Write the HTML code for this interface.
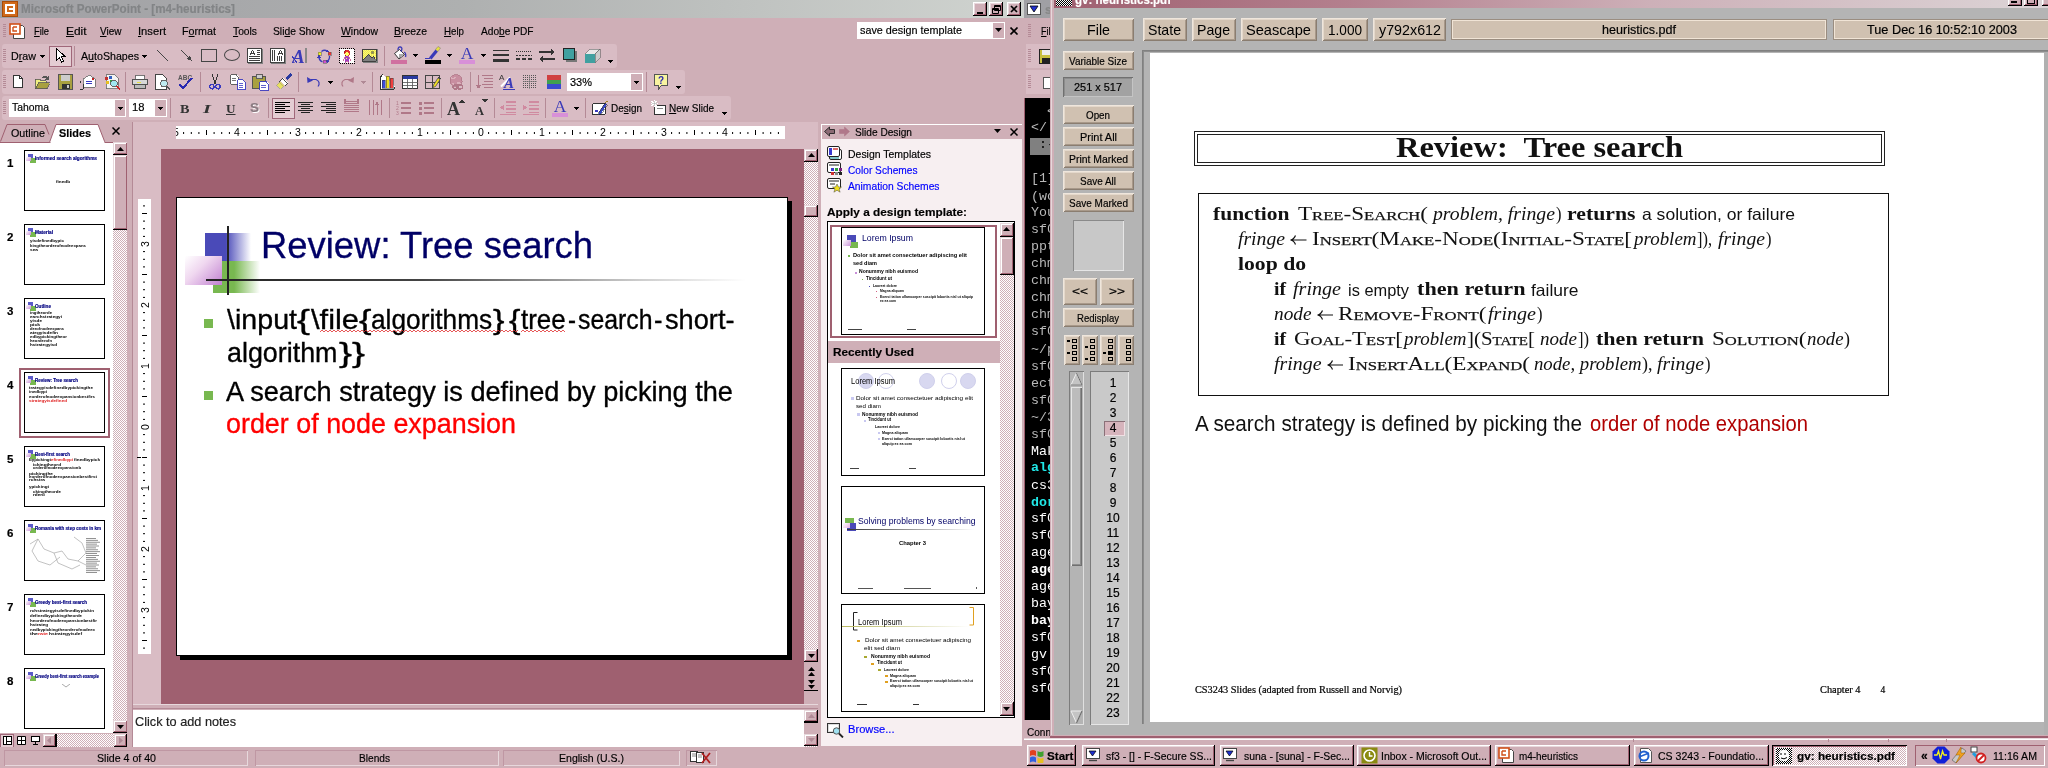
<!DOCTYPE html>
<html><head><meta charset="utf-8"><title>screenshot</title>
<style>
html,body{margin:0;padding:0;background:#cfafb7;}#s{position:relative;width:2048px;height:768px;overflow:hidden;background:#cfafb7;will-change:transform;}#s div,#s span.t,#s svg{position:absolute;}#s span.t{white-space:pre;}#s u{text-decoration:underline;text-underline-offset:1px;}
</style></head>
<body><div id="s">
<div style="left:0px;top:0px;width:1024px;height:18px;background:linear-gradient(90deg,#a0a0a4 0%,#aeb0b0 45%,#d0d4d0 100%);"></div>
<div style="left:2px;top:1px;width:16px;height:16px;background:#d06a1a;box-shadow:inset 0 0 0 1px #a84c08;"></div>
<div style="left:5px;top:4px;width:10px;height:10px;background:#fff;"></div>
<div style="left:7px;top:6px;width:6px;height:2px;background:#d06a1a;"></div>
<div style="left:7px;top:6px;width:2px;height:6px;background:#d06a1a;"></div>
<div style="left:7px;top:10px;width:6px;height:2px;background:#d06a1a;"></div>
<span class="t" style="font-family:'Liberation Sans', sans-serif;font-size:12.5px;font-weight:bold;color:#828486;line-height:12.5px;top:3.22px;-webkit-text-stroke:0.180px #828486;transform:scaleX(0.9337);transform-origin:0 0;left:20.50px;">Microsoft PowerPoint - [m4-heuristics]</span>
<div style="left:973px;top:2px;width:14px;height:14px;background:#cfafb7;box-shadow:inset -1px -1px 0 #000,inset 1px 1px 0 #fff,inset -2px -2px 0 #9f6070,inset 2px 2px 0 #e7d8dc;"></div>
<div style="left:989px;top:2px;width:14px;height:14px;background:#cfafb7;box-shadow:inset -1px -1px 0 #000,inset 1px 1px 0 #fff,inset -2px -2px 0 #9f6070,inset 2px 2px 0 #e7d8dc;"></div>
<div style="left:1007px;top:2px;width:14px;height:14px;background:#cfafb7;box-shadow:inset -1px -1px 0 #000,inset 1px 1px 0 #fff,inset -2px -2px 0 #9f6070,inset 2px 2px 0 #e7d8dc;"></div>
<div style="left:977px;top:12px;width:6px;height:2px;background:#000;"></div>
<svg style="left:989px;top:2px;" width="14" height="14" viewBox="0 0 14 14" shape-rendering="auto"><path d="M5.5 3.5h6v5h-6z M5.5 4.5h6 M3.5 6.5h6v5h-6z M3.5 7.5h6" fill="none" stroke="#000" stroke-width="1"/></svg>
<svg style="left:1007px;top:2px;" width="14" height="14" viewBox="0 0 14 14" shape-rendering="auto"><path d="M4 4l6 6M10 4l-6 6" stroke="#000" stroke-width="1.7" fill="none"/></svg>
<div style="left:0px;top:18px;width:1024px;height:26px;background:#cfafb7;"></div>
<div style="left:3px;top:24px;width:3px;height:14px;"><div style="left:0;top:0px;width:3px;height:1px;background:#b48a96"></div><div style="left:0;top:2px;width:3px;height:1px;background:#b48a96"></div><div style="left:0;top:4px;width:3px;height:1px;background:#b48a96"></div><div style="left:0;top:6px;width:3px;height:1px;background:#b48a96"></div><div style="left:0;top:8px;width:3px;height:1px;background:#b48a96"></div><div style="left:0;top:10px;width:3px;height:1px;background:#b48a96"></div><div style="left:0;top:12px;width:3px;height:1px;background:#b48a96"></div></div>
<svg style="left:9px;top:23px;" width="17" height="17" viewBox="0 0 17 17" shape-rendering="auto"><path d="M4.5 2.5h9l2 2v11h-11z" fill="#fff" stroke="#444" stroke-width="1"/><rect x="1" y="1" width="10" height="10" fill="#fff" stroke="#d0501a" stroke-width="1.6"/><path d="M4 4h4M4 4v4h4" stroke="#d0501a" stroke-width="1.4" fill="none"/></svg>
<span class="t" style="font-family:'Liberation Sans', sans-serif;font-size:11.5px;color:#000;line-height:11.5px;top:26.07px;-webkit-text-stroke:0.180px #000;transform:scaleX(0.8088);transform-origin:0 0;left:34.00px;"><u>F</u>ile</span>
<span class="t" style="font-family:'Liberation Sans', sans-serif;font-size:11.5px;color:#000;line-height:11.5px;top:26.07px;-webkit-text-stroke:0.180px #000;transform:scaleX(1.0339);transform-origin:0 0;left:65.50px;"><u>E</u>dit</span>
<span class="t" style="font-family:'Liberation Sans', sans-serif;font-size:11.5px;color:#000;line-height:11.5px;top:26.07px;-webkit-text-stroke:0.180px #000;transform:scaleX(0.8692);transform-origin:0 0;left:99.50px;"><u>V</u>iew</span>
<span class="t" style="font-family:'Liberation Sans', sans-serif;font-size:11.5px;color:#000;line-height:11.5px;top:26.07px;-webkit-text-stroke:0.180px #000;transform:scaleX(0.9729);transform-origin:0 0;left:138.00px;"><u>I</u>nsert</span>
<span class="t" style="font-family:'Liberation Sans', sans-serif;font-size:11.5px;color:#000;line-height:11.5px;top:26.07px;-webkit-text-stroke:0.180px #000;transform:scaleX(0.9331);transform-origin:0 0;left:182.00px;">F<u>o</u>rmat</span>
<span class="t" style="font-family:'Liberation Sans', sans-serif;font-size:11.5px;color:#000;line-height:11.5px;top:26.07px;-webkit-text-stroke:0.180px #000;transform:scaleX(0.8935);transform-origin:0 0;left:233.00px;"><u>T</u>ools</span>
<span class="t" style="font-family:'Liberation Sans', sans-serif;font-size:11.5px;color:#000;line-height:11.5px;top:26.07px;-webkit-text-stroke:0.180px #000;transform:scaleX(0.8949);transform-origin:0 0;left:273.00px;">Sli<u>d</u>e Show</span>
<span class="t" style="font-family:'Liberation Sans', sans-serif;font-size:11.5px;color:#000;line-height:11.5px;top:26.07px;-webkit-text-stroke:0.180px #000;transform:scaleX(0.9042);transform-origin:0 0;left:341.00px;"><u>W</u>indow</span>
<span class="t" style="font-family:'Liberation Sans', sans-serif;font-size:11.5px;color:#000;line-height:11.5px;top:26.07px;-webkit-text-stroke:0.180px #000;transform:scaleX(0.9053);transform-origin:0 0;left:394.00px;"><u>B</u>reeze</span>
<span class="t" style="font-family:'Liberation Sans', sans-serif;font-size:11.5px;color:#000;line-height:11.5px;top:26.07px;-webkit-text-stroke:0.180px #000;transform:scaleX(0.8449);transform-origin:0 0;left:444.00px;"><u>H</u>elp</span>
<span class="t" style="font-family:'Liberation Sans', sans-serif;font-size:11.5px;color:#000;line-height:11.5px;top:26.07px;-webkit-text-stroke:0.180px #000;transform:scaleX(0.8828);transform-origin:0 0;left:480.50px;">Ado<u>b</u>e PDF</span>
<div style="left:857px;top:22px;width:148px;height:17px;background:#fff;box-shadow:inset 0 0 0 1px #fff;"></div>
<div style="left:993px;top:23px;width:11px;height:15px;background:#cfafb7;"></div>
<svg style="left:995px;top:28px;" width="7" height="4" viewBox="0 0 7 4" shape-rendering="auto"><path d="M0 0h7l-3.5 4z" fill="#000"/></svg>
<span class="t" style="font-family:'Liberation Sans', sans-serif;font-size:11.5px;color:#000;line-height:11.5px;top:25.07px;-webkit-text-stroke:0.180px #000;transform:scaleX(0.9385);transform-origin:0 0;left:860.00px;">save design template</span>
<svg style="left:1010px;top:27px;" width="9" height="8" viewBox="0 0 9 8" shape-rendering="auto"><path d="M0.5 0.5l7 7M7.5 0.5l-7 7" stroke="#000" stroke-width="1.6" fill="none"/></svg>
<div style="left:2px;top:44px;width:615px;height:24px;background:#d9bcc4;border-radius:3px;"></div>
<div style="left:2px;top:70px;width:683px;height:24px;background:#d9bcc4;border-radius:3px;"></div>
<div style="left:2px;top:96px;width:729px;height:24px;background:#d9bcc4;border-radius:3px;"></div>
<div style="left:3px;top:49px;width:3px;height:14px;"><div style="left:0;top:0px;width:3px;height:1px;background:#b48a96"></div><div style="left:0;top:2px;width:3px;height:1px;background:#b48a96"></div><div style="left:0;top:4px;width:3px;height:1px;background:#b48a96"></div><div style="left:0;top:6px;width:3px;height:1px;background:#b48a96"></div><div style="left:0;top:8px;width:3px;height:1px;background:#b48a96"></div><div style="left:0;top:10px;width:3px;height:1px;background:#b48a96"></div><div style="left:0;top:12px;width:3px;height:1px;background:#b48a96"></div></div>
<div style="left:3px;top:75px;width:3px;height:14px;"><div style="left:0;top:0px;width:3px;height:1px;background:#b48a96"></div><div style="left:0;top:2px;width:3px;height:1px;background:#b48a96"></div><div style="left:0;top:4px;width:3px;height:1px;background:#b48a96"></div><div style="left:0;top:6px;width:3px;height:1px;background:#b48a96"></div><div style="left:0;top:8px;width:3px;height:1px;background:#b48a96"></div><div style="left:0;top:10px;width:3px;height:1px;background:#b48a96"></div><div style="left:0;top:12px;width:3px;height:1px;background:#b48a96"></div></div>
<div style="left:3px;top:101px;width:3px;height:14px;"><div style="left:0;top:0px;width:3px;height:1px;background:#b48a96"></div><div style="left:0;top:2px;width:3px;height:1px;background:#b48a96"></div><div style="left:0;top:4px;width:3px;height:1px;background:#b48a96"></div><div style="left:0;top:6px;width:3px;height:1px;background:#b48a96"></div><div style="left:0;top:8px;width:3px;height:1px;background:#b48a96"></div><div style="left:0;top:10px;width:3px;height:1px;background:#b48a96"></div><div style="left:0;top:12px;width:3px;height:1px;background:#b48a96"></div></div>
<span class="t" style="font-family:'Liberation Sans', sans-serif;font-size:11.5px;color:#000;line-height:11.5px;top:51.07px;-webkit-text-stroke:0.180px #000;transform:scaleX(0.9308);transform-origin:0 0;left:10.50px;">D<u>r</u>aw</span>
<svg style="left:39.5px;top:55px;" width="5" height="3" viewBox="0 0 5 3" shape-rendering="crispEdges"><path d="M0 0h5l-2.5 3z" fill="#000"/></svg>
<div style="left:49px;top:45.5px;width:23px;height:21px;background:#e4cdd3;box-shadow:inset 0 0 0 1px #a0687a;"></div>
<svg style="left:54px;top:47px;" width="14" height="18" viewBox="0 0 14 18" shape-rendering="crispEdges"><path d="M2.5 1.5v12l3-3 2.2 4.7 1.8-0.9-2.2-4.5h4z" fill="#fff" stroke="#000" stroke-width="1"/></svg>
<div style="left:74px;top:46px;width:1px;height:20px;background:#b48a96;"></div>
<span class="t" style="font-family:'Liberation Sans', sans-serif;font-size:11.5px;color:#000;line-height:11.5px;top:51.07px;-webkit-text-stroke:0.180px #000;transform:scaleX(0.9252);transform-origin:0 0;left:80.50px;">A<u>u</u>toShapes</span>
<svg style="left:142px;top:55px;" width="5" height="3" viewBox="0 0 5 3" shape-rendering="crispEdges"><path d="M0 0h5l-2.5 3z" fill="#000"/></svg>
<svg style="left:156px;top:48px;" width="16" height="16" viewBox="0 0 16 16" shape-rendering="crispEdges"><path d="M1 2l11 11" stroke="#444" stroke-width="1"/></svg>
<svg style="left:180px;top:48px;" width="16" height="16" viewBox="0 0 16 16" shape-rendering="crispEdges"><path d="M1 2l10 10" stroke="#444" stroke-width="1"/><path d="M12 13l-5.5-2 3.5-3.5z" fill="#444"/></svg>
<div style="left:201px;top:49px;width:16px;height:13px;box-sizing:border-box;border:1px solid #444;"></div>
<div style="left:224px;top:49px;width:16px;height:12px;box-sizing:border-box;border:1px solid #444;border-radius:50%;"></div>
<svg style="left:247px;top:48px;" width="16" height="16" viewBox="0 0 16 16" shape-rendering="crispEdges"><rect x="0" y="0" width="15" height="1" fill="#404040"/><rect x="0" y="1" width="1" height="1" fill="#404040"/><rect x="1" y="1" width="13" height="1" fill="#fff"/><rect x="14" y="1" width="1" height="1" fill="#404040"/><rect x="15" y="1" width="1" height="1" fill="#808080"/><rect x="0" y="2" width="1" height="1" fill="#404040"/><rect x="1" y="2" width="4" height="1" fill="#fff"/><rect x="5" y="2" width="1" height="1" fill="#404040"/><rect x="6" y="2" width="4" height="1" fill="#fff"/><rect x="10" y="2" width="3" height="1" fill="#404040"/><rect x="13" y="2" width="1" height="1" fill="#fff"/><rect x="14" y="2" width="1" height="1" fill="#404040"/><rect x="15" y="2" width="1" height="1" fill="#808080"/><rect x="0" y="3" width="1" height="1" fill="#404040"/><rect x="1" y="3" width="3" height="1" fill="#fff"/><rect x="4" y="3" width="1" height="1" fill="#404040"/><rect x="5" y="3" width="1" height="1" fill="#fff"/><rect x="6" y="3" width="1" height="1" fill="#404040"/><rect x="7" y="3" width="7" height="1" fill="#fff"/><rect x="14" y="3" width="1" height="1" fill="#404040"/><rect x="15" y="3" width="1" height="1" fill="#808080"/><rect x="0" y="4" width="1" height="1" fill="#404040"/><rect x="1" y="4" width="3" height="1" fill="#fff"/><rect x="4" y="4" width="1" height="1" fill="#404040"/><rect x="5" y="4" width="1" height="1" fill="#fff"/><rect x="6" y="4" width="1" height="1" fill="#404040"/><rect x="7" y="4" width="3" height="1" fill="#fff"/><rect x="10" y="4" width="3" height="1" fill="#404040"/><rect x="13" y="4" width="1" height="1" fill="#fff"/><rect x="14" y="4" width="1" height="1" fill="#404040"/><rect x="15" y="4" width="1" height="1" fill="#808080"/><rect x="0" y="5" width="1" height="1" fill="#404040"/><rect x="1" y="5" width="2" height="1" fill="#fff"/><rect x="3" y="5" width="5" height="1" fill="#404040"/><rect x="8" y="5" width="6" height="1" fill="#fff"/><rect x="14" y="5" width="1" height="1" fill="#404040"/><rect x="15" y="5" width="1" height="1" fill="#808080"/><rect x="0" y="6" width="1" height="1" fill="#404040"/><rect x="1" y="6" width="2" height="1" fill="#fff"/><rect x="3" y="6" width="1" height="1" fill="#404040"/><rect x="4" y="6" width="3" height="1" fill="#fff"/><rect x="7" y="6" width="1" height="1" fill="#404040"/><rect x="8" y="6" width="2" height="1" fill="#fff"/><rect x="10" y="6" width="3" height="1" fill="#404040"/><rect x="13" y="6" width="1" height="1" fill="#fff"/><rect x="14" y="6" width="1" height="1" fill="#404040"/><rect x="15" y="6" width="1" height="1" fill="#808080"/><rect x="0" y="7" width="1" height="1" fill="#404040"/><rect x="1" y="7" width="13" height="1" fill="#fff"/><rect x="14" y="7" width="1" height="1" fill="#404040"/><rect x="15" y="7" width="1" height="1" fill="#808080"/><rect x="0" y="8" width="1" height="1" fill="#404040"/><rect x="1" y="8" width="1" height="1" fill="#fff"/><rect x="2" y="8" width="11" height="1" fill="#404040"/><rect x="13" y="8" width="1" height="1" fill="#fff"/><rect x="14" y="8" width="1" height="1" fill="#404040"/><rect x="15" y="8" width="1" height="1" fill="#808080"/><rect x="0" y="9" width="1" height="1" fill="#404040"/><rect x="1" y="9" width="13" height="1" fill="#fff"/><rect x="14" y="9" width="1" height="1" fill="#404040"/><rect x="15" y="9" width="1" height="1" fill="#808080"/><rect x="0" y="10" width="1" height="1" fill="#404040"/><rect x="1" y="10" width="1" height="1" fill="#fff"/><rect x="2" y="10" width="11" height="1" fill="#404040"/><rect x="13" y="10" width="1" height="1" fill="#fff"/><rect x="14" y="10" width="1" height="1" fill="#404040"/><rect x="15" y="10" width="1" height="1" fill="#808080"/><rect x="0" y="11" width="1" height="1" fill="#404040"/><rect x="1" y="11" width="13" height="1" fill="#fff"/><rect x="14" y="11" width="1" height="1" fill="#404040"/><rect x="15" y="11" width="1" height="1" fill="#808080"/><rect x="0" y="12" width="1" height="1" fill="#404040"/><rect x="1" y="12" width="1" height="1" fill="#fff"/><rect x="2" y="12" width="11" height="1" fill="#404040"/><rect x="13" y="12" width="1" height="1" fill="#fff"/><rect x="14" y="12" width="1" height="1" fill="#404040"/><rect x="15" y="12" width="1" height="1" fill="#808080"/><rect x="0" y="13" width="1" height="1" fill="#404040"/><rect x="1" y="13" width="13" height="1" fill="#fff"/><rect x="14" y="13" width="1" height="1" fill="#404040"/><rect x="15" y="13" width="1" height="1" fill="#808080"/><rect x="0" y="14" width="15" height="1" fill="#404040"/><rect x="15" y="14" width="1" height="1" fill="#808080"/><rect x="1" y="15" width="15" height="1" fill="#808080"/></svg>
<svg style="left:270px;top:48px;" width="16" height="16" viewBox="0 0 16 16" shape-rendering="crispEdges"><rect x="0" y="0" width="15" height="1" fill="#404040"/><rect x="0" y="1" width="1" height="1" fill="#404040"/><rect x="1" y="1" width="13" height="1" fill="#fff"/><rect x="14" y="1" width="1" height="1" fill="#404040"/><rect x="15" y="1" width="1" height="1" fill="#808080"/><rect x="0" y="2" width="1" height="1" fill="#404040"/><rect x="1" y="2" width="1" height="1" fill="#fff"/><rect x="2" y="2" width="1" height="1" fill="#404040"/><rect x="3" y="2" width="1" height="1" fill="#fff"/><rect x="4" y="2" width="1" height="1" fill="#404040"/><rect x="5" y="2" width="5" height="1" fill="#fff"/><rect x="10" y="2" width="1" height="1" fill="#404040"/><rect x="11" y="2" width="3" height="1" fill="#fff"/><rect x="14" y="2" width="1" height="1" fill="#404040"/><rect x="15" y="2" width="1" height="1" fill="#808080"/><rect x="0" y="3" width="1" height="1" fill="#404040"/><rect x="1" y="3" width="1" height="1" fill="#fff"/><rect x="2" y="3" width="1" height="1" fill="#404040"/><rect x="3" y="3" width="1" height="1" fill="#fff"/><rect x="4" y="3" width="1" height="1" fill="#404040"/><rect x="5" y="3" width="4" height="1" fill="#fff"/><rect x="9" y="3" width="1" height="1" fill="#404040"/><rect x="10" y="3" width="1" height="1" fill="#fff"/><rect x="11" y="3" width="1" height="1" fill="#404040"/><rect x="12" y="3" width="2" height="1" fill="#fff"/><rect x="14" y="3" width="1" height="1" fill="#404040"/><rect x="15" y="3" width="1" height="1" fill="#808080"/><rect x="0" y="4" width="1" height="1" fill="#404040"/><rect x="1" y="4" width="1" height="1" fill="#fff"/><rect x="2" y="4" width="1" height="1" fill="#404040"/><rect x="3" y="4" width="1" height="1" fill="#fff"/><rect x="4" y="4" width="1" height="1" fill="#404040"/><rect x="5" y="4" width="4" height="1" fill="#fff"/><rect x="9" y="4" width="1" height="1" fill="#404040"/><rect x="10" y="4" width="1" height="1" fill="#fff"/><rect x="11" y="4" width="1" height="1" fill="#404040"/><rect x="12" y="4" width="2" height="1" fill="#fff"/><rect x="14" y="4" width="1" height="1" fill="#404040"/><rect x="15" y="4" width="1" height="1" fill="#808080"/><rect x="0" y="5" width="1" height="1" fill="#404040"/><rect x="1" y="5" width="1" height="1" fill="#fff"/><rect x="2" y="5" width="1" height="1" fill="#404040"/><rect x="3" y="5" width="1" height="1" fill="#fff"/><rect x="4" y="5" width="1" height="1" fill="#404040"/><rect x="5" y="5" width="3" height="1" fill="#fff"/><rect x="8" y="5" width="5" height="1" fill="#404040"/><rect x="13" y="5" width="1" height="1" fill="#fff"/><rect x="14" y="5" width="1" height="1" fill="#404040"/><rect x="15" y="5" width="1" height="1" fill="#808080"/><rect x="0" y="6" width="1" height="1" fill="#404040"/><rect x="1" y="6" width="1" height="1" fill="#fff"/><rect x="2" y="6" width="1" height="1" fill="#404040"/><rect x="3" y="6" width="1" height="1" fill="#fff"/><rect x="4" y="6" width="1" height="1" fill="#404040"/><rect x="5" y="6" width="3" height="1" fill="#fff"/><rect x="8" y="6" width="1" height="1" fill="#404040"/><rect x="9" y="6" width="3" height="1" fill="#fff"/><rect x="12" y="6" width="1" height="1" fill="#404040"/><rect x="13" y="6" width="1" height="1" fill="#fff"/><rect x="14" y="6" width="1" height="1" fill="#404040"/><rect x="15" y="6" width="1" height="1" fill="#808080"/><rect x="0" y="7" width="1" height="1" fill="#404040"/><rect x="1" y="7" width="1" height="1" fill="#fff"/><rect x="2" y="7" width="1" height="1" fill="#404040"/><rect x="3" y="7" width="1" height="1" fill="#fff"/><rect x="4" y="7" width="1" height="1" fill="#404040"/><rect x="5" y="7" width="9" height="1" fill="#fff"/><rect x="14" y="7" width="1" height="1" fill="#404040"/><rect x="15" y="7" width="1" height="1" fill="#808080"/><rect x="0" y="8" width="1" height="1" fill="#404040"/><rect x="1" y="8" width="1" height="1" fill="#fff"/><rect x="2" y="8" width="1" height="1" fill="#404040"/><rect x="3" y="8" width="1" height="1" fill="#fff"/><rect x="4" y="8" width="1" height="1" fill="#404040"/><rect x="5" y="8" width="2" height="1" fill="#fff"/><rect x="7" y="8" width="1" height="1" fill="#404040"/><rect x="8" y="8" width="1" height="1" fill="#fff"/><rect x="9" y="8" width="1" height="1" fill="#404040"/><rect x="10" y="8" width="1" height="1" fill="#fff"/><rect x="11" y="8" width="1" height="1" fill="#404040"/><rect x="12" y="8" width="2" height="1" fill="#fff"/><rect x="14" y="8" width="1" height="1" fill="#404040"/><rect x="15" y="8" width="1" height="1" fill="#808080"/><rect x="0" y="9" width="1" height="1" fill="#404040"/><rect x="1" y="9" width="1" height="1" fill="#fff"/><rect x="2" y="9" width="1" height="1" fill="#404040"/><rect x="3" y="9" width="1" height="1" fill="#fff"/><rect x="4" y="9" width="1" height="1" fill="#404040"/><rect x="5" y="9" width="2" height="1" fill="#fff"/><rect x="7" y="9" width="1" height="1" fill="#404040"/><rect x="8" y="9" width="1" height="1" fill="#fff"/><rect x="9" y="9" width="1" height="1" fill="#404040"/><rect x="10" y="9" width="1" height="1" fill="#fff"/><rect x="11" y="9" width="1" height="1" fill="#404040"/><rect x="12" y="9" width="2" height="1" fill="#fff"/><rect x="14" y="9" width="1" height="1" fill="#404040"/><rect x="15" y="9" width="1" height="1" fill="#808080"/><rect x="0" y="10" width="1" height="1" fill="#404040"/><rect x="1" y="10" width="1" height="1" fill="#fff"/><rect x="2" y="10" width="1" height="1" fill="#404040"/><rect x="3" y="10" width="1" height="1" fill="#fff"/><rect x="4" y="10" width="1" height="1" fill="#404040"/><rect x="5" y="10" width="2" height="1" fill="#fff"/><rect x="7" y="10" width="1" height="1" fill="#404040"/><rect x="8" y="10" width="1" height="1" fill="#fff"/><rect x="9" y="10" width="1" height="1" fill="#404040"/><rect x="10" y="10" width="1" height="1" fill="#fff"/><rect x="11" y="10" width="1" height="1" fill="#404040"/><rect x="12" y="10" width="2" height="1" fill="#fff"/><rect x="14" y="10" width="1" height="1" fill="#404040"/><rect x="15" y="10" width="1" height="1" fill="#808080"/><rect x="0" y="11" width="1" height="1" fill="#404040"/><rect x="1" y="11" width="1" height="1" fill="#fff"/><rect x="2" y="11" width="1" height="1" fill="#404040"/><rect x="3" y="11" width="1" height="1" fill="#fff"/><rect x="4" y="11" width="1" height="1" fill="#404040"/><rect x="5" y="11" width="2" height="1" fill="#fff"/><rect x="7" y="11" width="1" height="1" fill="#404040"/><rect x="8" y="11" width="1" height="1" fill="#fff"/><rect x="9" y="11" width="1" height="1" fill="#404040"/><rect x="10" y="11" width="1" height="1" fill="#fff"/><rect x="11" y="11" width="1" height="1" fill="#404040"/><rect x="12" y="11" width="2" height="1" fill="#fff"/><rect x="14" y="11" width="1" height="1" fill="#404040"/><rect x="15" y="11" width="1" height="1" fill="#808080"/><rect x="0" y="12" width="1" height="1" fill="#404040"/><rect x="1" y="12" width="1" height="1" fill="#fff"/><rect x="2" y="12" width="1" height="1" fill="#404040"/><rect x="3" y="12" width="1" height="1" fill="#fff"/><rect x="4" y="12" width="1" height="1" fill="#404040"/><rect x="5" y="12" width="2" height="1" fill="#fff"/><rect x="7" y="12" width="1" height="1" fill="#404040"/><rect x="8" y="12" width="1" height="1" fill="#fff"/><rect x="9" y="12" width="1" height="1" fill="#404040"/><rect x="10" y="12" width="1" height="1" fill="#fff"/><rect x="11" y="12" width="1" height="1" fill="#404040"/><rect x="12" y="12" width="2" height="1" fill="#fff"/><rect x="14" y="12" width="1" height="1" fill="#404040"/><rect x="15" y="12" width="1" height="1" fill="#808080"/><rect x="0" y="13" width="1" height="1" fill="#404040"/><rect x="1" y="13" width="13" height="1" fill="#fff"/><rect x="14" y="13" width="1" height="1" fill="#404040"/><rect x="15" y="13" width="1" height="1" fill="#808080"/><rect x="0" y="14" width="15" height="1" fill="#404040"/><rect x="15" y="14" width="1" height="1" fill="#808080"/><rect x="1" y="15" width="15" height="1" fill="#808080"/></svg>
<svg style="left:292px;top:47px;" width="17" height="18" viewBox="0 0 17 18" shape-rendering="crispEdges"><text x="0" y="15.500" font-family="Liberation Serif" font-size="19" font-weight="bold" font-style="italic" fill="#3a3ab8" shape-rendering="auto">A</text><rect x="13" y="1" width="2" height="15" fill="#888"/><path d="M0 9l5 7" stroke="#3a3ab8" stroke-width="1"/></svg>
<svg style="left:316px;top:48px;" width="16" height="16" viewBox="0 0 16 16" shape-rendering="crispEdges"><path d="M5.500 3.500q3-2.500 6 0M13.500 8q0.500 3.500-3 6M6.500 14q-4-2-3.500-6" fill="none" stroke="#3a3ab8" stroke-width="1.300" shape-rendering="auto"/><path d="M11 1l2.500 3-3.500 0.500zM11 15.500l-1-3.500 3.500 1zM1 9.500l2-3 1.500 3z" fill="#3a3ab8"/><rect x="2" y="4" width="3" height="3" fill="#f0f020" stroke="#555" stroke-width="0.500"/><rect x="12" y="4" width="3" height="3" fill="#f03030" stroke="#555" stroke-width="0.500"/><rect x="7" y="12" width="3" height="3" fill="#d050d0" stroke="#555" stroke-width="0.500"/></svg>
<svg style="left:339px;top:48px;" width="16" height="16" viewBox="0 0 16 16" shape-rendering="crispEdges"><rect x="0" y="0" width="1" height="1" fill="#000"/><rect x="2" y="0" width="1" height="1" fill="#000"/><rect x="4" y="0" width="1" height="1" fill="#000"/><rect x="6" y="0" width="1" height="1" fill="#000"/><rect x="8" y="0" width="1" height="1" fill="#000"/><rect x="10" y="0" width="1" height="1" fill="#000"/><rect x="12" y="0" width="1" height="1" fill="#000"/><rect x="14" y="0" width="1" height="1" fill="#000"/><rect x="1" y="1" width="14" height="1" fill="#fff"/><rect x="15" y="1" width="1" height="1" fill="#000"/><rect x="0" y="2" width="1" height="1" fill="#000"/><rect x="1" y="2" width="5" height="1" fill="#fff"/><rect x="6" y="2" width="1" height="1" fill="#a02020"/><rect x="7" y="2" width="3" height="1" fill="#e03030"/><rect x="10" y="2" width="5" height="1" fill="#fff"/><rect x="1" y="3" width="4" height="1" fill="#fff"/><rect x="5" y="3" width="1" height="1" fill="#a02020"/><rect x="6" y="3" width="5" height="1" fill="#e03030"/><rect x="11" y="3" width="4" height="1" fill="#fff"/><rect x="15" y="3" width="1" height="1" fill="#000"/><rect x="0" y="4" width="1" height="1" fill="#000"/><rect x="1" y="4" width="4" height="1" fill="#fff"/><rect x="5" y="4" width="1" height="1" fill="#a02020"/><rect x="6" y="4" width="1" height="1" fill="#e03030"/><rect x="7" y="4" width="2" height="1" fill="#ffff66"/><rect x="9" y="4" width="2" height="1" fill="#e03030"/><rect x="11" y="4" width="4" height="1" fill="#fff"/><rect x="1" y="5" width="4" height="1" fill="#fff"/><rect x="5" y="5" width="1" height="1" fill="#e03030"/><rect x="6" y="5" width="4" height="1" fill="#ffff66"/><rect x="10" y="5" width="1" height="1" fill="#e03030"/><rect x="11" y="5" width="4" height="1" fill="#fff"/><rect x="15" y="5" width="1" height="1" fill="#000"/><rect x="0" y="6" width="1" height="1" fill="#000"/><rect x="1" y="6" width="5" height="1" fill="#fff"/><rect x="6" y="6" width="4" height="1" fill="#ffff66"/><rect x="10" y="6" width="1" height="1" fill="#e03030"/><rect x="11" y="6" width="4" height="1" fill="#fff"/><rect x="1" y="7" width="5" height="1" fill="#fff"/><rect x="6" y="7" width="1" height="1" fill="#a02020"/><rect x="7" y="7" width="2" height="1" fill="#ffff66"/><rect x="9" y="7" width="1" height="1" fill="#e03030"/><rect x="10" y="7" width="5" height="1" fill="#fff"/><rect x="15" y="7" width="1" height="1" fill="#000"/><rect x="0" y="8" width="1" height="1" fill="#000"/><rect x="1" y="8" width="5" height="1" fill="#fff"/><rect x="6" y="8" width="1" height="1" fill="#d070a0"/><rect x="7" y="8" width="2" height="1" fill="#a040c0"/><rect x="9" y="8" width="1" height="1" fill="#d070a0"/><rect x="10" y="8" width="5" height="1" fill="#fff"/><rect x="1" y="9" width="4" height="1" fill="#fff"/><rect x="5" y="9" width="1" height="1" fill="#d070a0"/><rect x="6" y="9" width="4" height="1" fill="#a040c0"/><rect x="10" y="9" width="1" height="1" fill="#d070a0"/><rect x="11" y="9" width="4" height="1" fill="#fff"/><rect x="15" y="9" width="1" height="1" fill="#000"/><rect x="0" y="10" width="1" height="1" fill="#000"/><rect x="1" y="10" width="4" height="1" fill="#fff"/><rect x="5" y="10" width="1" height="1" fill="#d070a0"/><rect x="6" y="10" width="1" height="1" fill="#a040c0"/><rect x="7" y="10" width="1" height="1" fill="#ffff66"/><rect x="8" y="10" width="2" height="1" fill="#a040c0"/><rect x="10" y="10" width="1" height="1" fill="#d070a0"/><rect x="11" y="10" width="4" height="1" fill="#fff"/><rect x="1" y="11" width="3" height="1" fill="#fff"/><rect x="4" y="11" width="1" height="1" fill="#d070a0"/><rect x="5" y="11" width="1" height="1" fill="#fff"/><rect x="6" y="11" width="4" height="1" fill="#a040c0"/><rect x="10" y="11" width="1" height="1" fill="#fff"/><rect x="11" y="11" width="1" height="1" fill="#d070a0"/><rect x="12" y="11" width="3" height="1" fill="#fff"/><rect x="15" y="11" width="1" height="1" fill="#000"/><rect x="0" y="12" width="1" height="1" fill="#000"/><rect x="1" y="12" width="3" height="1" fill="#fff"/><rect x="4" y="12" width="1" height="1" fill="#d070a0"/><rect x="5" y="12" width="1" height="1" fill="#fff"/><rect x="6" y="12" width="4" height="1" fill="#a040c0"/><rect x="10" y="12" width="1" height="1" fill="#fff"/><rect x="11" y="12" width="1" height="1" fill="#d070a0"/><rect x="12" y="12" width="3" height="1" fill="#fff"/><rect x="1" y="13" width="5" height="1" fill="#fff"/><rect x="6" y="13" width="1" height="1" fill="#a040c0"/><rect x="7" y="13" width="2" height="1" fill="#d070a0"/><rect x="9" y="13" width="1" height="1" fill="#a040c0"/><rect x="10" y="13" width="5" height="1" fill="#fff"/><rect x="15" y="13" width="1" height="1" fill="#000"/><rect x="0" y="14" width="1" height="1" fill="#000"/><rect x="1" y="14" width="5" height="1" fill="#fff"/><rect x="6" y="14" width="1" height="1" fill="#d070a0"/><rect x="7" y="14" width="2" height="1" fill="#fff"/><rect x="9" y="14" width="1" height="1" fill="#d070a0"/><rect x="10" y="14" width="5" height="1" fill="#fff"/><rect x="1" y="15" width="1" height="1" fill="#000"/><rect x="3" y="15" width="1" height="1" fill="#000"/><rect x="5" y="15" width="1" height="1" fill="#000"/><rect x="7" y="15" width="1" height="1" fill="#000"/><rect x="9" y="15" width="1" height="1" fill="#000"/><rect x="11" y="15" width="1" height="1" fill="#000"/><rect x="13" y="15" width="1" height="1" fill="#000"/><rect x="15" y="15" width="1" height="1" fill="#000"/></svg>
<svg style="left:362px;top:48px;" width="16" height="16" viewBox="0 0 16 16" shape-rendering="crispEdges"><rect x="0" y="1" width="15" height="1" fill="#404040"/><rect x="15" y="1" width="1" height="1" fill="#808080"/><rect x="0" y="2" width="1" height="1" fill="#404040"/><rect x="1" y="2" width="1" height="1" fill="#ffff66"/><rect x="2" y="2" width="1" height="1" fill="#e8e060"/><rect x="3" y="2" width="1" height="1" fill="#ffff66"/><rect x="4" y="2" width="1" height="1" fill="#e8e060"/><rect x="5" y="2" width="1" height="1" fill="#ffff66"/><rect x="6" y="2" width="1" height="1" fill="#e8e060"/><rect x="7" y="2" width="1" height="1" fill="#ffff66"/><rect x="8" y="2" width="1" height="1" fill="#e8e060"/><rect x="9" y="2" width="1" height="1" fill="#ffff66"/><rect x="10" y="2" width="1" height="1" fill="#e8e060"/><rect x="11" y="2" width="1" height="1" fill="#ffff66"/><rect x="12" y="2" width="1" height="1" fill="#e8e060"/><rect x="13" y="2" width="1" height="1" fill="#ffff66"/><rect x="14" y="2" width="1" height="1" fill="#404040"/><rect x="15" y="2" width="1" height="1" fill="#808080"/><rect x="0" y="3" width="1" height="1" fill="#404040"/><rect x="1" y="3" width="1" height="1" fill="#e8e060"/><rect x="2" y="3" width="1" height="1" fill="#ffff66"/><rect x="3" y="3" width="1" height="1" fill="#e8e060"/><rect x="4" y="3" width="1" height="1" fill="#ffff66"/><rect x="5" y="3" width="1" height="1" fill="#e8e060"/><rect x="6" y="3" width="1" height="1" fill="#ffff66"/><rect x="7" y="3" width="1" height="1" fill="#e8e060"/><rect x="8" y="3" width="1" height="1" fill="#ffff66"/><rect x="9" y="3" width="3" height="1" fill="#a0a040"/><rect x="12" y="3" width="1" height="1" fill="#ffff66"/><rect x="13" y="3" width="1" height="1" fill="#e8e060"/><rect x="14" y="3" width="1" height="1" fill="#404040"/><rect x="15" y="3" width="1" height="1" fill="#808080"/><rect x="0" y="4" width="1" height="1" fill="#404040"/><rect x="1" y="4" width="1" height="1" fill="#ffff66"/><rect x="2" y="4" width="1" height="1" fill="#e8e060"/><rect x="3" y="4" width="1" height="1" fill="#ffff66"/><rect x="4" y="4" width="1" height="1" fill="#e8e060"/><rect x="5" y="4" width="1" height="1" fill="#ffff66"/><rect x="6" y="4" width="1" height="1" fill="#e8e060"/><rect x="7" y="4" width="1" height="1" fill="#ffff66"/><rect x="8" y="4" width="1" height="1" fill="#e8e060"/><rect x="9" y="4" width="1" height="1" fill="#a0a040"/><rect x="10" y="4" width="1" height="1" fill="#808080"/><rect x="11" y="4" width="1" height="1" fill="#a0a040"/><rect x="12" y="4" width="1" height="1" fill="#e8e060"/><rect x="13" y="4" width="1" height="1" fill="#ffff66"/><rect x="14" y="4" width="1" height="1" fill="#404040"/><rect x="15" y="4" width="1" height="1" fill="#808080"/><rect x="0" y="5" width="1" height="1" fill="#404040"/><rect x="1" y="5" width="1" height="1" fill="#e8e060"/><rect x="2" y="5" width="1" height="1" fill="#ffff66"/><rect x="3" y="5" width="1" height="1" fill="#e8e060"/><rect x="4" y="5" width="1" height="1" fill="#ffff66"/><rect x="5" y="5" width="1" height="1" fill="#e8e060"/><rect x="6" y="5" width="1" height="1" fill="#ffff66"/><rect x="7" y="5" width="1" height="1" fill="#e8e060"/><rect x="8" y="5" width="1" height="1" fill="#ffff66"/><rect x="9" y="5" width="3" height="1" fill="#a0a040"/><rect x="12" y="5" width="1" height="1" fill="#ffff66"/><rect x="13" y="5" width="1" height="1" fill="#e8e060"/><rect x="14" y="5" width="1" height="1" fill="#404040"/><rect x="15" y="5" width="1" height="1" fill="#808080"/><rect x="0" y="6" width="1" height="1" fill="#404040"/><rect x="1" y="6" width="1" height="1" fill="#ffff66"/><rect x="2" y="6" width="1" height="1" fill="#e8e060"/><rect x="3" y="6" width="1" height="1" fill="#ffff66"/><rect x="4" y="6" width="1" height="1" fill="#e8e060"/><rect x="5" y="6" width="1" height="1" fill="#ffff66"/><rect x="6" y="6" width="1" height="1" fill="#404040"/><rect x="7" y="6" width="1" height="1" fill="#e8e060"/><rect x="8" y="6" width="1" height="1" fill="#ffff66"/><rect x="9" y="6" width="1" height="1" fill="#e8e060"/><rect x="10" y="6" width="1" height="1" fill="#ffff66"/><rect x="11" y="6" width="1" height="1" fill="#e8e060"/><rect x="12" y="6" width="2" height="1" fill="#ffff66"/><rect x="14" y="6" width="1" height="1" fill="#404040"/><rect x="15" y="6" width="1" height="1" fill="#808080"/><rect x="0" y="7" width="1" height="1" fill="#404040"/><rect x="1" y="7" width="1" height="1" fill="#e8e060"/><rect x="2" y="7" width="1" height="1" fill="#ffff66"/><rect x="3" y="7" width="1" height="1" fill="#e8e060"/><rect x="4" y="7" width="1" height="1" fill="#ffff66"/><rect x="5" y="7" width="1" height="1" fill="#404040"/><rect x="6" y="7" width="1" height="1" fill="#808080"/><rect x="7" y="7" width="1" height="1" fill="#404040"/><rect x="8" y="7" width="1" height="1" fill="#ffff66"/><rect x="9" y="7" width="1" height="1" fill="#e8e060"/><rect x="10" y="7" width="1" height="1" fill="#ffff66"/><rect x="11" y="7" width="1" height="1" fill="#e8e060"/><rect x="12" y="7" width="1" height="1" fill="#ffff66"/><rect x="13" y="7" width="1" height="1" fill="#e8e060"/><rect x="14" y="7" width="1" height="1" fill="#404040"/><rect x="15" y="7" width="1" height="1" fill="#808080"/><rect x="0" y="8" width="1" height="1" fill="#404040"/><rect x="1" y="8" width="1" height="1" fill="#ffff66"/><rect x="2" y="8" width="1" height="1" fill="#e8e060"/><rect x="3" y="8" width="1" height="1" fill="#ffff66"/><rect x="4" y="8" width="1" height="1" fill="#404040"/><rect x="5" y="8" width="3" height="1" fill="#808080"/><rect x="8" y="8" width="1" height="1" fill="#404040"/><rect x="9" y="8" width="1" height="1" fill="#e8e060"/><rect x="10" y="8" width="1" height="1" fill="#ffff66"/><rect x="11" y="8" width="1" height="1" fill="#404040"/><rect x="12" y="8" width="2" height="1" fill="#ffff66"/><rect x="14" y="8" width="1" height="1" fill="#404040"/><rect x="15" y="8" width="1" height="1" fill="#808080"/><rect x="0" y="9" width="1" height="1" fill="#404040"/><rect x="1" y="9" width="1" height="1" fill="#e8e060"/><rect x="2" y="9" width="1" height="1" fill="#ffff66"/><rect x="3" y="9" width="1" height="1" fill="#404040"/><rect x="4" y="9" width="5" height="1" fill="#808080"/><rect x="9" y="9" width="2" height="1" fill="#404040"/><rect x="11" y="9" width="1" height="1" fill="#808080"/><rect x="12" y="9" width="1" height="1" fill="#404040"/><rect x="13" y="9" width="1" height="1" fill="#e8e060"/><rect x="14" y="9" width="1" height="1" fill="#404040"/><rect x="15" y="9" width="1" height="1" fill="#808080"/><rect x="0" y="10" width="1" height="1" fill="#404040"/><rect x="1" y="10" width="1" height="1" fill="#ffff66"/><rect x="2" y="10" width="1" height="1" fill="#404040"/><rect x="3" y="10" width="9" height="1" fill="#808080"/><rect x="12" y="10" width="1" height="1" fill="#404040"/><rect x="13" y="10" width="1" height="1" fill="#ffff66"/><rect x="14" y="10" width="1" height="1" fill="#404040"/><rect x="15" y="10" width="1" height="1" fill="#808080"/><rect x="0" y="11" width="2" height="1" fill="#404040"/><rect x="2" y="11" width="12" height="1" fill="#808080"/><rect x="14" y="11" width="1" height="1" fill="#404040"/><rect x="15" y="11" width="1" height="1" fill="#808080"/><rect x="0" y="12" width="1" height="1" fill="#404040"/><rect x="1" y="12" width="13" height="1" fill="#808080"/><rect x="14" y="12" width="1" height="1" fill="#404040"/><rect x="15" y="12" width="1" height="1" fill="#808080"/><rect x="0" y="13" width="14" height="1" fill="#404040"/><rect x="14" y="13" width="2" height="1" fill="#808080"/><rect x="1" y="14" width="15" height="1" fill="#808080"/></svg>
<div style="left:384px;top:46px;width:1px;height:20px;background:#b48a96;"></div>
<svg style="left:391px;top:46px;" width="16" height="18" viewBox="0 0 16 18" shape-rendering="crispEdges"><path d="M3.500 7.500l5-4 5 5-5.500 4.500z" fill="#fff" stroke="#333" shape-rendering="auto"/><path d="M8.500 8l4.500 0.500-5 4z" fill="#aaa"/><path d="M7 4q0-3.500 2.500-3t0.500 4.500M13 6q2.500 1 1.500 5" fill="none" stroke="#3a3ab8" stroke-width="1.300" shape-rendering="auto"/><rect x="0" y="14" width="16" height="4" fill="#d070a0"/></svg>
<svg style="left:413px;top:54px;" width="5" height="3" viewBox="0 0 5 3" shape-rendering="crispEdges"><path d="M0 0h5l-2.5 3z" fill="#000"/></svg>
<svg style="left:425px;top:46px;" width="16" height="18" viewBox="0 0 16 18" shape-rendering="crispEdges"><path d="M4 11.500l6.500-8 2.500 2-6.500 8z" fill="#3a3ab8" shape-rendering="auto"/><path d="M10.500 3.500l2.500-3 2.500 1.500-2.500 3.500z" fill="#e8e040" stroke="#777" stroke-width="0.500" shape-rendering="auto"/><path d="M1 13l3-1.500 1.500 1.500z" fill="#222"/><path d="M0 12.500h5" stroke="#3a3ab8"/><rect x="0" y="14" width="16" height="4" fill="#000"/></svg>
<svg style="left:447px;top:54px;" width="5" height="3" viewBox="0 0 5 3" shape-rendering="crispEdges"><path d="M0 0h5l-2.5 3z" fill="#000"/></svg>
<svg style="left:459px;top:46px;" width="16" height="18" viewBox="0 0 16 18" shape-rendering="crispEdges"><text x="8" y="13" text-anchor="middle" font-family="Liberation Serif" font-size="17.500" fill="#3a3ab8" shape-rendering="auto">A</text><rect x="0" y="14" width="16" height="4" fill="#d890d8"/></svg>
<svg style="left:481px;top:54px;" width="5" height="3" viewBox="0 0 5 3" shape-rendering="crispEdges"><path d="M0 0h5l-2.5 3z" fill="#000"/></svg>
<svg style="left:493px;top:49px;" width="16" height="16" viewBox="0 0 16 16" shape-rendering="crispEdges"><rect x="0" y="1" width="16" height="1" fill="#333"/><rect x="0" y="5" width="16" height="2" fill="#333"/><rect x="0" y="10" width="16" height="3" fill="#333"/></svg>
<svg style="left:516px;top:49px;" width="16" height="16" viewBox="0 0 16 16" shape-rendering="crispEdges"><path d="M0 2h16" stroke="#333" stroke-dasharray="1 1"/><path d="M0 6h16" stroke="#333" stroke-dasharray="2 1" stroke-width="1"/><path d="M0 10h16" stroke="#333" stroke-dasharray="4 2" stroke-width="2"/></svg>
<svg style="left:539px;top:48px;" width="16" height="16" viewBox="0 0 16 16" shape-rendering="crispEdges"><path d="M0 4h15M15 4l-3-2.5M15 4l-3 2.5M1 11h15M1 11l3-2.5M1 11l3 2.5" stroke="#333" stroke-width="1.3" fill="none"/></svg>
<svg style="left:563px;top:48px;" width="16" height="16" viewBox="0 0 16 16" shape-rendering="crispEdges"><rect x="3" y="3" width="11" height="11" fill="#777"/><rect x="0.5" y="0.5" width="11" height="11" fill="#40a0a0" stroke="#222"/></svg>
<svg style="left:584px;top:47px;" width="17" height="17" viewBox="0 0 17 17" shape-rendering="crispEdges"><path d="M1 7l5-5h10l-5 5z" fill="#e8e8e8" stroke="#666" stroke-width="0.6"/><path d="M11 7l5-5v9l-5 5z" fill="#ccc" stroke="#666" stroke-width="0.6"/><rect x="1" y="7" width="10" height="9" fill="#40a0a0"/></svg>
<svg style="left:608px;top:60px;" width="5" height="3" viewBox="0 0 5 3" shape-rendering="crispEdges"><path d="M0 0h5l-2.5 3z" fill="#000"/></svg>
<svg style="left:12px;top:75px;" width="14" height="16" viewBox="0 0 14 16" shape-rendering="crispEdges"><path d="M1.500 0.500h6l3 3v9h-9z" fill="#fff" stroke="#333"/><path d="M7.500 0.500v3h3" fill="none" stroke="#333"/></svg>
<svg style="left:34px;top:74px;" width="16" height="16" viewBox="0 0 16 16" shape-rendering="crispEdges"><path d="M1 5h5l1 1.5h5v8h-11z" fill="#f0f080" stroke="#555" stroke-width="0.8"/><path d="M1 14.5l3-6h12l-3.5 6z" fill="#a8a040" stroke="#555" stroke-width="0.8"/><path d="M8 3q3-3 6 0l1-1.5v4h-4l1.5-1.2q-2-1.6-3.5 0z" fill="#555"/></svg>
<svg style="left:58px;top:74px;" width="16" height="16" viewBox="0 0 16 16" shape-rendering="crispEdges"><rect x="0.5" y="0.5" width="14" height="14.5" fill="#a8a040" stroke="#555"/><rect x="3" y="1" width="9" height="6" fill="#ccc"/><rect x="3.5" y="9.5" width="8" height="5.5" fill="#333"/><rect x="8.5" y="10.5" width="2" height="3.5" fill="#ccc"/></svg>
<svg style="left:80px;top:74px;" width="16" height="16" viewBox="0 0 16 16" shape-rendering="crispEdges"><path d="M3 5l6-4 6 4v8h-12z" fill="#fff" stroke="#666" stroke-width="0.8"/><path d="M6 7.5h6M6 9.5h6" stroke="#3a3ac0"/><rect x="11.5" y="4" width="2" height="2" fill="#c02020"/><path d="M1 8q-1.5 0-1.5 2.5v3q0 2 2 2t2-2v-4" fill="none" stroke="#333" stroke-width="1.2"/></svg>
<svg style="left:104px;top:74px;" width="17" height="17" viewBox="0 0 17 17" shape-rendering="crispEdges"><path d="M2 0.500h9l3 3v11h-12z" fill="#f4f4f4" stroke="#666" stroke-width="0.8"/><rect x="1" y="3" width="3" height="3" fill="#c03030"/><rect x="5" y="2" width="3" height="3" fill="#3060c0"/><rect x="2" y="7" width="3" height="3" fill="#e8c020"/><rect x="6" y="6" width="2" height="2" fill="#30a040"/><circle cx="10" cy="9.500" r="3.2" fill="#a0e8f0" stroke="#666"/><path d="M12.500 12l3.500 3.500" stroke="#d02020" stroke-width="2"/></svg>
<div style="left:125px;top:72px;width:1px;height:20px;background:#b48a96;"></div>
<svg style="left:132px;top:74px;" width="16" height="16" viewBox="0 0 16 16" shape-rendering="crispEdges"><path d="M4 1h8l1 4h-10z" fill="#fff" stroke="#555" stroke-width="0.8"/><rect x="0.5" y="5" width="15" height="6" rx="1.5" fill="#d8d8d8" stroke="#444" stroke-width="0.9"/><rect x="2.500" y="10" width="11" height="4.500" fill="#bbb" stroke="#444" stroke-width="0.9"/><rect x="5" y="8" width="4" height="1.2" fill="#e8e040"/></svg>
<svg style="left:154px;top:74px;" width="17" height="17" viewBox="0 0 17 17" shape-rendering="crispEdges"><path d="M1.500 0.500h7l3.500 3.500v11.500h-10.500z" fill="#fff" stroke="#444"/><circle cx="10" cy="9.500" r="3.300" fill="#bfeaf0" stroke="#666" stroke-width="1.1"/><path d="M12.500 12l3.500 3.500" stroke="#555" stroke-width="2"/></svg>
<svg style="left:178px;top:73px;" width="16" height="17" viewBox="0 0 16 17" shape-rendering="crispEdges"><text x="0" y="6.500" font-family="Liberation Sans" font-size="6.500" font-weight="bold" fill="#555">ABC</text><path d="M1.500 11l3.500 4 9-10" fill="none" stroke="#2828b0" stroke-width="2"/></svg>
<div style="left:200px;top:72px;width:1px;height:20px;background:#b48a96;"></div>
<svg style="left:208px;top:74px;" width="14" height="16" viewBox="0 0 14 16" shape-rendering="crispEdges"><path d="M4 0l3.300 10M10 0l-3.300 10" stroke="#333" stroke-width="1.1"/><circle cx="4" cy="12.800" r="2.200" fill="none" stroke="#3a3ac0" stroke-width="1.2"/><circle cx="10" cy="12.800" r="2.200" fill="none" stroke="#3a3ac0" stroke-width="1.2"/></svg>
<svg style="left:230px;top:74px;" width="16" height="16" viewBox="0 0 16 16" shape-rendering="crispEdges"><path d="M0.500 0.500h6l2 2v7.500h-8z" fill="#fff" stroke="#555" stroke-width="0.9"/><path d="M2 4h4M2 6h4" stroke="#555" stroke-width="0.8"/><path d="M7.500 5.500h5.500l2 2v8h-7.500z" fill="#fff" stroke="#3a3ac0" stroke-width="0.9"/><path d="M9 9h4M9 11h4M9 13h4" stroke="#3a3ac0" stroke-width="0.8"/></svg>
<svg style="left:252px;top:74px;" width="17" height="17" viewBox="0 0 17 17" shape-rendering="crispEdges"><rect x="0.500" y="2.500" width="13" height="12" fill="#a8a040" stroke="#555"/><rect x="4" y="0.500" width="6" height="4" fill="#ccc" stroke="#444" stroke-width="0.8"/><path d="M7.500 7.500h7l2 2v6.500h-9z" fill="#fff" stroke="#3a3ac0" stroke-width="0.9"/><path d="M9 11h5M9 13h5" stroke="#3a3ac0" stroke-width="0.8"/></svg>
<svg style="left:275px;top:73px;" width="18" height="17" viewBox="0 0 18 17" shape-rendering="crispEdges"><path d="M10 5l5-5 2 2-5 5z" fill="#2a3aa0"/><path d="M4.500 7.500l3-3 5 5-3 3z" fill="#fff" stroke="#333" stroke-width="0.9"/><path d="M1 12l3.500-3.500 4 4-3.500 3.500z" fill="#e8e060" stroke="#887" stroke-width="0.5"/></svg>
<div style="left:298px;top:72px;width:1px;height:20px;background:#b48a96;"></div>
<svg style="left:306px;top:76px;" width="15" height="13" viewBox="0 0 15 13" shape-rendering="crispEdges"><path d="M12 10.500q1.500-2 1-4t-3-3h-5" fill="none" stroke="#3a3ab8" stroke-width="1.200" shape-rendering="auto"/><path d="M1 1l0.500 6 5.500-2.500z" fill="#3a3ab8" shape-rendering="auto"/></svg>
<svg style="left:327.5px;top:81px;" width="5" height="3" viewBox="0 0 5 3" shape-rendering="crispEdges"><path d="M0 0h5l-2.5 3z" fill="#000"/></svg>
<svg style="left:340px;top:76px;" width="15" height="13" viewBox="0 0 15 13" shape-rendering="crispEdges"><path d="M3 10.500q-1.500-2-1-4t3-3h5" fill="none" stroke="#b07888" stroke-width="1.200" shape-rendering="auto"/><path d="M14 1l-0.500 6-5.500-2.500z" fill="#b07888" shape-rendering="auto"/></svg>
<svg style="left:361px;top:81px;" width="5" height="3" viewBox="0 0 5 3" shape-rendering="crispEdges"><path d="M0 0h5l-2.5 3z" fill="#b08a96"/></svg>
<div style="left:372px;top:72px;width:1px;height:20px;background:#b48a96;"></div>
<svg style="left:379px;top:74px;" width="16" height="16" viewBox="0 0 16 16" shape-rendering="crispEdges"><path d="M3.500 0.500l-2 2.500v12h13.500l1-2" fill="#fff" stroke="#333" stroke-width="1"/><rect x="3" y="6" width="3" height="8" fill="#3a4ae0" stroke="#333" stroke-width="0.500"/><rect x="7" y="2" width="3" height="12" fill="#f0e020" stroke="#333" stroke-width="0.500"/><rect x="11" y="4" width="3" height="10" fill="#f04040" stroke="#333" stroke-width="0.500"/></svg>
<svg style="left:402px;top:75px;" width="16" height="14" viewBox="0 0 16 14" shape-rendering="crispEdges"><rect x="0.500" y="0.500" width="15" height="13" fill="#fff" stroke="#333"/><rect x="0.500" y="0.500" width="15" height="3" fill="#2a3aa0"/><path d="M0.500 7h15M0.500 10.500h15M5.500 3.500v10M10.500 3.500v10" stroke="#555" stroke-width="0.800"/></svg>
<svg style="left:425px;top:74px;" width="17" height="16" viewBox="0 0 17 16" shape-rendering="crispEdges"><rect x="0.500" y="1.500" width="14" height="13" fill="none" stroke="#444"/><path d="M0.500 8.500h14M7.500 1.500v13" stroke="#444"/><path d="M8.500 11l4.500-7 2 1.500-4.500 7-2.500 1z" fill="#f0e020" stroke="#444" stroke-width="0.700" shape-rendering="auto"/><path d="M13 4l1-1.500 2 1.500-1 1.500z" fill="#444"/></svg>
<svg style="left:448px;top:74px;" width="17" height="16" viewBox="0 0 17 16" shape-rendering="crispEdges"><circle cx="8" cy="6.500" r="6" fill="#c88ea0" stroke="#b07888" stroke-width="0.800"/><path d="M3 4q3 2 4-1M9 9q3-1 4 2M5 9l2 3" stroke="#dbb0bc" stroke-width="1.500" fill="none"/><rect x="5" y="11" width="5.500" height="4" rx="2" fill="none" stroke="#b07888" stroke-width="1.300"/><rect x="9" y="11" width="5.500" height="4" rx="2" fill="none" stroke="#b07888" stroke-width="1.300"/></svg>
<div style="left:470px;top:72px;width:1px;height:20px;background:#b48a96;"></div>
<svg style="left:476px;top:74px;" width="17" height="16" viewBox="0 0 17 16" shape-rendering="crispEdges"><path d="M2.500 1v13M2.500 14l-2-3M2.500 14l2-3" stroke="#b07888" stroke-width="1.200" fill="none"/><path d="M6 1.500h11M8 4.500h9M8 7.500h9M6 10.500h11M8 13.500h9" stroke="#b07888" stroke-width="1.100"/></svg>
<svg style="left:499px;top:73px;" width="17" height="17" viewBox="0 0 17 17" shape-rendering="crispEdges"><text x="0" y="7" font-family="Liberation Sans" font-size="8" fill="#333" shape-rendering="auto">A</text><path d="M2 13.500l9-9" stroke="#fff" stroke-width="2" shape-rendering="auto"/><text x="5" y="15" font-family="Liberation Serif" font-size="15" font-weight="bold" font-style="italic" fill="#3a3ab8" shape-rendering="auto">A</text><rect x="4" y="16" width="12" height="1" fill="#3a3ab8"/></svg>
<svg style="left:523px;top:75px;" width="14" height="14" viewBox="0 0 14 14" shape-rendering="crispEdges"><rect x="0" y="0" width="1" height="1" fill="#555"/><rect x="0" y="2" width="1" height="1" fill="#555"/><rect x="0" y="4" width="1" height="1" fill="#555"/><rect x="0" y="6" width="1" height="1" fill="#555"/><rect x="0" y="8" width="1" height="1" fill="#555"/><rect x="0" y="10" width="1" height="1" fill="#555"/><rect x="0" y="12" width="1" height="1" fill="#555"/><rect x="2" y="0" width="1" height="1" fill="#555"/><rect x="2" y="2" width="1" height="1" fill="#555"/><rect x="2" y="4" width="1" height="1" fill="#555"/><rect x="2" y="6" width="1" height="1" fill="#555"/><rect x="2" y="8" width="1" height="1" fill="#555"/><rect x="2" y="10" width="1" height="1" fill="#555"/><rect x="2" y="12" width="1" height="1" fill="#555"/><rect x="4" y="0" width="1" height="1" fill="#555"/><rect x="4" y="2" width="1" height="1" fill="#555"/><rect x="4" y="4" width="1" height="1" fill="#555"/><rect x="4" y="6" width="1" height="1" fill="#555"/><rect x="4" y="8" width="1" height="1" fill="#555"/><rect x="4" y="10" width="1" height="1" fill="#555"/><rect x="4" y="12" width="1" height="1" fill="#555"/><rect x="6" y="0" width="1" height="1" fill="#555"/><rect x="6" y="2" width="1" height="1" fill="#555"/><rect x="6" y="4" width="1" height="1" fill="#555"/><rect x="6" y="6" width="1" height="1" fill="#555"/><rect x="6" y="8" width="1" height="1" fill="#555"/><rect x="6" y="10" width="1" height="1" fill="#555"/><rect x="6" y="12" width="1" height="1" fill="#555"/><rect x="8" y="0" width="1" height="1" fill="#555"/><rect x="8" y="2" width="1" height="1" fill="#555"/><rect x="8" y="4" width="1" height="1" fill="#555"/><rect x="8" y="6" width="1" height="1" fill="#555"/><rect x="8" y="8" width="1" height="1" fill="#555"/><rect x="8" y="10" width="1" height="1" fill="#555"/><rect x="8" y="12" width="1" height="1" fill="#555"/><rect x="10" y="0" width="1" height="1" fill="#555"/><rect x="10" y="2" width="1" height="1" fill="#555"/><rect x="10" y="4" width="1" height="1" fill="#555"/><rect x="10" y="6" width="1" height="1" fill="#555"/><rect x="10" y="8" width="1" height="1" fill="#555"/><rect x="10" y="10" width="1" height="1" fill="#555"/><rect x="10" y="12" width="1" height="1" fill="#555"/><rect x="12" y="0" width="1" height="1" fill="#555"/><rect x="12" y="2" width="1" height="1" fill="#555"/><rect x="12" y="4" width="1" height="1" fill="#555"/><rect x="12" y="6" width="1" height="1" fill="#555"/><rect x="12" y="8" width="1" height="1" fill="#555"/><rect x="12" y="10" width="1" height="1" fill="#555"/><rect x="12" y="12" width="1" height="1" fill="#555"/><path d="M0 6.500h14M6.500 0v14" stroke="#777" stroke-width="0.600"/></svg>
<svg style="left:547px;top:75px;" width="14" height="14" viewBox="0 0 14 14" shape-rendering="crispEdges"><rect x="0" y="0" width="14" height="4.700" fill="#d04040"/><rect x="0" y="4.700" width="14" height="4.600" fill="#40a050"/><rect x="0" y="9.300" width="14" height="4.700" fill="#3a4ad0"/></svg>
<div style="left:567px;top:73px;width:76px;height:18px;background:#fff;"></div>
<div style="left:631px;top:74px;width:11px;height:16px;background:#cfafb7;"></div>
<svg style="left:634px;top:81px;" width="5" height="3" viewBox="0 0 5 3" shape-rendering="crispEdges"><path d="M0 0h5l-2.5 3z" fill="#000"/></svg>
<span class="t" style="font-family:'Liberation Sans', sans-serif;font-size:11.5px;color:#000;line-height:11.5px;top:77.07px;-webkit-text-stroke:0.180px #000;transform:scaleX(0.9552);transform-origin:0 0;left:569.50px;">33%</span>
<div style="left:646px;top:72px;width:1px;height:20px;background:#b48a96;"></div>
<svg style="left:654px;top:74px;" width="15" height="16" viewBox="0 0 15 16" shape-rendering="crispEdges"><path d="M0.500 0.500h13v11h-6l-3 3.500v-3.500h-4z" fill="#f8f4a0" stroke="#555"/><text x="4" y="10" font-family="Liberation Sans" font-size="10" font-weight="bold" fill="#2a2ab0">?</text></svg>
<svg style="left:676px;top:86px;" width="5" height="3" viewBox="0 0 5 3" shape-rendering="crispEdges"><path d="M0 0h5l-2.5 3z" fill="#000"/></svg>
<div style="left:9px;top:99px;width:117px;height:18px;background:#fff;"></div>
<div style="left:115px;top:100px;width:10px;height:16px;background:#cfafb7;"></div>
<svg style="left:118px;top:107px;" width="5" height="3" viewBox="0 0 5 3" shape-rendering="crispEdges"><path d="M0 0h5l-2.5 3z" fill="#000"/></svg>
<span class="t" style="font-family:'Liberation Sans', sans-serif;font-size:11.5px;color:#000;line-height:11.5px;top:101.57px;-webkit-text-stroke:0.180px #000;transform:scaleX(0.9042);transform-origin:0 0;left:12.00px;">Tahoma</span>
<div style="left:129px;top:99px;width:38px;height:18px;background:#fff;"></div>
<div style="left:155px;top:100px;width:11px;height:16px;background:#cfafb7;"></div>
<svg style="left:158px;top:107px;" width="5" height="3" viewBox="0 0 5 3" shape-rendering="crispEdges"><path d="M0 0h5l-2.5 3z" fill="#000"/></svg>
<span class="t" style="font-family:'Liberation Sans', sans-serif;font-size:11.5px;color:#000;line-height:11.5px;top:101.57px;-webkit-text-stroke:0.180px #000;transform:scaleX(0.9768);transform-origin:0 0;left:132.00px;">18</span>
<div style="left:170px;top:98px;width:1px;height:20px;background:#b48a96;"></div>
<span class="t" style="font-family:'Liberation Serif', serif;font-size:13.5px;font-weight:bold;color:#333;line-height:13.5px;top:102.09px;transform:scaleX(1.0537);transform-origin:0 0;left:180.00px;">B</span>
<span class="t" style="font-family:'Liberation Serif', serif;font-size:13.5px;font-weight:bold;font-style:italic;color:#333;line-height:13.5px;top:102.09px;left:203.00px;transform:scaleX(1.5);transform-origin:0 0;">I</span>
<span class="t" style="font-family:'Liberation Serif', serif;font-size:13.5px;font-weight:bold;color:#333;line-height:13.5px;top:102.09px;transform:scaleX(0.9744);transform-origin:0 0;left:225.50px;"><u>U</u></span>
<span class="t" style="font-family:'Liberation Sans', sans-serif;font-size:13.5px;font-weight:bold;color:#8a7a80;line-height:13.5px;top:101.37px;-webkit-text-stroke:0.180px #8a7a80;transform:scaleX(0.9983);transform-origin:0 0;left:250.00px;text-shadow:1px 1px 0 #fff;">S</span>
<div style="left:268px;top:98px;width:1px;height:20px;background:#b48a96;"></div>
<div style="left:272px;top:97.5px;width:22.5px;height:21px;background:#e4cdd3;box-shadow:inset 0 0 0 1px #a0687a;"></div>
<svg style="left:275px;top:102px;" width="15" height="12" viewBox="0 0 15 12" shape-rendering="crispEdges"><rect x="0" y="0" width="15" height="1" fill="#000"/><rect x="0" y="2" width="10" height="1" fill="#000"/><rect x="0" y="4" width="15" height="1" fill="#000"/><rect x="0" y="6" width="10" height="1" fill="#000"/><rect x="0" y="8" width="15" height="1" fill="#000"/><rect x="0" y="10" width="10" height="1" fill="#000"/></svg>
<svg style="left:298px;top:102px;" width="15" height="12" viewBox="0 0 15 12" shape-rendering="crispEdges"><rect x="0.0" y="0" width="15" height="1" fill="#222"/><rect x="3.0" y="2" width="9" height="1" fill="#222"/><rect x="0.0" y="4" width="15" height="1" fill="#222"/><rect x="3.0" y="6" width="9" height="1" fill="#222"/><rect x="0.0" y="8" width="15" height="1" fill="#222"/><rect x="3.0" y="10" width="9" height="1" fill="#222"/></svg>
<svg style="left:321px;top:102px;" width="15" height="12" viewBox="0 0 15 12" shape-rendering="crispEdges"><rect x="0" y="0" width="15" height="1" fill="#222"/><rect x="5" y="2" width="10" height="1" fill="#222"/><rect x="0" y="4" width="15" height="1" fill="#222"/><rect x="5" y="6" width="10" height="1" fill="#222"/><rect x="0" y="8" width="15" height="1" fill="#222"/><rect x="5" y="10" width="10" height="1" fill="#222"/></svg>
<svg style="left:344px;top:103px;" width="15" height="10" viewBox="0 0 15 10" shape-rendering="crispEdges"><rect x="0" y="0" width="15" height="1" fill="#b07888"/><rect x="0" y="2" width="15" height="1" fill="#b07888"/><rect x="0" y="4" width="15" height="1" fill="#b07888"/><rect x="0" y="6" width="15" height="1" fill="#b07888"/><rect x="0" y="8" width="15" height="1" fill="#b07888"/></svg>
<svg style="left:344px;top:99px;" width="16" height="6" viewBox="0 0 16 6" shape-rendering="crispEdges"><path d="M1 0v5M14 0v5M1 2.500h13" stroke="#b07888" stroke-width="1.200" fill="none"/></svg>
<svg style="left:367px;top:100px;" width="16" height="16" viewBox="0 0 16 16" shape-rendering="crispEdges"><path d="M2 0v15M6 0v15M10 4v11M14 0v15" stroke="#b07888" stroke-width="1"/><path d="M8 5l2-4 2 4z" fill="#b07888"/></svg>
<div style="left:389px;top:98px;width:1px;height:20px;background:#b48a96;"></div>
<svg style="left:396px;top:101px;" width="16" height="15" viewBox="0 0 16 15" shape-rendering="crispEdges"><path d="M5 2h10M5 7h10M5 12h10" stroke="#b07888" stroke-width="1.200"/><text x="0" y="4" font-size="5" font-family="Liberation Sans" fill="#b07888">1</text><text x="0" y="9" font-size="5" font-family="Liberation Sans" fill="#b07888">2</text><text x="0" y="14" font-size="5" font-family="Liberation Sans" fill="#b07888">3</text></svg>
<svg style="left:419px;top:101px;" width="16" height="15" viewBox="0 0 16 15" shape-rendering="crispEdges"><path d="M5 2h10M5 7h10M5 12h10" stroke="#b07888" stroke-width="1.200"/><rect x="0" y="0.500" width="3" height="3" fill="#b07888"/><rect x="0" y="5.500" width="3" height="3" fill="#b07888"/><rect x="0" y="10.500" width="3" height="3" fill="#b07888"/></svg>
<div style="left:441px;top:98px;width:1px;height:20px;background:#b48a96;"></div>
<span class="t" style="font-family:'Liberation Serif', serif;font-size:18px;font-weight:bold;color:#333;line-height:18px;top:100.33px;transform:scaleX(1.0000);transform-origin:0 0;left:447.00px;">A</span>
<svg style="left:459px;top:99px;" width="6" height="4" viewBox="0 0 6 4" shape-rendering="crispEdges"><path d="M0 4h6l-3-4z" fill="#333"/></svg>
<span class="t" style="font-family:'Liberation Serif', serif;font-size:12px;font-weight:bold;color:#333;line-height:12px;top:105.35px;transform:scaleX(1.0378);transform-origin:0 0;left:474.50px;">A</span>
<svg style="left:482px;top:99px;" width="6" height="4" viewBox="0 0 6 4" shape-rendering="crispEdges"><path d="M0 0h6l-3 4z" fill="#333"/></svg>
<div style="left:494px;top:98px;width:1px;height:20px;background:#b48a96;"></div>
<svg style="left:500px;top:101px;" width="16" height="15" viewBox="0 0 16 15" shape-rendering="crispEdges"><path d="M6 1h10M6 4.500h10M6 8h10M6 11.500h10M0 13.500h16" stroke="#d08aa0" stroke-width="1.100"/><path d="M0 6.500l4-3v6z" fill="#d08aa0"/></svg>
<svg style="left:523px;top:101px;" width="16" height="15" viewBox="0 0 16 15" shape-rendering="crispEdges"><path d="M6 1h10M6 4.500h10M6 8h10M6 11.500h10M0 13.500h16" stroke="#d08aa0" stroke-width="1.100"/><path d="M4 6.500l-4-3v6z" fill="#d08aa0"/></svg>
<div style="left:545px;top:98px;width:1px;height:20px;background:#b48a96;"></div>
<svg style="left:552px;top:99px;" width="16" height="18" viewBox="0 0 16 18" shape-rendering="crispEdges"><text x="8" y="13" text-anchor="middle" font-family="Liberation Serif" font-size="17.500" fill="#3a3ab8" shape-rendering="auto">A</text><rect x="0" y="14" width="16" height="4" fill="#d890d8"/></svg>
<svg style="left:574px;top:107px;" width="5" height="3" viewBox="0 0 5 3" shape-rendering="crispEdges"><path d="M0 0h5l-2.5 3z" fill="#000"/></svg>
<div style="left:585px;top:98px;width:1px;height:20px;background:#b48a96;"></div>
<svg style="left:592px;top:100px;" width="17" height="16" viewBox="0 0 17 16" shape-rendering="crispEdges"><rect x="0.500" y="3.500" width="13" height="11" rx="1.500" fill="#fff" stroke="#333"/><path d="M3 11h3" stroke="#3a3ac0" stroke-width="1.500"/><path d="M7 12l6-9 2 1.500-6 9-2.500 1z" fill="#3a4ac0" stroke="#222" stroke-width="0.500"/><path d="M13 3l1.500-2.500 1.500 1z" fill="#a08020"/></svg>
<span class="t" style="font-family:'Liberation Sans', sans-serif;font-size:11.5px;color:#000;line-height:11.5px;top:103.07px;-webkit-text-stroke:0.180px #000;transform:scaleX(0.8656);transform-origin:0 0;left:611.00px;">De<u>s</u>ign</span>
<svg style="left:651px;top:100px;" width="16" height="16" viewBox="0 0 16 16" shape-rendering="crispEdges"><rect x="3.500" y="5.500" width="11" height="9" fill="#fff" stroke="#333"/><path d="M6 8h6" stroke="#888"/><path d="M3 0v7M0 3.500h7M0.500 1l5 5M5.500 1l-5 5" stroke="#fff" stroke-width="1"/><path d="M3 1v5M0.500 3.500h5" stroke="#aaa" stroke-width="0.600"/></svg>
<span class="t" style="font-family:'Liberation Sans', sans-serif;font-size:11.5px;color:#000;line-height:11.5px;top:103.07px;-webkit-text-stroke:0.180px #000;transform:scaleX(0.8690);transform-origin:0 0;left:669.00px;"><u>N</u>ew Slide</span>
<svg style="left:722px;top:112px;" width="5" height="3" viewBox="0 0 5 3" shape-rendering="crispEdges"><path d="M0 0h5l-2.5 3z" fill="#000"/></svg>
<div style="left:0px;top:120px;width:1024px;height:4px;background:#cfafb7;"></div>
<div style="left:0px;top:122px;width:128px;height:21px;background:#cfafb7;"></div>
<div style="left:0px;top:142px;width:128px;height:592px;background:#fff;"></div>
<svg style="left:0px;top:123px;" width="128" height="20" viewBox="0 0 128 20" shape-rendering="auto"><path d="M0.500 18.500L7 1.500h38l4 10" fill="#cfafb7" stroke="#9f6070"/><path d="M0 19.500h50" stroke="#9f6070"/><path d="M49.500 19.500L56 1.500h42l7 18z" fill="#fff" stroke="#9f6070"/><path d="M50.500 19.500h54" stroke="#fff" stroke-width="1.500"/><path d="M105 19.500h23" stroke="#9f6070"/></svg>
<span class="t" style="font-family:'Liberation Sans', sans-serif;font-size:11.5px;color:#000;line-height:11.5px;top:128.07px;-webkit-text-stroke:0.180px #000;transform:scaleX(0.9331);transform-origin:0 0;left:10.50px;">Outline</span>
<span class="t" style="font-family:'Liberation Sans', sans-serif;font-size:11.5px;font-weight:bold;color:#000;line-height:11.5px;top:128.07px;-webkit-text-stroke:0.180px #000;transform:scaleX(0.9442);transform-origin:0 0;left:59.00px;">Slides</span>
<svg style="left:112px;top:127px;" width="9" height="8" viewBox="0 0 9 8" shape-rendering="auto"><path d="M0.500 0.500l7 7M7.500 0.500l-7 7" stroke="#000" stroke-width="1.500" fill="none"/></svg>
<div style="left:24px;top:150px;width:81px;height:61px;background:#fff;box-sizing:border-box;border:1px solid #000;"></div>
<span class="t" style="font-family:'Liberation Sans', sans-serif;font-size:11.5px;font-weight:bold;color:#000;line-height:11.5px;top:158.07px;-webkit-text-stroke:0.180px #000;left:7.00px;">1</span>
<div style="left:28px;top:154px;width:5.25px;height:5.25px;background:#5a5ac8;"></div>
<div style="left:30.1px;top:158.2px;width:6.300000000000001px;height:5.25px;background:#78b850;"></div>
<div style="left:25.9px;top:157.15px;width:5.25px;height:4.2px;background:linear-gradient(135deg,#fff,#c890d8);"></div>
<div style="left:24px;top:224px;width:81px;height:61px;background:#fff;box-sizing:border-box;border:1px solid #000;"></div>
<span class="t" style="font-family:'Liberation Sans', sans-serif;font-size:11.5px;font-weight:bold;color:#000;line-height:11.5px;top:232.07px;-webkit-text-stroke:0.180px #000;left:7.00px;">2</span>
<div style="left:28px;top:228px;width:5.25px;height:5.25px;background:#5a5ac8;"></div>
<div style="left:30.1px;top:232.2px;width:6.300000000000001px;height:5.25px;background:#78b850;"></div>
<div style="left:25.9px;top:231.15px;width:5.25px;height:4.2px;background:linear-gradient(135deg,#fff,#c890d8);"></div>
<div style="left:24px;top:298px;width:81px;height:61px;background:#fff;box-sizing:border-box;border:1px solid #000;"></div>
<span class="t" style="font-family:'Liberation Sans', sans-serif;font-size:11.5px;font-weight:bold;color:#000;line-height:11.5px;top:306.07px;-webkit-text-stroke:0.180px #000;left:7.00px;">3</span>
<div style="left:28px;top:302px;width:5.25px;height:5.25px;background:#5a5ac8;"></div>
<div style="left:30.1px;top:306.2px;width:6.300000000000001px;height:5.25px;background:#78b850;"></div>
<div style="left:25.9px;top:305.15px;width:5.25px;height:4.2px;background:linear-gradient(135deg,#fff,#c890d8);"></div>
<div style="left:19px;top:368px;width:91px;height:70px;background:#fff;box-sizing:border-box;border:2px solid #9f6070;"></div>
<div style="left:24px;top:372px;width:81px;height:61px;background:#fff;box-sizing:border-box;border:1px solid #000;"></div>
<span class="t" style="font-family:'Liberation Sans', sans-serif;font-size:11.5px;font-weight:bold;color:#000;line-height:11.5px;top:380.07px;-webkit-text-stroke:0.180px #000;left:7.00px;">4</span>
<div style="left:28px;top:376px;width:5.25px;height:5.25px;background:#5a5ac8;"></div>
<div style="left:30.1px;top:380.2px;width:6.300000000000001px;height:5.25px;background:#78b850;"></div>
<div style="left:25.9px;top:379.15px;width:5.25px;height:4.2px;background:linear-gradient(135deg,#fff,#c890d8);"></div>
<div style="left:24px;top:446px;width:81px;height:61px;background:#fff;box-sizing:border-box;border:1px solid #000;"></div>
<span class="t" style="font-family:'Liberation Sans', sans-serif;font-size:11.5px;font-weight:bold;color:#000;line-height:11.5px;top:454.07px;-webkit-text-stroke:0.180px #000;left:7.00px;">5</span>
<div style="left:28px;top:450px;width:5.25px;height:5.25px;background:#5a5ac8;"></div>
<div style="left:30.1px;top:454.2px;width:6.300000000000001px;height:5.25px;background:#78b850;"></div>
<div style="left:25.9px;top:453.15px;width:5.25px;height:4.2px;background:linear-gradient(135deg,#fff,#c890d8);"></div>
<div style="left:24px;top:520px;width:81px;height:61px;background:#fff;box-sizing:border-box;border:1px solid #000;"></div>
<span class="t" style="font-family:'Liberation Sans', sans-serif;font-size:11.5px;font-weight:bold;color:#000;line-height:11.5px;top:528.07px;-webkit-text-stroke:0.180px #000;left:7.00px;">6</span>
<div style="left:28px;top:524px;width:5.25px;height:5.25px;background:#5a5ac8;"></div>
<div style="left:30.1px;top:528.2px;width:6.300000000000001px;height:5.25px;background:#78b850;"></div>
<div style="left:25.9px;top:527.15px;width:5.25px;height:4.2px;background:linear-gradient(135deg,#fff,#c890d8);"></div>
<div style="left:24px;top:594px;width:81px;height:61px;background:#fff;box-sizing:border-box;border:1px solid #000;"></div>
<span class="t" style="font-family:'Liberation Sans', sans-serif;font-size:11.5px;font-weight:bold;color:#000;line-height:11.5px;top:602.07px;-webkit-text-stroke:0.180px #000;left:7.00px;">7</span>
<div style="left:28px;top:598px;width:5.25px;height:5.25px;background:#5a5ac8;"></div>
<div style="left:30.1px;top:602.2px;width:6.300000000000001px;height:5.25px;background:#78b850;"></div>
<div style="left:25.9px;top:601.15px;width:5.25px;height:4.2px;background:linear-gradient(135deg,#fff,#c890d8);"></div>
<div style="left:24px;top:668px;width:81px;height:61px;background:#fff;box-sizing:border-box;border:1px solid #000;"></div>
<span class="t" style="font-family:'Liberation Sans', sans-serif;font-size:11.5px;font-weight:bold;color:#000;line-height:11.5px;top:676.07px;-webkit-text-stroke:0.180px #000;left:7.00px;">8</span>
<div style="left:28px;top:672px;width:5.25px;height:5.25px;background:#5a5ac8;"></div>
<div style="left:30.1px;top:676.2px;width:6.300000000000001px;height:5.25px;background:#78b850;"></div>
<div style="left:25.9px;top:675.15px;width:5.25px;height:4.2px;background:linear-gradient(135deg,#fff,#c890d8);"></div>
<span class="t" style="font-family:'Liberation Sans', sans-serif;font-size:5.4px;font-weight:bold;color:#000080;line-height:5.4px;top:156.03px;transform:scaleX(0.8732);transform-origin:0 0;left:34.50px;-webkit-text-stroke:0.200px #000080;">Informed search algorithms</span>
<span class="t" style="font-family:'Liberation Sans', sans-serif;font-size:5.4px;font-weight:bold;color:#000080;line-height:5.4px;top:230.03px;transform:scaleX(0.8834);transform-origin:0 0;left:34.50px;-webkit-text-stroke:0.200px #000080;">Material</span>
<span class="t" style="font-family:'Liberation Sans', sans-serif;font-size:5.4px;font-weight:bold;color:#000080;line-height:5.4px;top:304.03px;transform:scaleX(0.8612);transform-origin:0 0;left:34.50px;-webkit-text-stroke:0.200px #000080;">Outline</span>
<span class="t" style="font-family:'Liberation Sans', sans-serif;font-size:5.4px;font-weight:bold;color:#000080;line-height:5.4px;top:378.03px;transform:scaleX(0.8294);transform-origin:0 0;left:34.50px;-webkit-text-stroke:0.200px #000080;">Review: Tree search</span>
<span class="t" style="font-family:'Liberation Sans', sans-serif;font-size:5.4px;font-weight:bold;color:#000080;line-height:5.4px;top:452.03px;transform:scaleX(0.8226);transform-origin:0 0;left:34.50px;-webkit-text-stroke:0.200px #000080;">Best-first search</span>
<span class="t" style="font-family:'Liberation Sans', sans-serif;font-size:5.4px;font-weight:bold;color:#000080;line-height:5.4px;top:526.03px;transform:scaleX(0.8378);transform-origin:0 0;left:34.50px;-webkit-text-stroke:0.200px #000080;">Romania with step costs in km</span>
<span class="t" style="font-family:'Liberation Sans', sans-serif;font-size:5.4px;font-weight:bold;color:#000080;line-height:5.4px;top:600.03px;transform:scaleX(0.8383);transform-origin:0 0;left:34.50px;-webkit-text-stroke:0.200px #000080;">Greedy best-first search</span>
<span class="t" style="font-family:'Liberation Sans', sans-serif;font-size:5.4px;font-weight:bold;color:#000080;line-height:5.4px;top:674.03px;transform:scaleX(0.7521);transform-origin:0 0;left:34.50px;-webkit-text-stroke:0.200px #000080;">Greedy best-first search example</span>
<span class="t" style="font-family:'Liberation Sans', sans-serif;font-size:4.2px;font-weight:bold;color:#000;line-height:4.2px;top:180.44px;transform:scaleX(1.1144);transform-origin:0 0;left:56.00px;">finedb</span>
<span class="t" style="font-family:'Liberation Sans', sans-serif;font-size:4.2px;font-weight:bold;color:#000;line-height:4.2px;top:239.44px;transform:scaleX(1.0740);transform-origin:0 0;left:30.00px;">yisdefinedbypic</span>
<span class="t" style="font-family:'Liberation Sans', sans-serif;font-size:4.2px;font-weight:bold;color:#000;line-height:4.2px;top:244.44px;transform:scaleX(1.0373);transform-origin:0 0;left:30.00px;">kingtheorderofnodeexpans</span>
<span class="t" style="font-family:'Liberation Sans', sans-serif;font-size:4.2px;font-weight:bold;color:#000;line-height:4.2px;top:248.44px;transform:scaleX(1.1429);transform-origin:0 0;left:30.00px;">sea</span>
<span class="t" style="font-family:'Liberation Sans', sans-serif;font-size:4.2px;font-weight:bold;color:#000;line-height:4.2px;top:311.44px;transform:scaleX(1.0166);transform-origin:0 0;left:30.00px;">ingtheorde</span>
<span class="t" style="font-family:'Liberation Sans', sans-serif;font-size:4.2px;font-weight:bold;color:#000;line-height:4.2px;top:315.44px;transform:scaleX(1.1173);transform-origin:0 0;left:30.00px;">earchstrategyi</span>
<span class="t" style="font-family:'Liberation Sans', sans-serif;font-size:4.2px;font-weight:bold;color:#000;line-height:4.2px;top:319.44px;transform:scaleX(1.1195);transform-origin:0 0;left:30.00px;">yisde</span>
<span class="t" style="font-family:'Liberation Sans', sans-serif;font-size:4.2px;font-weight:bold;color:#000;line-height:4.2px;top:323.44px;transform:scaleX(1.1918);transform-origin:0 0;left:30.00px;">pick</span>
<span class="t" style="font-family:'Liberation Sans', sans-serif;font-size:4.2px;font-weight:bold;color:#000;line-height:4.2px;top:327.44px;transform:scaleX(0.9740);transform-origin:0 0;left:30.00px;">derofnodeexpans</span>
<span class="t" style="font-family:'Liberation Sans', sans-serif;font-size:4.2px;font-weight:bold;color:#000;line-height:4.2px;top:331.44px;transform:scaleX(1.1458);transform-origin:0 0;left:30.00px;">ategyisdefin</span>
<span class="t" style="font-family:'Liberation Sans', sans-serif;font-size:4.2px;font-weight:bold;color:#000;line-height:4.2px;top:335.44px;transform:scaleX(1.0600);transform-origin:0 0;left:30.00px;">edbypickingtheor</span>
<span class="t" style="font-family:'Liberation Sans', sans-serif;font-size:4.2px;font-weight:bold;color:#000;line-height:4.2px;top:339.44px;transform:scaleX(0.9951);transform-origin:0 0;left:30.00px;">heorderofn</span>
<span class="t" style="font-family:'Liberation Sans', sans-serif;font-size:4.2px;font-weight:bold;color:#000;line-height:4.2px;top:343.44px;transform:scaleX(1.0841);transform-origin:0 0;left:30.00px;">hstrategyisd</span>
<span class="t" style="font-family:'Liberation Sans', sans-serif;font-size:4.2px;font-weight:bold;color:#000;line-height:4.2px;top:386.44px;transform:scaleX(1.1002);transform-origin:0 0;left:29.00px;">trategyisdefinedbypickingthe</span>
<span class="t" style="font-family:'Liberation Sans', sans-serif;font-size:4.2px;font-weight:bold;color:#000;line-height:4.2px;top:390.44px;transform:scaleX(1.0454);transform-origin:0 0;left:29.00px;">inedbypi</span>
<span class="t" style="font-family:'Liberation Sans', sans-serif;font-size:4.2px;font-weight:bold;color:#000;line-height:4.2px;top:395.44px;transform:scaleX(1.0505);transform-origin:0 0;left:29.00px;">eorderofnodeexpansionbestfirs</span>
<span class="t" style="font-family:'Liberation Sans', sans-serif;font-size:4.2px;font-weight:bold;color:#e02020;line-height:4.2px;top:399.44px;transform:scaleX(1.0955);transform-origin:0 0;left:29.00px;">strategyisdefined</span>
<span class="t" style="font-family:'Liberation Sans', sans-serif;font-size:4.2px;font-weight:bold;color:#000;line-height:4.2px;top:458.44px;transform:scaleX(1.0500);transform-origin:0 0;left:29.00px;">bypickingt</span>
<span class="t" style="font-family:'Liberation Sans', sans-serif;font-size:4.2px;font-weight:bold;color:#e02020;line-height:4.2px;top:458.44px;transform:scaleX(1.0500);transform-origin:0 0;left:51.00px;">efinedbypi</span>
<span class="t" style="font-family:'Liberation Sans', sans-serif;font-size:4.2px;font-weight:bold;color:#000;line-height:4.2px;top:458.44px;transform:scaleX(1.1168);transform-origin:0 0;left:74.00px;">finedbypick</span>
<span class="t" style="font-family:'Liberation Sans', sans-serif;font-size:4.2px;font-weight:bold;color:#000;line-height:4.2px;top:463.44px;transform:scaleX(1.1137);transform-origin:0 0;left:33.00px;">ickingtheord</span>
<span class="t" style="font-family:'Liberation Sans', sans-serif;font-size:4.2px;font-weight:bold;color:#000;line-height:4.2px;top:466.44px;transform:scaleX(1.0013);transform-origin:0 0;left:33.00px;">orderofnodeexpansionb</span>
<span class="t" style="font-family:'Liberation Sans', sans-serif;font-size:4.2px;font-weight:bold;color:#000;line-height:4.2px;top:472.44px;transform:scaleX(1.1454);transform-origin:0 0;left:29.00px;">pickingthe</span>
<span class="t" style="font-family:'Liberation Sans', sans-serif;font-size:4.2px;font-weight:bold;color:#000;line-height:4.2px;top:475.44px;transform:scaleX(1.0586);transform-origin:0 0;left:29.00px;">eorderofnodeexpansionbestfirst</span>
<span class="t" style="font-family:'Liberation Sans', sans-serif;font-size:4.2px;font-weight:bold;color:#000;line-height:4.2px;top:478.44px;transform:scaleX(1.1265);transform-origin:0 0;left:29.00px;">rchstra</span>
<span class="t" style="font-family:'Liberation Sans', sans-serif;font-size:4.2px;font-weight:bold;color:#000;line-height:4.2px;top:485.44px;transform:scaleX(1.0875);transform-origin:0 0;left:29.00px;">ypickingt</span>
<span class="t" style="font-family:'Liberation Sans', sans-serif;font-size:4.2px;font-weight:bold;color:#000;line-height:4.2px;top:490.44px;transform:scaleX(1.0648);transform-origin:0 0;left:33.00px;">ckingtheorde</span>
<span class="t" style="font-family:'Liberation Sans', sans-serif;font-size:4.2px;font-weight:bold;color:#000;line-height:4.2px;top:493.44px;transform:scaleX(1.1195);transform-origin:0 0;left:33.00px;">rdero</span>
<svg style="left:28px;top:536px;" width="74" height="40" viewBox="0 0 74 40" shape-rendering="auto"><path d="M2 8l8-5 6 10 10 4 8-2 6 8 10 2 8-8-4-10 -8-6M10 3l-6 12 6 10 12 4 10-8M26 17l4 10 14 6 8-4M50 25l8 4" fill="none" stroke="#999" stroke-width="0.600"/><rect x="58" y="2.0" width="10" height="0.800" fill="#777"/><rect x="58" y="3.9" width="12" height="0.800" fill="#777"/><rect x="58" y="5.8" width="14" height="0.800" fill="#777"/><rect x="58" y="7.699999999999999" width="11" height="0.800" fill="#777"/><rect x="58" y="9.6" width="13" height="0.800" fill="#777"/><rect x="58" y="11.5" width="10" height="0.800" fill="#777"/><rect x="58" y="13.399999999999999" width="12" height="0.800" fill="#777"/><rect x="58" y="15.299999999999999" width="14" height="0.800" fill="#777"/><rect x="58" y="17.2" width="11" height="0.800" fill="#777"/><rect x="58" y="19.099999999999998" width="13" height="0.800" fill="#777"/><rect x="58" y="21.0" width="10" height="0.800" fill="#777"/><rect x="58" y="22.9" width="12" height="0.800" fill="#777"/><rect x="58" y="24.799999999999997" width="14" height="0.800" fill="#777"/><rect x="58" y="26.7" width="11" height="0.800" fill="#777"/><rect x="58" y="28.599999999999998" width="13" height="0.800" fill="#777"/><rect x="58" y="30.5" width="10" height="0.800" fill="#777"/><rect x="58" y="32.4" width="12" height="0.800" fill="#777"/><rect x="58" y="34.3" width="14" height="0.800" fill="#777"/><rect x="58" y="36.199999999999996" width="11" height="0.800" fill="#777"/></svg>
<span class="t" style="font-family:'Liberation Sans', sans-serif;font-size:4.2px;font-weight:bold;color:#000;line-height:4.2px;top:609.44px;transform:scaleX(1.0999);transform-origin:0 0;left:30.00px;">rchstrategyisdefinedbypickin</span>
<span class="t" style="font-family:'Liberation Sans', sans-serif;font-size:4.2px;font-weight:bold;color:#000;line-height:4.2px;top:613.94px;transform:scaleX(1.0442);transform-origin:0 0;left:30.00px;">definedbypickingtheorde</span>
<span class="t" style="font-family:'Liberation Sans', sans-serif;font-size:4.2px;font-weight:bold;color:#000;line-height:4.2px;top:619.44px;transform:scaleX(1.0624);transform-origin:0 0;left:30.00px;">heorderofnodeexpansionbestfir</span>
<span class="t" style="font-family:'Liberation Sans', sans-serif;font-size:4.2px;font-weight:bold;color:#000;line-height:4.2px;top:623.44px;transform:scaleX(1.0888);transform-origin:0 0;left:30.00px;">hstrateg</span>
<span class="t" style="font-family:'Liberation Sans', sans-serif;font-size:4.2px;font-weight:bold;color:#000;line-height:4.2px;top:628.44px;transform:scaleX(1.0384);transform-origin:0 0;left:30.00px;">nedbypickingtheorderofnodeex</span>
<span class="t" style="font-family:'Liberation Sans', sans-serif;font-size:4.2px;font-weight:bold;color:#000;line-height:4.2px;top:632.44px;transform:scaleX(1.2736);transform-origin:0 0;left:30.00px;">the</span>
<span class="t" style="font-family:'Liberation Sans', sans-serif;font-size:4.2px;font-weight:bold;color:#e02020;line-height:4.2px;top:632.44px;transform:scaleX(1.3008);transform-origin:0 0;left:38.00px;">rate</span>
<span class="t" style="font-family:'Liberation Sans', sans-serif;font-size:4.2px;font-weight:bold;color:#000;line-height:4.2px;top:632.44px;transform:scaleX(1.1528);transform-origin:0 0;left:49.00px;">hstrategyisdef</span>
<svg style="left:62px;top:684px;" width="8" height="4" viewBox="0 0 8 4" shape-rendering="auto"><path d="M0 0l4 3 4-3" stroke="#aaa" fill="none"/></svg>
<div style="left:113px;top:142px;width:15px;height:592px;background:repeating-conic-gradient(#cfafb7 0 25%,#ffffff 0 50%) 0 0/2px 2px;"></div>
<div style="left:113px;top:142px;width:15px;height:13px;background:#cfafb7;box-shadow:inset -1px -1px 0 #000,inset 1px 1px 0 #e7d8dc,inset -2px -2px 0 #9f6070,inset 2px 2px 0 #fff;"></div>
<svg style="left:117px;top:147px;" width="7" height="4" viewBox="0 0 7 4" shape-rendering="auto"><path d="M0 4h7l-3.500-4z" fill="#000"/></svg>
<div style="left:113px;top:155px;width:15px;height:75px;background:#cfafb7;box-shadow:inset -1px -1px 0 #000,inset 1px 1px 0 #e7d8dc,inset -2px -2px 0 #9f6070,inset 2px 2px 0 #fff;"></div>
<div style="left:113px;top:720px;width:15px;height:13px;background:#cfafb7;box-shadow:inset -1px -1px 0 #000,inset 1px 1px 0 #e7d8dc,inset -2px -2px 0 #9f6070,inset 2px 2px 0 #fff;"></div>
<svg style="left:117px;top:725px;" width="7" height="4" viewBox="0 0 7 4" shape-rendering="auto"><path d="M0 0h7l-3.500 4z" fill="#000"/></svg>
<div style="left:0px;top:733px;width:128px;height:15px;background:#cfafb7;"></div>
<div style="left:0px;top:733.5px;width:14px;height:14px;background:#e4cdd3;box-shadow:inset 0 0 0 1px #a0687a;"></div>
<svg style="left:3px;top:736px;" width="9" height="9" viewBox="0 0 9 9" shape-rendering="auto"><rect x="0.500" y="0.500" width="8" height="8" fill="#fff" stroke="#000"/><path d="M3.500 0.500v8M3.500 5.500h5" stroke="#000"/></svg>
<svg style="left:17px;top:736px;" width="9" height="9" viewBox="0 0 9 9" shape-rendering="auto"><path d="M0.500 0.500h8v8h-8zM4.500 0.500v8M0.500 4.500h8" fill="#fff" stroke="#000"/></svg>
<svg style="left:31px;top:736px;" width="9" height="9" viewBox="0 0 9 9" shape-rendering="auto"><rect x="0.500" y="0.500" width="8" height="5" fill="#fff" stroke="#000"/><path d="M4.500 5.500v3M2 8.500h5" stroke="#000"/></svg>
<div style="left:43px;top:734px;width:13px;height:13px;background:#cfafb7;box-shadow:inset -1px -1px 0 #000,inset 1px 1px 0 #e7d8dc,inset -2px -2px 0 #9f6070,inset 2px 2px 0 #fff;"></div>
<svg style="left:47px;top:737px;" width="4" height="7" viewBox="0 0 4 7" shape-rendering="auto"><path d="M4 0v7l-4-3.500z" fill="#b08a96"/></svg>
<div style="left:56px;top:734px;width:1px;height:13px;background:#000;"></div>
<div style="left:57px;top:734px;width:57px;height:13px;background:repeating-conic-gradient(#cfafb7 0 25%,#ffffff 0 50%) 0 0/2px 2px;"></div>
<div style="left:114px;top:734px;width:13px;height:13px;background:#cfafb7;box-shadow:inset -1px -1px 0 #000,inset 1px 1px 0 #e7d8dc,inset -2px -2px 0 #9f6070,inset 2px 2px 0 #fff;"></div>
<svg style="left:119px;top:737px;" width="4" height="7" viewBox="0 0 4 7" shape-rendering="auto"><path d="M0 0v7l4-3.500z" fill="#b08a96"/></svg>
<div style="left:127px;top:122px;width:6px;height:626px;background:#cfafb7;"></div>
<div style="left:132px;top:122px;width:1px;height:626px;background:#b48a96;"></div>
<div style="left:133px;top:122px;width:685px;height:27px;background:#d9bcc4;"></div>
<div style="left:133px;top:149px;width:28px;height:555px;background:#d9bcc4;"></div>
<div style="left:176px;top:126px;width:608.5px;height:13px;background:#fff;"></div>
<div style="left:138px;top:199px;width:13px;height:455px;background:#fff;"></div>
<svg style="left:176px;top:126px;" width="608" height="12" viewBox="0 0 608 12" shape-rendering="auto"><text x="0" y="10" text-anchor="middle" font-family="Liberation Sans" font-size="10.500" fill="#000">5</text><rect x="7.1" y="6" width="1" height="2" fill="#000"/><rect x="14.8" y="6" width="1" height="2" fill="#000"/><rect x="22.4" y="6" width="1" height="2" fill="#000"/><rect x="30.0" y="4" width="1" height="5" fill="#000"/><rect x="37.6" y="6" width="1" height="2" fill="#000"/><rect x="45.2" y="6" width="1" height="2" fill="#000"/><rect x="52.9" y="6" width="1" height="2" fill="#000"/><text x="61" y="10" text-anchor="middle" font-family="Liberation Sans" font-size="10.500" fill="#000">4</text><rect x="68.1" y="6" width="1" height="2" fill="#000"/><rect x="75.8" y="6" width="1" height="2" fill="#000"/><rect x="83.4" y="6" width="1" height="2" fill="#000"/><rect x="91.0" y="4" width="1" height="5" fill="#000"/><rect x="98.6" y="6" width="1" height="2" fill="#000"/><rect x="106.2" y="6" width="1" height="2" fill="#000"/><rect x="113.9" y="6" width="1" height="2" fill="#000"/><text x="122" y="10" text-anchor="middle" font-family="Liberation Sans" font-size="10.500" fill="#000">3</text><rect x="129.1" y="6" width="1" height="2" fill="#000"/><rect x="136.8" y="6" width="1" height="2" fill="#000"/><rect x="144.4" y="6" width="1" height="2" fill="#000"/><rect x="152.0" y="4" width="1" height="5" fill="#000"/><rect x="159.6" y="6" width="1" height="2" fill="#000"/><rect x="167.2" y="6" width="1" height="2" fill="#000"/><rect x="174.9" y="6" width="1" height="2" fill="#000"/><text x="183" y="10" text-anchor="middle" font-family="Liberation Sans" font-size="10.500" fill="#000">2</text><rect x="190.1" y="6" width="1" height="2" fill="#000"/><rect x="197.8" y="6" width="1" height="2" fill="#000"/><rect x="205.4" y="6" width="1" height="2" fill="#000"/><rect x="213.0" y="4" width="1" height="5" fill="#000"/><rect x="220.6" y="6" width="1" height="2" fill="#000"/><rect x="228.2" y="6" width="1" height="2" fill="#000"/><rect x="235.9" y="6" width="1" height="2" fill="#000"/><text x="244" y="10" text-anchor="middle" font-family="Liberation Sans" font-size="10.500" fill="#000">1</text><rect x="251.1" y="6" width="1" height="2" fill="#000"/><rect x="258.8" y="6" width="1" height="2" fill="#000"/><rect x="266.4" y="6" width="1" height="2" fill="#000"/><rect x="274.0" y="4" width="1" height="5" fill="#000"/><rect x="281.6" y="6" width="1" height="2" fill="#000"/><rect x="289.2" y="6" width="1" height="2" fill="#000"/><rect x="296.9" y="6" width="1" height="2" fill="#000"/><text x="305" y="10" text-anchor="middle" font-family="Liberation Sans" font-size="10.500" fill="#000">0</text><rect x="312.1" y="6" width="1" height="2" fill="#000"/><rect x="319.8" y="6" width="1" height="2" fill="#000"/><rect x="327.4" y="6" width="1" height="2" fill="#000"/><rect x="335.0" y="4" width="1" height="5" fill="#000"/><rect x="342.6" y="6" width="1" height="2" fill="#000"/><rect x="350.2" y="6" width="1" height="2" fill="#000"/><rect x="357.9" y="6" width="1" height="2" fill="#000"/><text x="366" y="10" text-anchor="middle" font-family="Liberation Sans" font-size="10.500" fill="#000">1</text><rect x="373.1" y="6" width="1" height="2" fill="#000"/><rect x="380.8" y="6" width="1" height="2" fill="#000"/><rect x="388.4" y="6" width="1" height="2" fill="#000"/><rect x="396.0" y="4" width="1" height="5" fill="#000"/><rect x="403.6" y="6" width="1" height="2" fill="#000"/><rect x="411.2" y="6" width="1" height="2" fill="#000"/><rect x="418.9" y="6" width="1" height="2" fill="#000"/><text x="427" y="10" text-anchor="middle" font-family="Liberation Sans" font-size="10.500" fill="#000">2</text><rect x="434.1" y="6" width="1" height="2" fill="#000"/><rect x="441.8" y="6" width="1" height="2" fill="#000"/><rect x="449.4" y="6" width="1" height="2" fill="#000"/><rect x="457.0" y="4" width="1" height="5" fill="#000"/><rect x="464.6" y="6" width="1" height="2" fill="#000"/><rect x="472.2" y="6" width="1" height="2" fill="#000"/><rect x="479.9" y="6" width="1" height="2" fill="#000"/><text x="488" y="10" text-anchor="middle" font-family="Liberation Sans" font-size="10.500" fill="#000">3</text><rect x="495.1" y="6" width="1" height="2" fill="#000"/><rect x="502.8" y="6" width="1" height="2" fill="#000"/><rect x="510.4" y="6" width="1" height="2" fill="#000"/><rect x="518.0" y="4" width="1" height="5" fill="#000"/><rect x="525.6" y="6" width="1" height="2" fill="#000"/><rect x="533.2" y="6" width="1" height="2" fill="#000"/><rect x="540.9" y="6" width="1" height="2" fill="#000"/><text x="549" y="10" text-anchor="middle" font-family="Liberation Sans" font-size="10.500" fill="#000">4</text><rect x="556.1" y="6" width="1" height="2" fill="#000"/><rect x="563.8" y="6" width="1" height="2" fill="#000"/><rect x="571.4" y="6" width="1" height="2" fill="#000"/><rect x="579.0" y="4" width="1" height="5" fill="#000"/><rect x="586.6" y="6" width="1" height="2" fill="#000"/><rect x="594.2" y="6" width="1" height="2" fill="#000"/><rect x="601.9" y="6" width="1" height="2" fill="#000"/></svg>
<svg style="left:138px;top:199.5px;" width="13" height="454" viewBox="0 0 13 454" shape-rendering="auto"><rect x="5" y="5.4" width="2" height="1" fill="#000"/><rect x="4" y="13.0" width="5" height="1" fill="#000"/><rect x="5" y="20.6" width="2" height="1" fill="#000"/><rect x="5" y="28.2" width="2" height="1" fill="#000"/><rect x="5" y="35.9" width="2" height="1" fill="#000"/><text transform="translate(10.500,44.0) rotate(-90)" text-anchor="middle" font-family="Liberation Sans" font-size="10.500" fill="#000">3</text><rect x="5" y="51.1" width="2" height="1" fill="#000"/><rect x="5" y="58.8" width="2" height="1" fill="#000"/><rect x="5" y="66.4" width="2" height="1" fill="#000"/><rect x="4" y="74.0" width="5" height="1" fill="#000"/><rect x="5" y="81.6" width="2" height="1" fill="#000"/><rect x="5" y="89.2" width="2" height="1" fill="#000"/><rect x="5" y="96.9" width="2" height="1" fill="#000"/><text transform="translate(10.500,105.0) rotate(-90)" text-anchor="middle" font-family="Liberation Sans" font-size="10.500" fill="#000">2</text><rect x="5" y="112.1" width="2" height="1" fill="#000"/><rect x="5" y="119.8" width="2" height="1" fill="#000"/><rect x="5" y="127.4" width="2" height="1" fill="#000"/><rect x="4" y="135.0" width="5" height="1" fill="#000"/><rect x="5" y="142.6" width="2" height="1" fill="#000"/><rect x="5" y="150.2" width="2" height="1" fill="#000"/><rect x="5" y="157.9" width="2" height="1" fill="#000"/><text transform="translate(10.500,166.0) rotate(-90)" text-anchor="middle" font-family="Liberation Sans" font-size="10.500" fill="#000">1</text><rect x="5" y="173.1" width="2" height="1" fill="#000"/><rect x="5" y="180.8" width="2" height="1" fill="#000"/><rect x="5" y="188.4" width="2" height="1" fill="#000"/><rect x="4" y="196.0" width="5" height="1" fill="#000"/><rect x="5" y="203.6" width="2" height="1" fill="#000"/><rect x="5" y="211.2" width="2" height="1" fill="#000"/><rect x="5" y="218.9" width="2" height="1" fill="#000"/><text transform="translate(10.500,227.0) rotate(-90)" text-anchor="middle" font-family="Liberation Sans" font-size="10.500" fill="#000">0</text><rect x="5" y="234.1" width="2" height="1" fill="#000"/><rect x="5" y="241.8" width="2" height="1" fill="#000"/><rect x="5" y="249.4" width="2" height="1" fill="#000"/><rect x="4" y="257.0" width="5" height="1" fill="#000"/><rect x="5" y="264.6" width="2" height="1" fill="#000"/><rect x="5" y="272.2" width="2" height="1" fill="#000"/><rect x="5" y="279.9" width="2" height="1" fill="#000"/><text transform="translate(10.500,288.0) rotate(-90)" text-anchor="middle" font-family="Liberation Sans" font-size="10.500" fill="#000">1</text><rect x="5" y="295.1" width="2" height="1" fill="#000"/><rect x="5" y="302.8" width="2" height="1" fill="#000"/><rect x="5" y="310.4" width="2" height="1" fill="#000"/><rect x="4" y="318.0" width="5" height="1" fill="#000"/><rect x="5" y="325.6" width="2" height="1" fill="#000"/><rect x="5" y="333.2" width="2" height="1" fill="#000"/><rect x="5" y="340.9" width="2" height="1" fill="#000"/><text transform="translate(10.500,349.0) rotate(-90)" text-anchor="middle" font-family="Liberation Sans" font-size="10.500" fill="#000">2</text><rect x="5" y="356.1" width="2" height="1" fill="#000"/><rect x="5" y="363.8" width="2" height="1" fill="#000"/><rect x="5" y="371.4" width="2" height="1" fill="#000"/><rect x="4" y="379.0" width="5" height="1" fill="#000"/><rect x="5" y="386.6" width="2" height="1" fill="#000"/><rect x="5" y="394.2" width="2" height="1" fill="#000"/><rect x="5" y="401.9" width="2" height="1" fill="#000"/><text transform="translate(10.500,410.0) rotate(-90)" text-anchor="middle" font-family="Liberation Sans" font-size="10.500" fill="#000">3</text><rect x="5" y="417.1" width="2" height="1" fill="#000"/><rect x="5" y="424.8" width="2" height="1" fill="#000"/><rect x="5" y="432.4" width="2" height="1" fill="#000"/><rect x="4" y="440.0" width="5" height="1" fill="#000"/><rect x="5" y="447.6" width="2" height="1" fill="#000"/></svg>
<div style="left:137px;top:457px;width:4px;height:1px;background:#000;"></div>
<div style="left:161px;top:149px;width:643px;height:555px;background:#9f6070;"></div>
<div style="left:180px;top:201px;width:612px;height:459px;background:#000;"></div>
<div style="left:176px;top:197px;width:612px;height:459px;background:#fff;box-sizing:border-box;border:1px solid #000;"></div>
<div style="left:204.5px;top:233px;width:46px;height:28px;background:linear-gradient(90deg,#4a4ab8 0%,#4a4ab8 45%,#ffffff 100%);"></div>
<div style="left:213px;top:261px;width:47px;height:31.5px;background:linear-gradient(90deg,#78b850 0%,#78b850 45%,#ffffff 100%);"></div>
<div style="left:185px;top:256px;width:37px;height:29px;background:linear-gradient(135deg,#ffffff 0%,#f0d8f0 40%,#c080d0 100%);"></div>
<div style="left:227px;top:226px;width:2px;height:69px;background:#222;"></div>
<div style="left:206px;top:279px;width:540px;height:2px;background:linear-gradient(90deg,#222 0%,#444 40%,#ccc 80%,#fff 100%);"></div>
<span class="t" style="font-family:'Liberation Sans', sans-serif;font-size:37px;color:#000066;line-height:37px;top:226.78px;transform:scaleX(0.9844);transform-origin:0 0;left:261.00px;-webkit-text-stroke:0.300px #000066;">Review: Tree search</span>
<div style="left:204px;top:319px;width:9px;height:9px;background:#78b850;"></div>
<span class="t" style="font-family:'Liberation Sans', sans-serif;font-size:28.5px;color:#000;line-height:28.5px;top:304.67px;transform:scaleX(1.0038);transform-origin:0 0;left:227.00px;-webkit-text-stroke:0.350px #000;">\input</span>
<span class="t" style="font-family:'Liberation Sans', sans-serif;font-size:28.5px;color:#000;line-height:28.5px;top:304.67px;transform:scaleX(1.3639);transform-origin:0 0;left:296.50px;-webkit-text-stroke:0.350px #000;">{</span>
<span class="t" style="font-family:'Liberation Sans', sans-serif;font-size:28.5px;color:#000;line-height:28.5px;top:304.67px;transform:scaleX(1.0821);transform-origin:0 0;left:311.00px;-webkit-text-stroke:0.350px #000;">\file</span>
<span class="t" style="font-family:'Liberation Sans', sans-serif;font-size:28.5px;color:#000;line-height:28.5px;top:304.67px;transform:scaleX(1.3115);transform-origin:0 0;left:359.00px;-webkit-text-stroke:0.350px #000;">{</span>
<span class="t" style="font-family:'Liberation Sans', sans-serif;font-size:28.5px;color:#000;line-height:28.5px;top:304.67px;transform:scaleX(0.9223);transform-origin:0 0;left:370.75px;-webkit-text-stroke:0.350px #000;">algorithms</span>
<span class="t" style="font-family:'Liberation Sans', sans-serif;font-size:28.5px;color:#000;line-height:28.5px;top:304.67px;transform:scaleX(1.2066);transform-origin:0 0;left:492.50px;-webkit-text-stroke:0.350px #000;">}</span>
<span class="t" style="font-family:'Liberation Sans', sans-serif;font-size:28.5px;color:#000;line-height:28.5px;top:304.67px;transform:scaleX(1.2066);transform-origin:0 0;left:508.50px;-webkit-text-stroke:0.350px #000;">{</span>
<span class="t" style="font-family:'Liberation Sans', sans-serif;font-size:28.5px;color:#000;line-height:28.5px;top:304.67px;transform:scaleX(0.9109);transform-origin:0 0;left:521.25px;-webkit-text-stroke:0.350px #000;">tree</span>
<span class="t" style="font-family:'Liberation Sans', sans-serif;font-size:28.5px;color:#000;line-height:28.5px;top:304.67px;transform:scaleX(0.8421);transform-origin:0 0;left:567.50px;-webkit-text-stroke:0.350px #000;">-</span>
<span class="t" style="font-family:'Liberation Sans', sans-serif;font-size:28.5px;color:#000;line-height:28.5px;top:304.67px;transform:scaleX(0.8709);transform-origin:0 0;left:578.00px;-webkit-text-stroke:0.350px #000;">search</span>
<span class="t" style="font-family:'Liberation Sans', sans-serif;font-size:28.5px;color:#000;line-height:28.5px;top:304.67px;transform:scaleX(0.8947);transform-origin:0 0;left:654.00px;-webkit-text-stroke:0.350px #000;">-</span>
<span class="t" style="font-family:'Liberation Sans', sans-serif;font-size:28.5px;color:#000;line-height:28.5px;top:304.67px;transform:scaleX(0.9539);transform-origin:0 0;left:665.00px;-webkit-text-stroke:0.350px #000;">short-</span>
<span class="t" style="font-family:'Liberation Sans', sans-serif;font-size:28.5px;color:#000;line-height:28.5px;top:338.17px;transform:scaleX(0.9427);transform-origin:0 0;left:226.60px;-webkit-text-stroke:0.350px #000;">algorithm</span>
<span class="t" style="font-family:'Liberation Sans', sans-serif;font-size:28.5px;color:#000;line-height:28.5px;top:338.17px;transform:scaleX(1.3639);transform-origin:0 0;left:338.50px;-webkit-text-stroke:0.350px #000;">}</span>
<span class="t" style="font-family:'Liberation Sans', sans-serif;font-size:28.5px;color:#000;line-height:28.5px;top:338.17px;transform:scaleX(1.3639);transform-origin:0 0;left:351.50px;-webkit-text-stroke:0.350px #000;">}</span>
<div style="left:204px;top:391px;width:9px;height:9px;background:#78b850;"></div>
<span class="t" style="font-family:'Liberation Sans', sans-serif;font-size:28.5px;color:#000;line-height:28.5px;top:376.77px;transform:scaleX(0.9524);transform-origin:0 0;left:226.00px;-webkit-text-stroke:0.350px #000;">A search strategy is defined by picking the</span>
<span class="t" style="font-family:'Liberation Sans', sans-serif;font-size:28.5px;color:#ff0000;line-height:28.5px;top:408.67px;transform:scaleX(0.9434);transform-origin:0 0;left:226.00px;-webkit-text-stroke:0.350px #ff0000;">order of node expansion</span>
<svg style="left:320px;top:329.5px;" width="198" height="3" viewBox="0 0 198 3" shape-rendering="auto"><polyline points="0,2 2,0 4,2 6,0 8,2 10,0 12,2 14,0 16,2 18,0 20,2 22,0 24,2 26,0 28,2 30,0 32,2 34,0 36,2 38,0 40,2 42,0 44,2 46,0 48,2 50,0 52,2 54,0 56,2 58,0 60,2 62,0 64,2 66,0 68,2 70,0 72,2 74,0 76,2 78,0 80,2 82,0 84,2 86,0 88,2 90,0 92,2 94,0 96,2 98,0 100,2 102,0 104,2 106,0 108,2 110,0 112,2 114,0 116,2 118,0 120,2 122,0 124,2 126,0 128,2 130,0 132,2 134,0 136,2 138,0 140,2 142,0 144,2 146,0 148,2 150,0 152,2 154,0 156,2 158,0 160,2 162,0 164,2 166,0 168,2 170,0 172,2 174,0 176,2 178,0 180,2 182,0 184,2 186,0 188,2 190,0 192,2 194,0 196,2 198,0" fill="none" stroke="#e03030" stroke-width="0.800"/></svg>
<svg style="left:521px;top:329.5px;" width="45" height="3" viewBox="0 0 45 3" shape-rendering="auto"><polyline points="0,2 2,0 4,2 6,0 8,2 10,0 12,2 14,0 16,2 18,0 20,2 22,0 24,2 26,0 28,2 30,0 32,2 34,0 36,2 38,0 40,2 42,0 44,2" fill="none" stroke="#e03030" stroke-width="0.800"/></svg>
<div style="left:804px;top:149px;width:14px;height:555px;background:repeating-conic-gradient(#cfafb7 0 25%,#ffffff 0 50%) 0 0/2px 2px;"></div>
<div style="left:804px;top:149px;width:14px;height:13px;background:#cfafb7;box-shadow:inset -1px -1px 0 #000,inset 1px 1px 0 #e7d8dc,inset -2px -2px 0 #9f6070,inset 2px 2px 0 #fff;"></div>
<svg style="left:808px;top:153px;" width="7" height="4" viewBox="0 0 7 4" shape-rendering="auto"><path d="M0 4h7l-3.500-4z" fill="#000"/></svg>
<div style="left:804px;top:204.5px;width:14px;height:12px;background:#cfafb7;box-shadow:inset -1px -1px 0 #000,inset 1px 1px 0 #e7d8dc,inset -2px -2px 0 #9f6070,inset 2px 2px 0 #fff;"></div>
<div style="left:804px;top:649px;width:14px;height:13px;background:#cfafb7;box-shadow:inset -1px -1px 0 #000,inset 1px 1px 0 #e7d8dc,inset -2px -2px 0 #9f6070,inset 2px 2px 0 #fff;"></div>
<svg style="left:808px;top:654px;" width="7" height="4" viewBox="0 0 7 4" shape-rendering="auto"><path d="M0 0h7l-3.500 4z" fill="#000"/></svg>
<div style="left:804px;top:662px;width:14px;height:42px;background:#cfafb7;"></div>
<svg style="left:808px;top:667px;" width="7" height="9" viewBox="0 0 7 9" shape-rendering="auto"><path d="M0 4h7l-3.500-4zM0 9h7l-3.500-4z" fill="#000"/></svg>
<svg style="left:808px;top:680px;" width="7" height="9" viewBox="0 0 7 9" shape-rendering="auto"><path d="M0 0h7l-3.500 4zM0 5h7l-3.500 4z" fill="#000"/></svg>
<div style="left:804px;top:690px;width:14px;height:1px;background:#000;"></div>
<div style="left:133px;top:704px;width:685px;height:6px;background:#cfafb7;"></div>
<div style="left:133px;top:704px;width:685px;height:1px;background:#e7d8dc;"></div>
<div style="left:133px;top:708px;width:685px;height:1px;background:#b48a96;"></div>
<div style="left:133px;top:710px;width:671px;height:37px;background:#fff;"></div>
<span class="t" style="font-family:'Liberation Sans', sans-serif;font-size:13px;color:#222;line-height:13px;top:715.30px;-webkit-text-stroke:0.180px #222;transform:scaleX(0.9773);transform-origin:0 0;left:135.00px;">Click to add notes</span>
<div style="left:804px;top:710px;width:14px;height:37px;background:repeating-conic-gradient(#cfafb7 0 25%,#ffffff 0 50%) 0 0/2px 2px;"></div>
<div style="left:804px;top:710px;width:14px;height:12px;background:#cfafb7;box-shadow:inset -1px -1px 0 #000,inset 1px 1px 0 #e7d8dc,inset -2px -2px 0 #9f6070,inset 2px 2px 0 #fff;"></div>
<svg style="left:808px;top:714px;" width="7" height="4" viewBox="0 0 7 4" shape-rendering="auto"><path d="M0 4h7l-3.500-4z" fill="#b08a96"/></svg>
<div style="left:804px;top:722px;width:14px;height:12px;background:#cfafb7;"></div>
<div style="left:804px;top:722px;width:14px;height:1px;background:#000;"></div>
<div style="left:804px;top:734px;width:14px;height:12px;background:#cfafb7;box-shadow:inset -1px -1px 0 #000,inset 1px 1px 0 #e7d8dc,inset -2px -2px 0 #9f6070,inset 2px 2px 0 #fff;"></div>
<svg style="left:808px;top:738px;" width="7" height="4" viewBox="0 0 7 4" shape-rendering="auto"><path d="M0 0h7l-3.500 4z" fill="#b08a96"/></svg>
<div style="left:818px;top:122px;width:3px;height:626px;background:#cfafb7;"></div>
<div style="left:0px;top:747px;width:1024px;height:21px;background:#cfafb7;"></div>
<div style="left:4px;top:750px;width:244px;height:16px;box-shadow:inset 1px 1px 0 #bf97a3,inset -1px -1px 0 #e7d8dc;"></div>
<div style="left:254.5px;top:750px;width:244.5px;height:16px;box-shadow:inset 1px 1px 0 #bf97a3,inset -1px -1px 0 #e7d8dc;"></div>
<div style="left:503px;top:750px;width:177px;height:16px;box-shadow:inset 1px 1px 0 #bf97a3,inset -1px -1px 0 #e7d8dc;"></div>
<div style="left:686px;top:750px;width:30.5px;height:16px;box-shadow:inset 1px 1px 0 #bf97a3,inset -1px -1px 0 #e7d8dc;"></div>
<span class="t" style="font-family:'Liberation Sans', sans-serif;font-size:11.5px;color:#000;line-height:11.5px;top:753.07px;-webkit-text-stroke:0.180px #000;transform:scaleX(0.9228);transform-origin:0 0;left:96.50px;">Slide 4 of 40</span>
<span class="t" style="font-family:'Liberation Sans', sans-serif;font-size:11.5px;color:#000;line-height:11.5px;top:753.07px;-webkit-text-stroke:0.180px #000;transform:scaleX(0.8814);transform-origin:0 0;left:359.00px;">Blends</span>
<span class="t" style="font-family:'Liberation Sans', sans-serif;font-size:11.5px;color:#000;line-height:11.5px;top:753.07px;-webkit-text-stroke:0.180px #000;transform:scaleX(0.9163);transform-origin:0 0;left:558.50px;">English (U.S.)</span>
<svg style="left:690px;top:750px;" width="22" height="14" viewBox="0 0 22 14" shape-rendering="auto"><rect x="0.500" y="1.500" width="7" height="10" fill="#fff" stroke="#333"/><rect x="6.500" y="2.500" width="7" height="10" fill="#fff" stroke="#333"/><path d="M2 4h4M2 6h4M8 5h4M8 7h4" stroke="#555" stroke-width="0.700"/><path d="M12 3l8 10M20 3l-8 10" stroke="#b02020" stroke-width="1.800"/></svg>
<div style="left:821px;top:124px;width:200.5px;height:622px;background:#f7eff1;"></div>
<div style="left:821px;top:124px;width:200.5px;height:15px;background:#cfafb7;box-shadow:inset 1px 1px 0 #fff;"></div>
<svg style="left:824px;top:126px;" width="11" height="11" viewBox="0 0 11 11" shape-rendering="auto"><path d="M0.500 5.500l5-4.500v2.500h5v4h-5v2.500z" fill="#8a6a74" stroke="#222" stroke-width="0.900"/></svg>
<svg style="left:839px;top:126px;" width="11" height="11" viewBox="0 0 11 11" shape-rendering="auto"><path d="M10.500 5.500l-5-4.500v2.500h-5v4h5v2.500z" fill="#b0788a" stroke="#b0788a" stroke-width="0.600"/></svg>
<span class="t" style="font-family:'Liberation Sans', sans-serif;font-size:11.5px;color:#000;line-height:11.5px;top:127.07px;-webkit-text-stroke:0.180px #000;transform:scaleX(0.8827);transform-origin:0 0;left:854.50px;">Slide Design</span>
<svg style="left:993.5px;top:129px;" width="7" height="4" viewBox="0 0 7 4" shape-rendering="auto"><path d="M0 0h7l-3.500 4z" fill="#000"/></svg>
<svg style="left:1010px;top:128px;" width="9" height="8" viewBox="0 0 9 8" shape-rendering="auto"><path d="M0.500 0.500l7 7M7.500 0.500l-7 7" stroke="#000" stroke-width="1.500" fill="none"/></svg>
<svg style="left:827px;top:146px;" width="16" height="16" viewBox="0 0 16 16" shape-rendering="auto"><rect x="2.500" y="3.500" width="12" height="10" rx="1.500" fill="#fff" stroke="#222"/><rect x="0.500" y="0.500" width="12" height="10" rx="1.500" fill="#fff" stroke="#222"/><rect x="2" y="2" width="3" height="7" fill="#3a3ad0"/><path d="M6 3h5" stroke="#d03030" stroke-width="1.400"/><path d="M3 12h9" stroke="#30a0a0" stroke-width="1.200"/></svg>
<span class="t" style="font-family:'Liberation Sans', sans-serif;font-size:11.5px;color:#000;line-height:11.5px;top:149.07px;-webkit-text-stroke:0.180px #000;transform:scaleX(0.9101);transform-origin:0 0;left:848.00px;">Design Templates</span>
<svg style="left:827px;top:162px;" width="16" height="16" viewBox="0 0 16 16" shape-rendering="auto"><rect x="0.500" y="0.500" width="13" height="10" rx="1.500" fill="#fff" stroke="#222"/><path d="M2 3h10" stroke="#222"/><rect x="4" y="6" width="3" height="3" fill="#3a3ad0"/><rect x="8" y="6" width="3" height="3" fill="#30a040"/><rect x="12" y="6" width="3" height="3" fill="#802080"/><rect x="4" y="10" width="3" height="3" fill="#d03030"/><rect x="8" y="10" width="3" height="3" fill="#888"/><rect x="12" y="10" width="3" height="3" fill="#222"/></svg>
<span class="t" style="font-family:'Liberation Sans', sans-serif;font-size:11.5px;color:#0000ff;line-height:11.5px;top:165.07px;-webkit-text-stroke:0.180px #0000ff;transform:scaleX(0.8839);transform-origin:0 0;left:848.00px;">Color Schemes</span>
<svg style="left:827px;top:178px;" width="16" height="16" viewBox="0 0 16 16" shape-rendering="auto"><rect x="0.500" y="0.500" width="13" height="10" rx="1.500" fill="#fff" stroke="#222"/><path d="M2 3h10M3 6h5" stroke="#222"/><path d="M10 6l1.500 3h3l-2.400 2 1 3.200-3.100-2-3.100 2 1-3.200-2.400-2h3z" fill="#f0e020" stroke="#444" stroke-width="0.500"/></svg>
<span class="t" style="font-family:'Liberation Sans', sans-serif;font-size:11.5px;color:#0000ff;line-height:11.5px;top:181.07px;-webkit-text-stroke:0.180px #0000ff;transform:scaleX(0.8946);transform-origin:0 0;left:848.00px;">Animation Schemes</span>
<span class="t" style="font-family:'Liberation Sans', sans-serif;font-size:11.5px;font-weight:bold;color:#000;line-height:11.5px;top:207.07px;-webkit-text-stroke:0.180px #000;transform:scaleX(1.0286);transform-origin:0 0;left:827.00px;">Apply a design template:</span>
<div style="left:827px;top:221px;width:188px;height:496.5px;background:#fff;box-shadow:inset 1px 1px 0 #000,inset -1px -1px 0 #000;"></div>
<div style="left:999.5px;top:222.5px;width:14px;height:493px;background:repeating-conic-gradient(#cfafb7 0 25%,#ffffff 0 50%) 0 0/2px 2px;"></div>
<div style="left:999.5px;top:222.5px;width:14px;height:14px;background:#cfafb7;box-shadow:inset -1px -1px 0 #000,inset 1px 1px 0 #e7d8dc,inset -2px -2px 0 #9f6070,inset 2px 2px 0 #fff;"></div>
<svg style="left:1003px;top:227px;" width="7" height="4" viewBox="0 0 7 4" shape-rendering="auto"><path d="M0 4h7l-3.500-4z" fill="#000"/></svg>
<div style="left:999.5px;top:236.5px;width:14px;height:38px;background:#cfafb7;box-shadow:inset -1px -1px 0 #000,inset 1px 1px 0 #e7d8dc,inset -2px -2px 0 #9f6070,inset 2px 2px 0 #fff;"></div>
<div style="left:999.5px;top:702px;width:14px;height:14px;background:#cfafb7;box-shadow:inset -1px -1px 0 #000,inset 1px 1px 0 #e7d8dc,inset -2px -2px 0 #9f6070,inset 2px 2px 0 #fff;"></div>
<svg style="left:1003px;top:707px;" width="7" height="4" viewBox="0 0 7 4" shape-rendering="auto"><path d="M0 0h7l-3.500 4z" fill="#000"/></svg>
<div style="left:829.5px;top:224.5px;width:167.5px;height:113.5px;background:#fff;box-sizing:border-box;border:2px solid #9f6070;"></div>
<div style="left:841px;top:227px;width:144px;height:108px;background:#fff;box-sizing:border-box;border:1px solid #000;"></div>
<div style="left:847px;top:235px;width:9px;height:8px;background:#4a4ab8;"></div>
<div style="left:850px;top:242px;width:8px;height:6px;background:#78b850;"></div>
<div style="left:843px;top:240px;width:8px;height:6px;background:linear-gradient(135deg,#fff,#c890d8);"></div>
<span class="t" style="font-family:'Liberation Sans', sans-serif;font-size:8.5px;color:#000066;line-height:8.5px;top:233.60px;transform:scaleX(1.0280);transform-origin:0 0;left:861.50px;">Lorem Ipsum</span>
<div style="left:848px;top:255px;width:2px;height:2px;background:#78b850;"></div>
<span class="t" style="font-family:'Liberation Sans', sans-serif;font-size:5.5px;font-weight:bold;color:#000;line-height:5.5px;top:253.14px;transform:scaleX(1.0304);transform-origin:0 0;left:853.00px;">Dolor sit amet consectetuer adipiscing elit</span>
<span class="t" style="font-family:'Liberation Sans', sans-serif;font-size:5.5px;font-weight:bold;color:#000;line-height:5.5px;top:261.14px;transform:scaleX(1.0066);transform-origin:0 0;left:853.00px;">sed diam</span>
<div style="left:855px;top:272px;width:2px;height:2px;background:#c890d8;"></div>
<span class="t" style="font-family:'Liberation Sans', sans-serif;font-size:5.5px;font-weight:bold;color:#000;line-height:5.5px;top:269.14px;transform:scaleX(0.9194);transform-origin:0 0;left:859.00px;">Nonummy nibh euismod</span>
<div style="left:862px;top:279px;width:1px;height:1px;background:#78b850;"></div>
<span class="t" style="font-family:'Liberation Sans', sans-serif;font-size:4.8px;font-weight:bold;color:#000;line-height:4.8px;top:276.74px;transform:scaleX(0.9503);transform-origin:0 0;left:866.00px;">Tincidunt ut</span>
<div style="left:869px;top:286px;width:1px;height:1px;background:#4a4ab8;"></div>
<span class="t" style="font-family:'Liberation Sans', sans-serif;font-size:4.2px;font-weight:bold;color:#000;line-height:4.2px;top:283.74px;transform:scaleX(0.8249);transform-origin:0 0;left:873.00px;">Laoreet dolore</span>
<div style="left:876px;top:291px;width:1px;height:1px;background:#d06080;"></div>
<span class="t" style="font-family:'Liberation Sans', sans-serif;font-size:4px;font-weight:bold;color:#000;line-height:4px;top:289.41px;transform:scaleX(0.8303);transform-origin:0 0;left:880.00px;">Magna aliquam</span>
<div style="left:876px;top:297px;width:1px;height:1px;background:#d06080;"></div>
<span class="t" style="font-family:'Liberation Sans', sans-serif;font-size:4px;font-weight:bold;color:#000;line-height:4px;top:294.91px;transform:scaleX(0.8698);transform-origin:0 0;left:880.00px;">Exerci tation ullamcorper suscipit lobortis nisl ut aliquip</span>
<span class="t" style="font-family:'Liberation Sans', sans-serif;font-size:4px;font-weight:bold;color:#000;line-height:4px;top:299.41px;transform:scaleX(0.8265);transform-origin:0 0;left:880.00px;">ex ea com</span>
<div style="left:848px;top:329px;width:14px;height:1px;background:#444;"></div>
<div style="left:907px;top:329px;width:9px;height:1px;background:#444;"></div>
<div style="left:828px;top:341px;width:171.5px;height:22px;background:#cfafb7;"></div>
<span class="t" style="font-family:'Liberation Sans', sans-serif;font-size:11.5px;font-weight:bold;color:#000;line-height:11.5px;top:347.07px;-webkit-text-stroke:0.180px #000;transform:scaleX(1.0219);transform-origin:0 0;left:832.50px;">Recently Used</span>
<div style="left:841px;top:368px;width:144px;height:108px;background:#fff;box-sizing:border-box;border:1px solid #000;"></div>
<div style="left:858px;top:373px;width:16px;height:16px;background:#d8d8f0;border-radius:50%;box-sizing:border-box;border:1px solid #d0d0ec;"></div>
<div style="left:878px;top:373px;width:16px;height:16px;background:#fff;border-radius:50%;box-sizing:border-box;border:1px solid #d0d0ec;"></div>
<div style="left:919px;top:373px;width:16px;height:16px;background:#d8d8f0;border-radius:50%;box-sizing:border-box;border:1px solid #d0d0ec;"></div>
<div style="left:941px;top:373px;width:16px;height:16px;background:#fff;border-radius:50%;box-sizing:border-box;border:1px solid #d0d0ec;"></div>
<div style="left:960px;top:373px;width:16px;height:16px;background:#d8d8f0;border-radius:50%;box-sizing:border-box;border:1px solid #d0d0ec;"></div>
<span class="t" style="font-family:'Liberation Sans', sans-serif;font-size:8.5px;color:#000;line-height:8.5px;top:377.10px;transform:scaleX(0.8869);transform-origin:0 0;left:850.50px;">Lorem Ipsum</span>
<div style="left:851px;top:397px;width:3px;height:3px;background:#c8c8f0;"></div>
<span class="t" style="font-family:'Liberation Sans', sans-serif;font-size:6px;color:#000;line-height:6px;top:394.72px;transform:scaleX(1.0567);transform-origin:0 0;left:855.50px;">Dolor sit amet consectetuer adipiscing elit</span>
<span class="t" style="font-family:'Liberation Sans', sans-serif;font-size:6px;color:#000;line-height:6px;top:403.22px;transform:scaleX(1.0263);transform-origin:0 0;left:855.50px;">sed diam</span>
<div style="left:857px;top:413px;width:3px;height:3px;background:#c8c8f0;"></div>
<span class="t" style="font-family:'Liberation Sans', sans-serif;font-size:5.5px;font-weight:bold;color:#000;line-height:5.5px;top:411.64px;transform:scaleX(0.8727);transform-origin:0 0;left:862.00px;">Nonummy nibh euismod</span>
<div style="left:864px;top:420px;width:2px;height:2px;background:#c8c8f0;"></div>
<span class="t" style="font-family:'Liberation Sans', sans-serif;font-size:4.8px;font-weight:bold;color:#000;line-height:4.8px;top:418.24px;transform:scaleX(0.8407);transform-origin:0 0;left:868.00px;">Tincidunt ut</span>
<span class="t" style="font-family:'Liberation Sans', sans-serif;font-size:4.2px;font-weight:bold;color:#000;line-height:4.2px;top:424.74px;transform:scaleX(0.8593);transform-origin:0 0;left:875.00px;">Laoreet dolore</span>
<div style="left:878px;top:432px;width:2px;height:2px;background:#c8c8f0;"></div>
<span class="t" style="font-family:'Liberation Sans', sans-serif;font-size:4px;font-weight:bold;color:#000;line-height:4px;top:430.91px;transform:scaleX(0.8995);transform-origin:0 0;left:882.00px;">Magna aliquam</span>
<div style="left:878px;top:438px;width:2px;height:2px;background:#c8c8f0;"></div>
<span class="t" style="font-family:'Liberation Sans', sans-serif;font-size:4px;font-weight:bold;color:#000;line-height:4px;top:436.91px;transform:scaleX(0.8932);transform-origin:0 0;left:882.00px;">Exerci tation ullamcorper suscipit lobortis nisl ut</span>
<span class="t" style="font-family:'Liberation Sans', sans-serif;font-size:4px;font-weight:bold;color:#000;line-height:4px;top:441.91px;transform:scaleX(0.8993);transform-origin:0 0;left:882.00px;">aliquip ex ea com</span>
<div style="left:850px;top:468px;width:9px;height:1px;background:#444;"></div>
<div style="left:909px;top:468px;width:7px;height:1px;background:#444;"></div>
<div style="left:841px;top:486px;width:144px;height:108px;background:#fff;box-sizing:border-box;border:1px solid #000;"></div>
<div style="left:845px;top:518px;width:9px;height:5px;background:#78b850;"></div>
<div style="left:847px;top:523px;width:9px;height:8px;background:#4a4ab8;"></div>
<div style="left:843px;top:523px;width:7px;height:5px;background:linear-gradient(135deg,#fff,#e8b0e0);"></div>
<div style="left:847px;top:528.5px;width:128px;height:1px;background:linear-gradient(90deg,#333,#fff);"></div>
<span class="t" style="font-family:'Liberation Sans', sans-serif;font-size:8.5px;color:#000066;line-height:8.5px;top:516.60px;transform:scaleX(1.0150);transform-origin:0 0;left:857.50px;">Solving problems by searching</span>
<span class="t" style="font-family:'Liberation Sans', sans-serif;font-size:5.5px;font-weight:bold;color:#000;line-height:5.5px;top:541.14px;transform:scaleX(1.0640);transform-origin:0 0;left:899.00px;">Chapter 3</span>
<div style="left:858px;top:588px;width:15px;height:1px;background:#555;"></div>
<div style="left:904px;top:588px;width:27px;height:1px;background:#555;"></div>
<div style="left:976px;top:587px;width:1px;height:2px;background:#555;"></div>
<div style="left:841px;top:604px;width:144px;height:108px;background:#fff;box-sizing:border-box;border:1px solid #000;"></div>
<svg style="left:853px;top:612px;" width="6" height="19" viewBox="0 0 6 19" shape-rendering="auto"><path d="M4.500 0.500h-4v17.500h4" fill="none" stroke="#222" stroke-width="1"/></svg>
<svg style="left:969px;top:607px;" width="6" height="19" viewBox="0 0 6 19" shape-rendering="auto"><path d="M0.500 0.500h4v17.500h-4" fill="none" stroke="#e0a020" stroke-width="1"/></svg>
<div style="left:842px;top:626px;width:128px;height:1px;background:linear-gradient(90deg,#b8b860,#fff);"></div>
<span class="t" style="font-family:'Liberation Sans', sans-serif;font-size:8.5px;color:#000;line-height:8.5px;top:618.10px;transform:scaleX(0.8869);transform-origin:0 0;left:857.50px;">Lorem Ipsum</span>
<div style="left:857px;top:640px;width:3px;height:2px;background:#e0a020;"></div>
<span class="t" style="font-family:'Liberation Sans', sans-serif;font-size:6px;color:#000;line-height:6px;top:637.22px;transform:scaleX(1.0455);transform-origin:0 0;left:864.50px;">Dolor sit amet consectetuer adipiscing</span>
<span class="t" style="font-family:'Liberation Sans', sans-serif;font-size:6px;color:#000;line-height:6px;top:645.22px;transform:scaleX(1.0686);transform-origin:0 0;left:864.00px;">elit sed diam</span>
<div style="left:864px;top:656px;width:3px;height:2px;background:#a8a830;"></div>
<span class="t" style="font-family:'Liberation Sans', sans-serif;font-size:5.5px;font-weight:bold;color:#000;line-height:5.5px;top:654.14px;transform:scaleX(0.9194);transform-origin:0 0;left:871.00px;">Nonummy nibh euismod</span>
<div style="left:871px;top:663px;width:3px;height:2px;background:#e0a020;"></div>
<span class="t" style="font-family:'Liberation Sans', sans-serif;font-size:4.8px;font-weight:bold;color:#000;line-height:4.8px;top:661.24px;transform:scaleX(0.9138);transform-origin:0 0;left:877.00px;">Tincidunt ut</span>
<div style="left:878px;top:669px;width:3px;height:2px;background:#a8a830;"></div>
<span class="t" style="font-family:'Liberation Sans', sans-serif;font-size:4.2px;font-weight:bold;color:#000;line-height:4.2px;top:667.74px;transform:scaleX(0.8593);transform-origin:0 0;left:884.00px;">Laoreet dolore</span>
<div style="left:885px;top:675px;width:3px;height:2px;background:#e0a020;"></div>
<span class="t" style="font-family:'Liberation Sans', sans-serif;font-size:4px;font-weight:bold;color:#000;line-height:4px;top:673.91px;transform:scaleX(0.8995);transform-origin:0 0;left:890.00px;">Magna aliquam</span>
<div style="left:885px;top:681px;width:3px;height:2px;background:#e0a020;"></div>
<span class="t" style="font-family:'Liberation Sans', sans-serif;font-size:4px;font-weight:bold;color:#000;line-height:4px;top:679.41px;transform:scaleX(0.8932);transform-origin:0 0;left:890.00px;">Exerci tation ullamcorper suscipit lobortis nisl ut</span>
<span class="t" style="font-family:'Liberation Sans', sans-serif;font-size:4px;font-weight:bold;color:#000;line-height:4px;top:683.91px;transform:scaleX(0.8993);transform-origin:0 0;left:890.00px;">aliquip ex ea com</span>
<div style="left:857px;top:704px;width:10px;height:1px;background:#333;"></div>
<div style="left:913px;top:704px;width:6px;height:1px;background:#333;"></div>
<svg style="left:827px;top:723px;" width="17" height="15" viewBox="0 0 17 15" shape-rendering="auto"><rect x="0.500" y="0.500" width="12" height="9" fill="#ddd" stroke="#333"/><rect x="2" y="2" width="9" height="6" fill="#fff"/><circle cx="9.500" cy="8" r="3.200" fill="#a0e0f0" stroke="#555"/><path d="M12 10.500l4 4" stroke="#222" stroke-width="1.800"/></svg>
<span class="t" style="font-family:'Liberation Sans', sans-serif;font-size:11.5px;color:#0000ff;line-height:11.5px;top:724.07px;-webkit-text-stroke:0.180px #0000ff;transform:scaleX(0.9700);transform-origin:0 0;left:847.50px;">Browse...</span>
<div style="left:1021.5px;top:120px;width:2.5px;height:628px;background:#cfafb7;"></div>
<div style="left:1024px;top:0px;width:28px;height:768px;background:#cfafb7;"></div>
<div style="left:1024px;top:0px;width:28px;height:18px;background:#a0a0a4;"></div>
<div style="left:1027px;top:3px;width:14px;height:12px;background:#fff;box-shadow:inset 0 0 0 1px #555;"></div>
<svg style="left:1029px;top:5px;" width="10" height="8" viewBox="0 0 10 8" shape-rendering="auto"><path d="M1 1h8l-4 6z" fill="#2030d0" stroke="#000" stroke-width="0.800"/></svg>
<span class="t" style="font-family:'Liberation Sans', sans-serif;font-size:12px;font-weight:bold;color:#888;line-height:12px;top:3.64px;-webkit-text-stroke:0.180px #888;left:1045.00px;">s</span>
<div style="left:1024px;top:18px;width:28px;height:24px;background:#cfafb7;"></div>
<div style="left:1028px;top:24px;width:3px;height:14px;"><div style="left:0;top:0px;width:3px;height:1px;background:#b48a96"></div><div style="left:0;top:2px;width:3px;height:1px;background:#b48a96"></div><div style="left:0;top:4px;width:3px;height:1px;background:#b48a96"></div><div style="left:0;top:6px;width:3px;height:1px;background:#b48a96"></div><div style="left:0;top:8px;width:3px;height:1px;background:#b48a96"></div><div style="left:0;top:10px;width:3px;height:1px;background:#b48a96"></div><div style="left:0;top:12px;width:3px;height:1px;background:#b48a96"></div></div>
<span class="t" style="font-family:'Liberation Sans', sans-serif;font-size:11.5px;color:#000;line-height:11.5px;top:26.07px;-webkit-text-stroke:0.180px #000;transform:scaleX(0.7815);transform-origin:0 0;left:1040.50px;"><u>F</u>il</span>
<div style="left:1026px;top:44px;width:26px;height:24px;background:#d9bcc4;"></div>
<div style="left:1028px;top:49px;width:3px;height:14px;"><div style="left:0;top:0px;width:3px;height:1px;background:#b48a96"></div><div style="left:0;top:2px;width:3px;height:1px;background:#b48a96"></div><div style="left:0;top:4px;width:3px;height:1px;background:#b48a96"></div><div style="left:0;top:6px;width:3px;height:1px;background:#b48a96"></div><div style="left:0;top:8px;width:3px;height:1px;background:#b48a96"></div><div style="left:0;top:10px;width:3px;height:1px;background:#b48a96"></div><div style="left:0;top:12px;width:3px;height:1px;background:#b48a96"></div></div>
<svg style="left:1039px;top:49px;" width="14" height="15" viewBox="0 0 14 15" shape-rendering="auto"><rect x="0.500" y="0.500" width="14" height="14" fill="#c8c040" stroke="#222"/><rect x="3" y="1" width="10" height="5" fill="#eee"/><rect x="3" y="9" width="10" height="6" fill="#222"/></svg>
<div style="left:1026px;top:70px;width:26px;height:24px;background:#d9bcc4;"></div>
<div style="left:1028px;top:75px;width:3px;height:14px;"><div style="left:0;top:0px;width:3px;height:1px;background:#b48a96"></div><div style="left:0;top:2px;width:3px;height:1px;background:#b48a96"></div><div style="left:0;top:4px;width:3px;height:1px;background:#b48a96"></div><div style="left:0;top:6px;width:3px;height:1px;background:#b48a96"></div><div style="left:0;top:8px;width:3px;height:1px;background:#b48a96"></div><div style="left:0;top:10px;width:3px;height:1px;background:#b48a96"></div><div style="left:0;top:12px;width:3px;height:1px;background:#b48a96"></div></div>
<div style="left:1043px;top:77px;width:9px;height:12px;background:#fff;box-shadow:inset 1px 0 0 #555,inset 0 1px 0 #555,inset 0 -1px 0 #555;"></div>
<div style="left:1025px;top:98px;width:27px;height:622px;background:#000;"></div>
<div style="left:1024px;top:98px;width:1px;height:622px;background:#9f6070;"></div>
<div style="left:1030px;top:138px;width:22px;height:17px;background:#808080;"></div>
<div style="left:1025px;top:98px;width:27px;height:622px;overflow:hidden;"><span class="t" style="font-family:'Liberation Mono', monospace;font-size:13.300px;line-height:14px;left:6px;top:7.0px;color:#b8b8b8;">  &lt;</span><span class="t" style="font-family:'Liberation Mono', monospace;font-size:13.300px;line-height:14px;left:6px;top:23.0px;color:#b8b8b8;">&lt;/</span><span class="t" style="font-family:'Liberation Mono', monospace;font-size:13.300px;line-height:14px;left:6px;top:40.0px;color:#000;"> :-</span><span class="t" style="font-family:'Liberation Mono', monospace;font-size:13.300px;line-height:14px;left:6px;top:74.0px;color:#b8b8b8;">[1]</span><span class="t" style="font-family:'Liberation Mono', monospace;font-size:13.300px;line-height:14px;left:6px;top:92.0px;color:#b8b8b8;">(wo</span><span class="t" style="font-family:'Liberation Mono', monospace;font-size:13.300px;line-height:14px;left:6px;top:108.0px;color:#b8b8b8;">You</span><span class="t" style="font-family:'Liberation Mono', monospace;font-size:13.300px;line-height:14px;left:6px;top:125.0px;color:#b8b8b8;">sf0</span><span class="t" style="font-family:'Liberation Mono', monospace;font-size:13.300px;line-height:14px;left:6px;top:142.0px;color:#b8b8b8;">ppt</span><span class="t" style="font-family:'Liberation Mono', monospace;font-size:13.300px;line-height:14px;left:6px;top:159.0px;color:#b8b8b8;">chm</span><span class="t" style="font-family:'Liberation Mono', monospace;font-size:13.300px;line-height:14px;left:6px;top:176.0px;color:#b8b8b8;">chm</span><span class="t" style="font-family:'Liberation Mono', monospace;font-size:13.300px;line-height:14px;left:6px;top:193.0px;color:#b8b8b8;">chm</span><span class="t" style="font-family:'Liberation Mono', monospace;font-size:13.300px;line-height:14px;left:6px;top:210.0px;color:#b8b8b8;">chm</span><span class="t" style="font-family:'Liberation Mono', monospace;font-size:13.300px;line-height:14px;left:6px;top:227.0px;color:#b8b8b8;">sf0</span><span class="t" style="font-family:'Liberation Mono', monospace;font-size:13.300px;line-height:14px;left:6px;top:245.0px;color:#b8b8b8;">~/p</span><span class="t" style="font-family:'Liberation Mono', monospace;font-size:13.300px;line-height:14px;left:6px;top:262.0px;color:#b8b8b8;">sf0</span><span class="t" style="font-family:'Liberation Mono', monospace;font-size:13.300px;line-height:14px;left:6px;top:279.0px;color:#b8b8b8;">ect</span><span class="t" style="font-family:'Liberation Mono', monospace;font-size:13.300px;line-height:14px;left:6px;top:296.0px;color:#b8b8b8;">sf0</span><span class="t" style="font-family:'Liberation Mono', monospace;font-size:13.300px;line-height:14px;left:6px;top:313.0px;color:#b8b8b8;">~/3</span><span class="t" style="font-family:'Liberation Mono', monospace;font-size:13.300px;line-height:14px;left:6px;top:330.0px;color:#b8b8b8;">sf0</span><span class="t" style="font-family:'Liberation Mono', monospace;font-size:13.300px;line-height:14px;left:6px;top:347.0px;color:#fff;">Mak</span><span class="t" style="font-family:'Liberation Mono', monospace;font-size:13.300px;line-height:14px;left:6px;top:363.0px;color:#20e8e8;font-weight:bold;">alg</span><span class="t" style="font-family:'Liberation Mono', monospace;font-size:13.300px;line-height:14px;left:6px;top:381.0px;color:#fff;">cs3</span><span class="t" style="font-family:'Liberation Mono', monospace;font-size:13.300px;line-height:14px;left:6px;top:398.0px;color:#20e8e8;font-weight:bold;">dor</span><span class="t" style="font-family:'Liberation Mono', monospace;font-size:13.300px;line-height:14px;left:6px;top:414.0px;color:#fff;">sf0</span><span class="t" style="font-family:'Liberation Mono', monospace;font-size:13.300px;line-height:14px;left:6px;top:431.0px;color:#fff;">sf0</span><span class="t" style="font-family:'Liberation Mono', monospace;font-size:13.300px;line-height:14px;left:6px;top:448.0px;color:#fff;">age</span><span class="t" style="font-family:'Liberation Mono', monospace;font-size:13.300px;line-height:14px;left:6px;top:465.0px;color:#fff;font-weight:bold;">age</span><span class="t" style="font-family:'Liberation Mono', monospace;font-size:13.300px;line-height:14px;left:6px;top:482.0px;color:#fff;">age</span><span class="t" style="font-family:'Liberation Mono', monospace;font-size:13.300px;line-height:14px;left:6px;top:499.0px;color:#fff;">bay</span><span class="t" style="font-family:'Liberation Mono', monospace;font-size:13.300px;line-height:14px;left:6px;top:516.0px;color:#fff;font-weight:bold;">bay</span><span class="t" style="font-family:'Liberation Mono', monospace;font-size:13.300px;line-height:14px;left:6px;top:533.0px;color:#fff;">sf0</span><span class="t" style="font-family:'Liberation Mono', monospace;font-size:13.300px;line-height:14px;left:6px;top:550.0px;color:#fff;">gv:</span><span class="t" style="font-family:'Liberation Mono', monospace;font-size:13.300px;line-height:14px;left:6px;top:567.0px;color:#fff;">sf0</span><span class="t" style="font-family:'Liberation Mono', monospace;font-size:13.300px;line-height:14px;left:6px;top:584.0px;color:#fff;">sf0</span></div>
<span class="t" style="font-family:'Liberation Sans', sans-serif;font-size:11.5px;color:#000;line-height:11.5px;top:727.07px;-webkit-text-stroke:0.180px #000;transform:scaleX(0.8727);transform-origin:0 0;left:1027.00px;">Conn</span>
<div style="left:1050px;top:0px;width:998px;height:739px;background:#cfafb7;"></div>
<div style="left:1050px;top:0px;width:4px;height:738px;background:#cfafb7;"></div>
<div style="left:1051px;top:0px;width:1px;height:738px;background:#e7d8dc;"></div>
<div style="left:1054px;top:0px;width:994px;height:8px;background:linear-gradient(90deg,#9f6070 0%,#b4808e 30%,#cdb0b8 60%,#dcd4d6 100%);"></div>
<div style="left:1056px;top:0px;width:16px;height:6px;background:#fff;background-image:repeating-conic-gradient(#000 0 25%,#fff 0 50%);background-size:2px 2px;"></div>
<span class="t" style="font-family:'Liberation Sans', sans-serif;font-size:13px;font-weight:bold;color:#fff;line-height:13px;top:-6.70px;-webkit-text-stroke:0.180px #fff;transform:scaleX(0.8859);transform-origin:0 0;left:1075.00px;">gv: heuristics.pdf</span>
<div style="left:2008px;top:-8px;width:14px;height:14px;background:#cfafb7;box-shadow:inset -1px -1px 0 #000,inset 1px 1px 0 #fff,inset -2px -2px 0 #9f6070,inset 2px 2px 0 #e7d8dc;"></div>
<div style="left:2024px;top:-8px;width:14px;height:14px;background:#cfafb7;box-shadow:inset -1px -1px 0 #000,inset 1px 1px 0 #fff,inset -2px -2px 0 #9f6070,inset 2px 2px 0 #e7d8dc;"></div>
<div style="left:2042px;top:-8px;width:14px;height:14px;background:#cfafb7;box-shadow:inset -1px -1px 0 #000,inset 1px 1px 0 #fff,inset -2px -2px 0 #9f6070,inset 2px 2px 0 #e7d8dc;"></div>
<div style="left:2011px;top:1px;width:6px;height:2px;background:#000;"></div>
<div style="left:2027px;top:-4px;width:8px;height:8px;box-sizing:border-box;border:1px solid #000;border-top-width:2px;"></div>
<div style="left:1054px;top:8px;width:994px;height:727px;background:#b4b4b4;"></div>
<div style="left:1050px;top:735px;width:998px;height:3px;background:#9f6070;"></div>
<div style="left:1050px;top:735px;width:998px;height:1px;background:#cfafb7;"></div>
<div style="left:1063px;top:17.5px;width:70.5px;height:23.5px;background:#d0c1b1;box-shadow:inset 1px 1px 0 #efe6dc,inset -1px -1px 0 #8a7d70,inset 2px 2px 0 #e4d8cb,inset -2px -2px 0 #a8998a;"></div>
<span class="t" style="font-family:'Liberation Sans', sans-serif;font-size:15px;color:#000;line-height:15px;top:22.10px;transform:scaleX(0.9515);transform-origin:0 0;left:1086.75px;">File</span>
<div style="left:1143px;top:17.5px;width:43.5px;height:23.5px;background:#d0c1b1;box-shadow:inset 1px 1px 0 #efe6dc,inset -1px -1px 0 #8a7d70,inset 2px 2px 0 #e4d8cb,inset -2px -2px 0 #a8998a;"></div>
<span class="t" style="font-family:'Liberation Sans', sans-serif;font-size:15px;color:#000;line-height:15px;top:22.10px;transform:scaleX(0.9420);transform-origin:0 0;left:1148.25px;">State</span>
<div style="left:1191.5px;top:17.5px;width:44.5px;height:23.5px;background:#d0c1b1;box-shadow:inset 1px 1px 0 #efe6dc,inset -1px -1px 0 #8a7d70,inset 2px 2px 0 #e4d8cb,inset -2px -2px 0 #a8998a;"></div>
<span class="t" style="font-family:'Liberation Sans', sans-serif;font-size:15px;color:#000;line-height:15px;top:22.10px;transform:scaleX(0.9416);transform-origin:0 0;left:1197.25px;">Page</span>
<div style="left:1240.5px;top:17.5px;width:76.0px;height:23.5px;background:#d0c1b1;box-shadow:inset 1px 1px 0 #efe6dc,inset -1px -1px 0 #8a7d70,inset 2px 2px 0 #e4d8cb,inset -2px -2px 0 #a8998a;"></div>
<span class="t" style="font-family:'Liberation Sans', sans-serif;font-size:15px;color:#000;line-height:15px;top:22.10px;transform:scaleX(0.9742);transform-origin:0 0;left:1246.00px;">Seascape</span>
<div style="left:1321.5px;top:17.5px;width:46.5px;height:23.5px;background:#d0c1b1;box-shadow:inset 1px 1px 0 #efe6dc,inset -1px -1px 0 #8a7d70,inset 2px 2px 0 #e4d8cb,inset -2px -2px 0 #a8998a;"></div>
<span class="t" style="font-family:'Liberation Sans', sans-serif;font-size:15px;color:#000;line-height:15px;top:22.10px;transform:scaleX(0.9055);transform-origin:0 0;left:1327.75px;">1.000</span>
<div style="left:1373px;top:17.5px;width:73px;height:23.5px;background:#d0c1b1;box-shadow:inset 1px 1px 0 #efe6dc,inset -1px -1px 0 #8a7d70,inset 2px 2px 0 #e4d8cb,inset -2px -2px 0 #a8998a;"></div>
<span class="t" style="font-family:'Liberation Sans', sans-serif;font-size:15px;color:#000;line-height:15px;top:22.10px;transform:scaleX(0.9529);transform-origin:0 0;left:1378.50px;">y792x612</span>
<div style="left:1451px;top:19px;width:376px;height:21px;background:#d0c1b1;box-shadow:inset 0 0 0 1px #9a8d80,inset 0 0 0 2px #f0e4d6;"></div>
<span class="t" style="font-family:'Liberation Sans', sans-serif;font-size:12px;color:#000;line-height:12px;top:24.46px;-webkit-text-stroke:0.180px #000;transform:scaleX(1.0466);transform-origin:0 0;left:1602.00px;">heuristics.pdf</span>
<div style="left:1833px;top:19px;width:219px;height:21px;background:#d0c1b1;box-shadow:inset 0 0 0 1px #9a8d80,inset 0 0 0 2px #f0e4d6;"></div>
<span class="t" style="font-family:'Liberation Sans', sans-serif;font-size:12px;color:#000;line-height:12px;top:24.46px;-webkit-text-stroke:0.180px #000;transform:scaleX(1.0588);transform-origin:0 0;left:1867.00px;">Tue Dec 16 10:52:10 2003</span>
<div style="left:1063px;top:51px;width:70.5px;height:19px;background:#d0c1b1;box-shadow:inset 1px 1px 0 #efe6dc,inset -1px -1px 0 #8a7d70,inset 2px 2px 0 #e4d8cb,inset -2px -2px 0 #a8998a;"></div>
<span class="t" style="font-family:'Liberation Sans', sans-serif;font-size:11px;color:#000;line-height:11px;top:55.95px;-webkit-text-stroke:0.180px #000;transform:scaleX(0.9062);transform-origin:0 0;left:1069.25px;">Variable Size</span>
<div style="left:1063px;top:77px;width:70px;height:20px;background:#a2a2a2;box-shadow:inset 1px 1px 0 #707070,inset -1px -1px 0 #c4c4c4,inset 2px 2px 0 #8c8c8c;"></div>
<span class="t" style="font-family:'Liberation Sans', sans-serif;font-size:11px;color:#000;line-height:11px;top:82.45px;-webkit-text-stroke:0.180px #000;transform:scaleX(0.9932);transform-origin:0 0;left:1074.00px;">251 x 517</span>
<div style="left:1063px;top:105px;width:70.5px;height:19px;background:#d0c1b1;box-shadow:inset 1px 1px 0 #efe6dc,inset -1px -1px 0 #8a7d70,inset 2px 2px 0 #e4d8cb,inset -2px -2px 0 #a8998a;"></div>
<span class="t" style="font-family:'Liberation Sans', sans-serif;font-size:11px;color:#000;line-height:11px;top:109.95px;-webkit-text-stroke:0.180px #000;transform:scaleX(0.8915);transform-origin:0 0;left:1086.25px;">Open</span>
<div style="left:1063px;top:127px;width:70.5px;height:19px;background:#d0c1b1;box-shadow:inset 1px 1px 0 #efe6dc,inset -1px -1px 0 #8a7d70,inset 2px 2px 0 #e4d8cb,inset -2px -2px 0 #a8998a;"></div>
<span class="t" style="font-family:'Liberation Sans', sans-serif;font-size:11px;color:#000;line-height:11px;top:131.95px;-webkit-text-stroke:0.180px #000;transform:scaleX(0.9920);transform-origin:0 0;left:1079.75px;">Print All</span>
<div style="left:1063px;top:149px;width:70.5px;height:19px;background:#d0c1b1;box-shadow:inset 1px 1px 0 #efe6dc,inset -1px -1px 0 #8a7d70,inset 2px 2px 0 #e4d8cb,inset -2px -2px 0 #a8998a;"></div>
<span class="t" style="font-family:'Liberation Sans', sans-serif;font-size:11px;color:#000;line-height:11px;top:153.95px;-webkit-text-stroke:0.180px #000;transform:scaleX(0.9461);transform-origin:0 0;left:1068.75px;">Print Marked</span>
<div style="left:1063px;top:171px;width:70.5px;height:19px;background:#d0c1b1;box-shadow:inset 1px 1px 0 #efe6dc,inset -1px -1px 0 #8a7d70,inset 2px 2px 0 #e4d8cb,inset -2px -2px 0 #a8998a;"></div>
<span class="t" style="font-family:'Liberation Sans', sans-serif;font-size:11px;color:#000;line-height:11px;top:175.95px;-webkit-text-stroke:0.180px #000;transform:scaleX(0.9057);transform-origin:0 0;left:1080.25px;">Save All</span>
<div style="left:1063px;top:193px;width:70.5px;height:19px;background:#d0c1b1;box-shadow:inset 1px 1px 0 #efe6dc,inset -1px -1px 0 #8a7d70,inset 2px 2px 0 #e4d8cb,inset -2px -2px 0 #a8998a;"></div>
<span class="t" style="font-family:'Liberation Sans', sans-serif;font-size:11px;color:#000;line-height:11px;top:197.95px;-webkit-text-stroke:0.180px #000;transform:scaleX(0.9103);transform-origin:0 0;left:1068.75px;">Save Marked</span>
<div style="left:1073px;top:220px;width:50.5px;height:51px;background:#c8c8c8;box-shadow:inset 1px 1px 0 #8a8a8a,inset -1px -1px 0 #e6e6e6;"></div>
<div style="left:1063px;top:278px;width:34px;height:27px;background:#d0c1b1;box-shadow:inset 1px 1px 0 #efe6dc,inset -1px -1px 0 #8a7d70,inset 2px 2px 0 #e4d8cb,inset -2px -2px 0 #a8998a;"></div>
<span class="t" style="font-family:'Liberation Sans', sans-serif;font-size:10px;color:#000;line-height:10px;top:287.44px;-webkit-text-stroke:0.180px #000;transform:scaleX(1.3690);transform-origin:0 0;left:1072.00px;">&lt;&lt;</span>
<div style="left:1100px;top:278px;width:33.5px;height:27px;background:#d0c1b1;box-shadow:inset 1px 1px 0 #efe6dc,inset -1px -1px 0 #8a7d70,inset 2px 2px 0 #e4d8cb,inset -2px -2px 0 #a8998a;"></div>
<span class="t" style="font-family:'Liberation Sans', sans-serif;font-size:10px;color:#000;line-height:10px;top:287.44px;-webkit-text-stroke:0.180px #000;transform:scaleX(1.3690);transform-origin:0 0;left:1108.75px;">&gt;&gt;</span>
<div style="left:1063px;top:308px;width:70.5px;height:19px;background:#d0c1b1;box-shadow:inset 1px 1px 0 #efe6dc,inset -1px -1px 0 #8a7d70,inset 2px 2px 0 #e4d8cb,inset -2px -2px 0 #a8998a;"></div>
<span class="t" style="font-family:'Liberation Sans', sans-serif;font-size:11px;color:#000;line-height:11px;top:312.95px;-webkit-text-stroke:0.180px #000;transform:scaleX(0.8693);transform-origin:0 0;left:1077.25px;">Redisplay</span>
<div style="left:1063.5px;top:335px;width:16.0px;height:29.5px;background:#d0c1b1;box-shadow:inset 1px 1px 0 #efe6dc,inset -1px -1px 0 #8a7d70,inset 2px 2px 0 #e4d8cb,inset -2px -2px 0 #a8998a;"></div>
<svg style="left:1063.5px;top:335px;" width="16" height="30" viewBox="0 0 16 30" shape-rendering="auto"><rect x="8.500" y="4.5" width="4" height="3" fill="none" stroke="#000" stroke-width="1"/><rect x="3" y="5" width="3" height="2" fill="#000"/><rect x="8.500" y="10.5" width="4" height="3" fill="none" stroke="#000" stroke-width="1"/><rect x="8.500" y="16.5" width="4" height="3" fill="none" stroke="#000" stroke-width="1"/><rect x="3" y="17" width="3" height="2" fill="#000"/><rect x="8.500" y="22.5" width="4" height="3" fill="none" stroke="#000" stroke-width="1"/></svg>
<div style="left:1081.5px;top:335px;width:16.0px;height:29.5px;background:#d0c1b1;box-shadow:inset 1px 1px 0 #efe6dc,inset -1px -1px 0 #8a7d70,inset 2px 2px 0 #e4d8cb,inset -2px -2px 0 #a8998a;"></div>
<svg style="left:1081.5px;top:335px;" width="16" height="30" viewBox="0 0 16 30" shape-rendering="auto"><rect x="8.500" y="4.5" width="4" height="3" fill="none" stroke="#000" stroke-width="1"/><rect x="8.500" y="10.5" width="4" height="3" fill="none" stroke="#000" stroke-width="1"/><rect x="3" y="11" width="3" height="2" fill="#000"/><rect x="8.500" y="16.5" width="4" height="3" fill="none" stroke="#000" stroke-width="1"/><rect x="8.500" y="22.5" width="4" height="3" fill="none" stroke="#000" stroke-width="1"/><rect x="3" y="23" width="3" height="2" fill="#000"/></svg>
<div style="left:1100px;top:335px;width:16px;height:29.5px;background:#d0c1b1;box-shadow:inset 1px 1px 0 #efe6dc,inset -1px -1px 0 #8a7d70,inset 2px 2px 0 #e4d8cb,inset -2px -2px 0 #a8998a;"></div>
<svg style="left:1100px;top:335px;" width="16" height="30" viewBox="0 0 16 30" shape-rendering="auto"><rect x="8.500" y="4.5" width="4" height="3" fill="none" stroke="#000" stroke-width="1"/><rect x="8.500" y="10.5" width="4" height="3" fill="none" stroke="#000" stroke-width="1"/><rect x="8.500" y="16.5" width="4" height="3" fill="#000" stroke="#000" stroke-width="1"/><rect x="3" y="17" width="3" height="2" fill="#000"/><rect x="8.500" y="22.5" width="4" height="3" fill="none" stroke="#000" stroke-width="1"/></svg>
<div style="left:1118px;top:335px;width:15.5px;height:29.5px;background:#d0c1b1;box-shadow:inset 1px 1px 0 #efe6dc,inset -1px -1px 0 #8a7d70,inset 2px 2px 0 #e4d8cb,inset -2px -2px 0 #a8998a;"></div>
<svg style="left:1118px;top:335px;" width="16" height="30" viewBox="0 0 16 30" shape-rendering="auto"><rect x="8.500" y="4.5" width="4" height="3" fill="none" stroke="#000" stroke-width="1"/><rect x="8.500" y="10.5" width="4" height="3" fill="none" stroke="#000" stroke-width="1"/><rect x="8.500" y="16.5" width="4" height="3" fill="none" stroke="#000" stroke-width="1"/><rect x="8.500" y="22.5" width="4" height="3" fill="none" stroke="#000" stroke-width="1"/></svg>
<div style="left:1069px;top:371px;width:15px;height:354px;background:#b4b4b4;box-shadow:inset 1px 1px 0 #7c7c7c,inset -1px -1px 0 #e0e0e0;"></div>
<div style="left:1071px;top:387px;width:11px;height:179px;background:#bcbcbc;box-shadow:inset 1px 1px 0 #e6e6e6,inset -1px -1px 0 #707070,inset -2px -2px 0 #8c8c8c;"></div>
<svg style="left:1070px;top:372px;" width="13" height="14" viewBox="0 0 13 14" shape-rendering="auto"><path d="M1 13L6.500 1l5.500 12z" fill="#c4c4c4" stroke="#eee" stroke-width="1"/><path d="M6.500 1l5.500 12h-11" fill="none" stroke="#6c6c6c" stroke-width="1"/></svg>
<svg style="left:1070px;top:710px;" width="13" height="14" viewBox="0 0 13 14" shape-rendering="auto"><path d="M1 1L6.500 13l5.500-12z" fill="#c4c4c4" stroke="#eee" stroke-width="1"/><path d="M12 1l-5.500 12" fill="none" stroke="#6c6c6c" stroke-width="1.200"/></svg>
<div style="left:1089.5px;top:371px;width:39px;height:354px;background:#c9c9c9;box-shadow:inset 1px 1px 0 #7c7c7c,inset -1px -1px 0 #e6e6e6;"></div>
<div style="left:1103.5px;top:421px;width:21.5px;height:15px;background:#d6b4bc;box-shadow:inset 1px 1px 0 #8a7078,inset -1px -1px 0 #f0e0e4;"></div>
<span class="t" style="font-family:'Liberation Sans', sans-serif;font-size:12px;color:#000;line-height:12px;top:377.24px;-webkit-text-stroke:0.180px #000;left:1109.66px;">1</span>
<span class="t" style="font-family:'Liberation Sans', sans-serif;font-size:12px;color:#000;line-height:12px;top:392.24px;-webkit-text-stroke:0.180px #000;left:1109.66px;">2</span>
<span class="t" style="font-family:'Liberation Sans', sans-serif;font-size:12px;color:#000;line-height:12px;top:407.24px;-webkit-text-stroke:0.180px #000;left:1109.66px;">3</span>
<span class="t" style="font-family:'Liberation Sans', sans-serif;font-size:12px;color:#000;line-height:12px;top:422.24px;-webkit-text-stroke:0.180px #000;left:1109.66px;">4</span>
<span class="t" style="font-family:'Liberation Sans', sans-serif;font-size:12px;color:#000;line-height:12px;top:437.24px;-webkit-text-stroke:0.180px #000;left:1109.66px;">5</span>
<span class="t" style="font-family:'Liberation Sans', sans-serif;font-size:12px;color:#000;line-height:12px;top:452.24px;-webkit-text-stroke:0.180px #000;left:1109.66px;">6</span>
<span class="t" style="font-family:'Liberation Sans', sans-serif;font-size:12px;color:#000;line-height:12px;top:467.24px;-webkit-text-stroke:0.180px #000;left:1109.66px;">7</span>
<span class="t" style="font-family:'Liberation Sans', sans-serif;font-size:12px;color:#000;line-height:12px;top:482.24px;-webkit-text-stroke:0.180px #000;left:1109.66px;">8</span>
<span class="t" style="font-family:'Liberation Sans', sans-serif;font-size:12px;color:#000;line-height:12px;top:497.24px;-webkit-text-stroke:0.180px #000;left:1109.66px;">9</span>
<span class="t" style="font-family:'Liberation Sans', sans-serif;font-size:12px;color:#000;line-height:12px;top:512.24px;-webkit-text-stroke:0.180px #000;left:1106.32px;">10</span>
<span class="t" style="font-family:'Liberation Sans', sans-serif;font-size:12px;color:#000;line-height:12px;top:527.24px;-webkit-text-stroke:0.180px #000;left:1106.77px;">11</span>
<span class="t" style="font-family:'Liberation Sans', sans-serif;font-size:12px;color:#000;line-height:12px;top:542.24px;-webkit-text-stroke:0.180px #000;left:1106.32px;">12</span>
<span class="t" style="font-family:'Liberation Sans', sans-serif;font-size:12px;color:#000;line-height:12px;top:557.24px;-webkit-text-stroke:0.180px #000;left:1106.32px;">13</span>
<span class="t" style="font-family:'Liberation Sans', sans-serif;font-size:12px;color:#000;line-height:12px;top:572.24px;-webkit-text-stroke:0.180px #000;left:1106.32px;">14</span>
<span class="t" style="font-family:'Liberation Sans', sans-serif;font-size:12px;color:#000;line-height:12px;top:587.24px;-webkit-text-stroke:0.180px #000;left:1106.32px;">15</span>
<span class="t" style="font-family:'Liberation Sans', sans-serif;font-size:12px;color:#000;line-height:12px;top:602.24px;-webkit-text-stroke:0.180px #000;left:1106.32px;">16</span>
<span class="t" style="font-family:'Liberation Sans', sans-serif;font-size:12px;color:#000;line-height:12px;top:617.24px;-webkit-text-stroke:0.180px #000;left:1106.32px;">17</span>
<span class="t" style="font-family:'Liberation Sans', sans-serif;font-size:12px;color:#000;line-height:12px;top:632.24px;-webkit-text-stroke:0.180px #000;left:1106.32px;">18</span>
<span class="t" style="font-family:'Liberation Sans', sans-serif;font-size:12px;color:#000;line-height:12px;top:647.24px;-webkit-text-stroke:0.180px #000;left:1106.32px;">19</span>
<span class="t" style="font-family:'Liberation Sans', sans-serif;font-size:12px;color:#000;line-height:12px;top:662.24px;-webkit-text-stroke:0.180px #000;left:1106.32px;">20</span>
<span class="t" style="font-family:'Liberation Sans', sans-serif;font-size:12px;color:#000;line-height:12px;top:677.24px;-webkit-text-stroke:0.180px #000;left:1106.32px;">21</span>
<span class="t" style="font-family:'Liberation Sans', sans-serif;font-size:12px;color:#000;line-height:12px;top:692.24px;-webkit-text-stroke:0.180px #000;left:1106.32px;">22</span>
<span class="t" style="font-family:'Liberation Sans', sans-serif;font-size:12px;color:#000;line-height:12px;top:707.24px;-webkit-text-stroke:0.180px #000;left:1106.32px;">23</span>
<div style="left:1142px;top:50px;width:910px;height:673.5px;background:#b4b4b4;box-shadow:inset 1px 1px 0 #808080,inset 2px 2px 0 #8c8c8c;"></div>
<div style="left:1150px;top:52.5px;width:894px;height:669.5px;background:#fff;"></div>
<div style="left:2044px;top:52px;width:4px;height:683px;background:#b0b0b0;"></div>
<div style="left:1194px;top:130.5px;width:691px;height:35.5px;background:#fff;box-sizing:border-box;border:1px solid #222;"></div>
<div style="left:1197px;top:133.5px;width:685px;height:29.5px;background:#fff;box-sizing:border-box;border:1px solid #222;"></div>
<span class="t" style="font-family:'Liberation Serif', serif;font-size:28.5px;font-weight:bold;color:#111;line-height:28.5px;top:133.53px;transform:scaleX(1.1392);transform-origin:0 0;left:1396.00px;">Review:  Tree search</span>
<div style="left:1198px;top:192.5px;width:691px;height:203.5px;background:#fff;box-sizing:border-box;border:1px solid #111;"></div>
<span class="t" style="font-family:'Liberation Serif', serif;font-size:18.5px;font-weight:bold;color:#111;line-height:18.5px;top:204.91px;transform:scaleX(1.1627);transform-origin:0 0;left:1213.00px;">function</span>
<span class="t" style="font-family:'Liberation Serif', serif;font-size:18.5px;color:#111;line-height:18.5px;top:204.91px;transform:scaleX(1.2481);transform-origin:0 0;left:1298.00px;">T<span style="font-size:13.300px;-webkit-text-stroke:0.250px #111">R</span><span style="font-size:13.300px;-webkit-text-stroke:0.250px #111">E</span><span style="font-size:13.300px;-webkit-text-stroke:0.250px #111">E</span>-S<span style="font-size:13.300px;-webkit-text-stroke:0.250px #111">E</span><span style="font-size:13.300px;-webkit-text-stroke:0.250px #111">A</span><span style="font-size:13.300px;-webkit-text-stroke:0.250px #111">R</span><span style="font-size:13.300px;-webkit-text-stroke:0.250px #111">C</span><span style="font-size:13.300px;-webkit-text-stroke:0.250px #111">H</span>(</span>
<span class="t" style="font-family:'Liberation Serif', serif;font-size:18.5px;font-style:italic;color:#111;line-height:18.5px;top:204.91px;transform:scaleX(1.0662);transform-origin:0 0;left:1433.00px;">problem, fringe</span>
<span class="t" style="font-family:'Liberation Serif', serif;font-size:18.5px;color:#111;line-height:18.5px;top:204.91px;transform:scaleX(0.8911);transform-origin:0 0;left:1555.50px;">)</span>
<span class="t" style="font-family:'Liberation Serif', serif;font-size:18.5px;font-weight:bold;color:#111;line-height:18.5px;top:204.91px;transform:scaleX(1.1760);transform-origin:0 0;left:1566.50px;">returns</span>
<span class="t" style="font-family:'Liberation Sans', sans-serif;font-size:16.5px;color:#111;line-height:16.5px;top:206.23px;transform:scaleX(1.0625);transform-origin:0 0;left:1642.00px;">a solution, or failure</span>
<span class="t" style="font-family:'Liberation Serif', serif;font-size:18.5px;font-style:italic;color:#111;line-height:18.5px;top:230.41px;transform:scaleX(1.0633);transform-origin:0 0;left:1238.00px;">fringe</span>
<svg style="left:1290px;top:235.0px;" width="16.5" height="10" viewBox="0 0 16.5 10" shape-rendering="auto"><path d="M1 5h15.5M0.500 5q3.500-0.700 5-4.500M0.500 5q3.500 0.700 5 4.500" fill="none" stroke="#111" stroke-width="1.200"/></svg>
<span class="t" style="font-family:'Liberation Serif', serif;font-size:18.5px;color:#111;line-height:18.5px;top:230.41px;transform:scaleX(1.2544);transform-origin:0 0;left:1312.00px;">I<span style="font-size:13.300px;-webkit-text-stroke:0.250px #111">N</span><span style="font-size:13.300px;-webkit-text-stroke:0.250px #111">S</span><span style="font-size:13.300px;-webkit-text-stroke:0.250px #111">E</span><span style="font-size:13.300px;-webkit-text-stroke:0.250px #111">R</span><span style="font-size:13.300px;-webkit-text-stroke:0.250px #111">T</span>(M<span style="font-size:13.300px;-webkit-text-stroke:0.250px #111">A</span><span style="font-size:13.300px;-webkit-text-stroke:0.250px #111">K</span><span style="font-size:13.300px;-webkit-text-stroke:0.250px #111">E</span>-N<span style="font-size:13.300px;-webkit-text-stroke:0.250px #111">O</span><span style="font-size:13.300px;-webkit-text-stroke:0.250px #111">D</span><span style="font-size:13.300px;-webkit-text-stroke:0.250px #111">E</span>(I<span style="font-size:13.300px;-webkit-text-stroke:0.250px #111">N</span><span style="font-size:13.300px;-webkit-text-stroke:0.250px #111">I</span><span style="font-size:13.300px;-webkit-text-stroke:0.250px #111">T</span><span style="font-size:13.300px;-webkit-text-stroke:0.250px #111">I</span><span style="font-size:13.300px;-webkit-text-stroke:0.250px #111">A</span><span style="font-size:13.300px;-webkit-text-stroke:0.250px #111">L</span>-S<span style="font-size:13.300px;-webkit-text-stroke:0.250px #111">T</span><span style="font-size:13.300px;-webkit-text-stroke:0.250px #111">A</span><span style="font-size:13.300px;-webkit-text-stroke:0.250px #111">T</span><span style="font-size:13.300px;-webkit-text-stroke:0.250px #111">E</span>[</span>
<span class="t" style="font-family:'Liberation Serif', serif;font-size:18.5px;font-style:italic;color:#111;line-height:18.5px;top:230.41px;transform:scaleX(1.0249);transform-origin:0 0;left:1633.50px;">problem</span>
<span class="t" style="font-family:'Liberation Serif', serif;font-size:18.5px;color:#111;line-height:18.5px;top:230.41px;transform:scaleX(0.8848);transform-origin:0 0;left:1697.00px;">]),</span>
<span class="t" style="font-family:'Liberation Serif', serif;font-size:18.5px;font-style:italic;color:#111;line-height:18.5px;top:230.41px;transform:scaleX(1.0633);transform-origin:0 0;left:1718.00px;">fringe</span>
<span class="t" style="font-family:'Liberation Serif', serif;font-size:18.5px;color:#111;line-height:18.5px;top:230.41px;transform:scaleX(0.8911);transform-origin:0 0;left:1765.50px;">)</span>
<span class="t" style="font-family:'Liberation Serif', serif;font-size:18.5px;font-weight:bold;color:#111;line-height:18.5px;top:255.41px;transform:scaleX(1.1705);transform-origin:0 0;left:1238.00px;">loop do</span>
<span class="t" style="font-family:'Liberation Serif', serif;font-size:18.5px;font-weight:bold;color:#111;line-height:18.5px;top:280.41px;transform:scaleX(1.0608);transform-origin:0 0;left:1274.00px;">if</span>
<span class="t" style="font-family:'Liberation Serif', serif;font-size:18.5px;font-style:italic;color:#111;line-height:18.5px;top:280.41px;transform:scaleX(1.0859);transform-origin:0 0;left:1293.00px;">fringe</span>
<span class="t" style="font-family:'Liberation Sans', sans-serif;font-size:16.5px;color:#111;line-height:16.5px;top:281.73px;transform:scaleX(0.9929);transform-origin:0 0;left:1348.00px;">is empty</span>
<span class="t" style="font-family:'Liberation Serif', serif;font-size:18.5px;font-weight:bold;color:#111;line-height:18.5px;top:280.41px;transform:scaleX(1.1972);transform-origin:0 0;left:1416.50px;">then return</span>
<span class="t" style="font-family:'Liberation Sans', sans-serif;font-size:16.5px;color:#111;line-height:16.5px;top:281.73px;transform:scaleX(1.0567);transform-origin:0 0;left:1531.00px;">failure</span>
<span class="t" style="font-family:'Liberation Serif', serif;font-size:18.5px;font-style:italic;color:#111;line-height:18.5px;top:304.91px;transform:scaleX(1.0426);transform-origin:0 0;left:1274.00px;">node</span>
<svg style="left:1316.5px;top:309.5px;" width="16.0" height="10" viewBox="0 0 16.0 10" shape-rendering="auto"><path d="M1 5h15.0M0.500 5q3.500-0.700 5-4.500M0.500 5q3.500 0.700 5 4.500" fill="none" stroke="#111" stroke-width="1.200"/></svg>
<span class="t" style="font-family:'Liberation Serif', serif;font-size:18.5px;color:#111;line-height:18.5px;top:304.91px;transform:scaleX(1.2533);transform-origin:0 0;left:1338.00px;">R<span style="font-size:13.300px;-webkit-text-stroke:0.250px #111">E</span><span style="font-size:13.300px;-webkit-text-stroke:0.250px #111">M</span><span style="font-size:13.300px;-webkit-text-stroke:0.250px #111">O</span><span style="font-size:13.300px;-webkit-text-stroke:0.250px #111">V</span><span style="font-size:13.300px;-webkit-text-stroke:0.250px #111">E</span>-F<span style="font-size:13.300px;-webkit-text-stroke:0.250px #111">R</span><span style="font-size:13.300px;-webkit-text-stroke:0.250px #111">O</span><span style="font-size:13.300px;-webkit-text-stroke:0.250px #111">N</span><span style="font-size:13.300px;-webkit-text-stroke:0.250px #111">T</span>(</span>
<span class="t" style="font-family:'Liberation Serif', serif;font-size:18.5px;font-style:italic;color:#111;line-height:18.5px;top:304.91px;transform:scaleX(1.0859);transform-origin:0 0;left:1488.00px;">fringe</span>
<span class="t" style="font-family:'Liberation Serif', serif;font-size:18.5px;color:#111;line-height:18.5px;top:304.91px;transform:scaleX(0.8911);transform-origin:0 0;left:1536.50px;">)</span>
<span class="t" style="font-family:'Liberation Serif', serif;font-size:18.5px;font-weight:bold;color:#111;line-height:18.5px;top:329.91px;transform:scaleX(1.0608);transform-origin:0 0;left:1274.00px;">if</span>
<span class="t" style="font-family:'Liberation Serif', serif;font-size:18.5px;color:#111;line-height:18.5px;top:329.91px;transform:scaleX(1.2384);transform-origin:0 0;left:1294.00px;">G<span style="font-size:13.300px;-webkit-text-stroke:0.250px #111">O</span><span style="font-size:13.300px;-webkit-text-stroke:0.250px #111">A</span><span style="font-size:13.300px;-webkit-text-stroke:0.250px #111">L</span>-T<span style="font-size:13.300px;-webkit-text-stroke:0.250px #111">E</span><span style="font-size:13.300px;-webkit-text-stroke:0.250px #111">S</span><span style="font-size:13.300px;-webkit-text-stroke:0.250px #111">T</span>[</span>
<span class="t" style="font-family:'Liberation Serif', serif;font-size:18.5px;font-style:italic;color:#111;line-height:18.5px;top:329.91px;transform:scaleX(1.0249);transform-origin:0 0;left:1403.50px;">problem</span>
<span class="t" style="font-family:'Liberation Serif', serif;font-size:18.5px;color:#111;line-height:18.5px;top:329.91px;transform:scaleX(1.1286);transform-origin:0 0;left:1467.00px;">](S<span style="font-size:13.300px;-webkit-text-stroke:0.250px #111">T</span><span style="font-size:13.300px;-webkit-text-stroke:0.250px #111">A</span><span style="font-size:13.300px;-webkit-text-stroke:0.250px #111">T</span><span style="font-size:13.300px;-webkit-text-stroke:0.250px #111">E</span>[</span>
<span class="t" style="font-family:'Liberation Serif', serif;font-size:18.5px;font-style:italic;color:#111;line-height:18.5px;top:329.91px;transform:scaleX(1.0287);transform-origin:0 0;left:1540.00px;">node</span>
<span class="t" style="font-family:'Liberation Serif', serif;font-size:18.5px;color:#111;line-height:18.5px;top:329.91px;transform:scaleX(0.8923);transform-origin:0 0;left:1577.50px;">])</span>
<span class="t" style="font-family:'Liberation Serif', serif;font-size:18.5px;font-weight:bold;color:#111;line-height:18.5px;top:329.91px;transform:scaleX(1.1917);transform-origin:0 0;left:1596.00px;">then return</span>
<span class="t" style="font-family:'Liberation Serif', serif;font-size:18.5px;color:#111;line-height:18.5px;top:329.91px;transform:scaleX(1.2501);transform-origin:0 0;left:1711.50px;">S<span style="font-size:13.300px;-webkit-text-stroke:0.250px #111">O</span><span style="font-size:13.300px;-webkit-text-stroke:0.250px #111">L</span><span style="font-size:13.300px;-webkit-text-stroke:0.250px #111">U</span><span style="font-size:13.300px;-webkit-text-stroke:0.250px #111">T</span><span style="font-size:13.300px;-webkit-text-stroke:0.250px #111">I</span><span style="font-size:13.300px;-webkit-text-stroke:0.250px #111">O</span><span style="font-size:13.300px;-webkit-text-stroke:0.250px #111">N</span>(</span>
<span class="t" style="font-family:'Liberation Serif', serif;font-size:18.5px;font-style:italic;color:#111;line-height:18.5px;top:329.91px;transform:scaleX(1.0148);transform-origin:0 0;left:1807.00px;">node</span>
<span class="t" style="font-family:'Liberation Serif', serif;font-size:18.5px;color:#111;line-height:18.5px;top:329.91px;transform:scaleX(0.9722);transform-origin:0 0;left:1844.00px;">)</span>
<span class="t" style="font-family:'Liberation Serif', serif;font-size:18.5px;font-style:italic;color:#111;line-height:18.5px;top:354.91px;transform:scaleX(1.0746);transform-origin:0 0;left:1274.00px;">fringe</span>
<svg style="left:1326.5px;top:359.5px;" width="16.5" height="10" viewBox="0 0 16.5 10" shape-rendering="auto"><path d="M1 5h15.5M0.500 5q3.500-0.700 5-4.500M0.500 5q3.500 0.700 5 4.500" fill="none" stroke="#111" stroke-width="1.200"/></svg>
<span class="t" style="font-family:'Liberation Serif', serif;font-size:18.5px;color:#111;line-height:18.5px;top:354.91px;transform:scaleX(1.2517);transform-origin:0 0;left:1348.00px;">I<span style="font-size:13.300px;-webkit-text-stroke:0.250px #111">N</span><span style="font-size:13.300px;-webkit-text-stroke:0.250px #111">S</span><span style="font-size:13.300px;-webkit-text-stroke:0.250px #111">E</span><span style="font-size:13.300px;-webkit-text-stroke:0.250px #111">R</span><span style="font-size:13.300px;-webkit-text-stroke:0.250px #111">T</span>A<span style="font-size:13.300px;-webkit-text-stroke:0.250px #111">L</span><span style="font-size:13.300px;-webkit-text-stroke:0.250px #111">L</span>(E<span style="font-size:13.300px;-webkit-text-stroke:0.250px #111">X</span><span style="font-size:13.300px;-webkit-text-stroke:0.250px #111">P</span><span style="font-size:13.300px;-webkit-text-stroke:0.250px #111">A</span><span style="font-size:13.300px;-webkit-text-stroke:0.250px #111">N</span><span style="font-size:13.300px;-webkit-text-stroke:0.250px #111">D</span>(</span>
<span class="t" style="font-family:'Liberation Serif', serif;font-size:18.5px;font-style:italic;color:#111;line-height:18.5px;top:354.91px;transform:scaleX(1.0124);transform-origin:0 0;left:1533.50px;">node, problem</span>
<span class="t" style="font-family:'Liberation Serif', serif;font-size:18.5px;color:#111;line-height:18.5px;top:354.91px;transform:scaleX(0.9725);transform-origin:0 0;left:1641.50px;">),</span>
<span class="t" style="font-family:'Liberation Serif', serif;font-size:18.5px;font-style:italic;color:#111;line-height:18.5px;top:354.91px;transform:scaleX(1.0633);transform-origin:0 0;left:1657.00px;">fringe</span>
<span class="t" style="font-family:'Liberation Serif', serif;font-size:18.5px;color:#111;line-height:18.5px;top:354.91px;transform:scaleX(0.8911);transform-origin:0 0;left:1704.50px;">)</span>
<span class="t" style="font-family:'Liberation Sans', sans-serif;font-size:22.5px;color:#111;line-height:22.5px;top:412.75px;transform:scaleX(0.9209);transform-origin:0 0;left:1195.00px;">A search strategy is defined by picking the</span>
<span class="t" style="font-family:'Liberation Sans', sans-serif;font-size:22.5px;color:#b00000;line-height:22.5px;top:412.75px;transform:scaleX(0.8983);transform-origin:0 0;left:1590.00px;">order of node expansion</span>
<span class="t" style="font-family:'Liberation Serif', serif;font-size:9.5px;color:#000;line-height:9.5px;top:686.44px;transform:scaleX(1.0835);transform-origin:0 0;left:1195.00px;-webkit-text-stroke:0.200px #000;">CS3243 Slides (adapted from Russell and Norvig)</span>
<span class="t" style="font-family:'Liberation Serif', serif;font-size:9.5px;color:#000;line-height:9.5px;top:686.44px;transform:scaleX(1.0886);transform-origin:0 0;left:1820.00px;-webkit-text-stroke:0.200px #000;">Chapter 4</span>
<span class="t" style="font-family:'Liberation Serif', serif;font-size:9.5px;color:#000;line-height:9.5px;top:686.44px;left:1880.50px;-webkit-text-stroke:0.200px #000;">4</span>
<div style="left:1024px;top:738px;width:1024px;height:30px;background:#cfafb7;"></div>
<div style="left:1024px;top:738px;width:1024px;height:1px;background:#e7d8dc;"></div>
<div style="left:1024px;top:739px;width:1024px;height:1px;background:#fff;"></div>
<div style="left:1024px;top:740px;width:1024px;height:2px;background:#cfafb7;"></div>
<div style="left:1633px;top:739px;width:1px;height:3px;background:#b48a96;"></div>
<div style="left:1828px;top:739px;width:1px;height:3px;background:#b48a96;"></div>
<div style="left:1888px;top:739px;width:1px;height:3px;background:#b48a96;"></div>
<div style="left:1946px;top:739px;width:1px;height:3px;background:#b48a96;"></div>
<div style="left:1026.5px;top:745px;width:49.5px;height:21px;background:#cfafb7;box-shadow:inset -1px -1px 0 #000,inset 1px 1px 0 #fff,inset -2px -2px 0 #9f6070,inset 2px 2px 0 #e7d8dc;"></div>
<svg style="left:1029px;top:748px;" width="17" height="15" viewBox="0 0 17 15" shape-rendering="auto"><path d="M1 3q3-2 6 0v5q-3-2-6 0z" fill="#e04020"/><path d="M8.500 3q3 2 6 0v5q-3 2-6 0z" fill="#40a030"/><path d="M1 9.500q3-2 6 0v5q-3-2-6 0z" fill="#3060e0"/><path d="M8.500 9.500q3 2 6 0v5q-3 2-6 0z" fill="#e8c020"/></svg>
<span class="t" style="font-family:'Liberation Sans', sans-serif;font-size:11.5px;font-weight:bold;color:#000;line-height:11.5px;top:751.07px;-webkit-text-stroke:0.180px #000;transform:scaleX(1.0113);transform-origin:0 0;left:1046.50px;">Start</span>
<div style="left:1081.5px;top:745px;width:133.5px;height:21px;background:#cfafb7;box-shadow:inset -1px -1px 0 #000,inset 1px 1px 0 #fff,inset -2px -2px 0 #9f6070,inset 2px 2px 0 #e7d8dc;"></div>
<span class="t" style="font-family:'Liberation Sans', sans-serif;font-size:11.5px;color:#000;line-height:11.5px;top:750.57px;-webkit-text-stroke:0.180px #000;transform:scaleX(0.9014);transform-origin:0 0;left:1105.50px;">sf3 - [] - F-Secure SS...</span>
<svg style="left:1086px;top:748px;" width="15" height="14" viewBox="0 0 15 14" shape-rendering="auto"><rect x="0.500" y="0.500" width="13" height="10" fill="#fff" stroke="#444"/><path d="M3 3h7l-3.500 5z" fill="#2030d0" stroke="#000" stroke-width="0.700"/><path d="M3 12.500h8" stroke="#444" stroke-width="1.400"/></svg>
<div style="left:1219.5px;top:745px;width:134.0px;height:21px;background:#cfafb7;box-shadow:inset -1px -1px 0 #000,inset 1px 1px 0 #fff,inset -2px -2px 0 #9f6070,inset 2px 2px 0 #e7d8dc;"></div>
<span class="t" style="font-family:'Liberation Sans', sans-serif;font-size:11.5px;color:#000;line-height:11.5px;top:750.57px;-webkit-text-stroke:0.180px #000;transform:scaleX(0.9062);transform-origin:0 0;left:1243.50px;">suna - [suna] - F-Sec...</span>
<svg style="left:1223px;top:748px;" width="15" height="14" viewBox="0 0 15 14" shape-rendering="auto"><rect x="0.500" y="0.500" width="13" height="10" fill="#fff" stroke="#444"/><path d="M3 3h7l-3.500 5z" fill="#2030d0" stroke="#000" stroke-width="0.700"/><path d="M3 12.500h8" stroke="#444" stroke-width="1.400"/></svg>
<div style="left:1357px;top:745px;width:134px;height:21px;background:#cfafb7;box-shadow:inset -1px -1px 0 #000,inset 1px 1px 0 #fff,inset -2px -2px 0 #9f6070,inset 2px 2px 0 #e7d8dc;"></div>
<span class="t" style="font-family:'Liberation Sans', sans-serif;font-size:11.5px;color:#000;line-height:11.5px;top:750.57px;-webkit-text-stroke:0.180px #000;transform:scaleX(0.9112);transform-origin:0 0;left:1381.00px;">Inbox - Microsoft Out...</span>
<svg style="left:1361px;top:747px;" width="17" height="17" viewBox="0 0 17 17" shape-rendering="auto"><rect x="0.500" y="0.500" width="16" height="16" fill="#8a8a10"/><circle cx="8.500" cy="8.500" r="5.500" fill="none" stroke="#fff" stroke-width="1.600"/><path d="M8.500 5v4h3" stroke="#fff" stroke-width="1.400" fill="none"/></svg>
<div style="left:1495px;top:745px;width:135px;height:21px;background:#cfafb7;box-shadow:inset -1px -1px 0 #000,inset 1px 1px 0 #fff,inset -2px -2px 0 #9f6070,inset 2px 2px 0 #e7d8dc;"></div>
<span class="t" style="font-family:'Liberation Sans', sans-serif;font-size:11.5px;color:#000;line-height:11.5px;top:750.57px;-webkit-text-stroke:0.180px #000;transform:scaleX(0.8627);transform-origin:0 0;left:1519.00px;">m4-heuristics</span>
<svg style="left:1498px;top:747px;" width="17" height="17" viewBox="0 0 17 17" shape-rendering="auto"><path d="M4.500 2.500h9l2 2v11h-11z" fill="#fff" stroke="#444" stroke-width="1"/><rect x="1" y="1" width="10" height="10" fill="#fff" stroke="#d0501a" stroke-width="1.600"/><path d="M4 4h4M4 4v4h4" stroke="#d0501a" stroke-width="1.400" fill="none"/></svg>
<div style="left:1633.5px;top:745px;width:135.0px;height:21px;background:#cfafb7;box-shadow:inset -1px -1px 0 #000,inset 1px 1px 0 #fff,inset -2px -2px 0 #9f6070,inset 2px 2px 0 #e7d8dc;"></div>
<span class="t" style="font-family:'Liberation Sans', sans-serif;font-size:11.5px;color:#000;line-height:11.5px;top:750.57px;-webkit-text-stroke:0.180px #000;transform:scaleX(0.9160);transform-origin:0 0;left:1657.50px;">CS 3243 - Foundatio...</span>
<svg style="left:1637px;top:747px;" width="17" height="17" viewBox="0 0 17 17" shape-rendering="auto"><path d="M3.500 1.500h8l3 3v11h-11z" fill="#fff" stroke="#555"/><circle cx="7" cy="9" r="4.500" fill="none" stroke="#2060d0" stroke-width="2"/><path d="M2 10l10-4" stroke="#2060d0" stroke-width="1.500"/></svg>
<div style="left:1772px;top:745px;width:135px;height:21px;background:repeating-conic-gradient(#cfafb7 0 25%,#ffffff 0 50%) 0 0/2px 2px;box-shadow:inset 1px 1px 0 #000,inset -1px -1px 0 #fff,inset 2px 2px 0 #9f6070;"></div>
<span class="t" style="font-family:'Liberation Sans', sans-serif;font-size:11.5px;font-weight:bold;color:#000;line-height:11.5px;top:751.07px;-webkit-text-stroke:0.180px #000;transform:scaleX(1.0223);transform-origin:0 0;left:1797.00px;">gv: heuristics.pdf</span>
<div style="left:1776px;top:748px;width:16px;height:16px;background:#fff;background-image:repeating-conic-gradient(#000 0 25%,#fff 0 50%);background-size:2px 2px;"></div>
<div style="left:1779px;top:750px;width:10px;height:11px;background:#fff;border-radius:40%;"></div>
<svg style="left:1779px;top:750px;" width="10" height="11" viewBox="0 0 10 11" shape-rendering="auto"><path d="M2 3v2M6 3v2M2 8q3 2 6-0.500" stroke="#000" fill="none"/></svg>
<div style="left:1915px;top:745px;width:130px;height:21px;background:#cfafb7;box-shadow:inset 1px 1px 0 #9f6070,inset -1px -1px 0 #fff;"></div>
<span class="t" style="font-family:'Liberation Sans', sans-serif;font-size:12px;font-weight:bold;color:#000;line-height:12px;top:750.14px;-webkit-text-stroke:0.180px #000;left:1921.00px;">«</span>
<svg style="left:1932px;top:746px;" width="18" height="18" viewBox="0 0 18 18" shape-rendering="auto"><path d="M5.500 0.500h7l5 5v7l-5 5h-7l-5-5v-7z" fill="#1020d8"/><path d="M2 9h3l1.500-4 2 8 2-8 1.500 4h3" stroke="#f0f020" stroke-width="1.300" fill="none"/></svg>
<svg style="left:1950px;top:746px;" width="18" height="18" viewBox="0 0 18 18" shape-rendering="auto"><path d="M2 14l10-12 4 3-10 12z" fill="#c8c8c8" stroke="#666" stroke-width="0.700"/><path d="M11 1l-5 8h4l-4 8 9-10h-4z" fill="#f0a020" stroke="#a06000" stroke-width="0.500"/></svg>
<svg style="left:1969px;top:746px;" width="18" height="18" viewBox="0 0 18 18" shape-rendering="auto"><rect x="2" y="1" width="6" height="5" fill="#fff" stroke="#444"/><path d="M4 7l6 6" stroke="#20a0e0" stroke-width="3"/><circle cx="12" cy="12" r="4.500" fill="#fff" stroke="#d02020" stroke-width="1.800"/><path d="M9 15l6-6" stroke="#d02020" stroke-width="1.800"/></svg>
<span class="t" style="font-family:'Liberation Sans', sans-serif;font-size:11.5px;color:#000;line-height:11.5px;top:750.57px;-webkit-text-stroke:0.180px #000;transform:scaleX(0.9215);transform-origin:0 0;left:1993.00px;">11:16 AM</span>
</div></body></html>
